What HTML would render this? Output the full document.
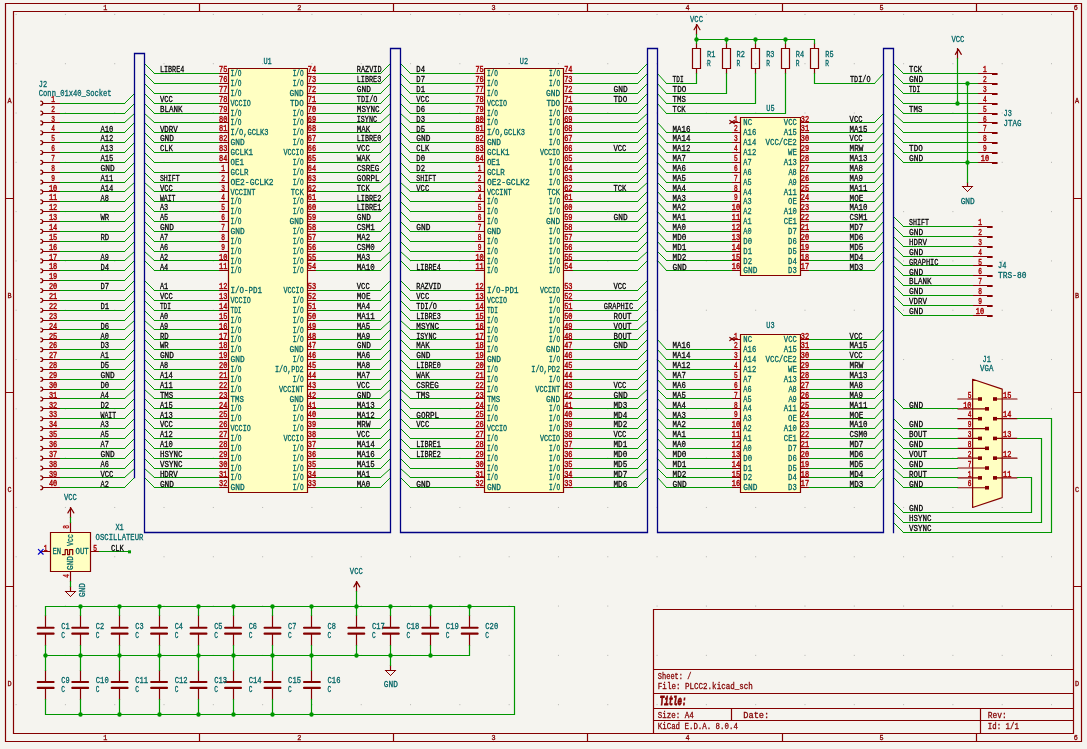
<!DOCTYPE html>
<html><head><meta charset="utf-8"><style>html,body{margin:0;padding:0;background:#F5F4EF;overflow:hidden}svg{display:block;will-change:transform}</style></head><body>
<svg width="1087" height="749" viewBox="0 0 1087 749" font-family='"Liberation Mono", monospace' font-size="7.6">
<rect width="1087" height="749" fill="#F5F4EF"/>
<path d="M15.61 14.41h1M15.61 63.71h1M15.61 113.02h1M15.61 162.32h1M15.61 211.63h1M15.61 260.93h1M15.61 310.24h1M15.61 359.54h1M15.61 408.85h1M15.61 458.15h1M15.61 507.46h1M15.61 556.76h1M15.61 606.07h1M15.61 655.37h1M15.61 704.68h1M64.91 14.41h1M64.91 63.71h1M64.91 113.02h1M64.91 162.32h1M64.91 211.63h1M64.91 260.93h1M64.91 310.24h1M64.91 359.54h1M64.91 408.85h1M64.91 458.15h1M64.91 507.46h1M64.91 556.76h1M64.91 606.07h1M64.91 655.37h1M64.91 704.68h1M114.22 14.41h1M114.22 63.71h1M114.22 113.02h1M114.22 162.32h1M114.22 211.63h1M114.22 260.93h1M114.22 310.24h1M114.22 359.54h1M114.22 408.85h1M114.22 458.15h1M114.22 507.46h1M114.22 556.76h1M114.22 606.07h1M114.22 655.37h1M114.22 704.68h1M163.52 14.41h1M163.52 63.71h1M163.52 113.02h1M163.52 162.32h1M163.52 211.63h1M163.52 260.93h1M163.52 310.24h1M163.52 359.54h1M163.52 408.85h1M163.52 458.15h1M163.52 507.46h1M163.52 556.76h1M163.52 606.07h1M163.52 655.37h1M163.52 704.68h1M212.83 14.41h1M212.83 63.71h1M212.83 113.02h1M212.83 162.32h1M212.83 211.63h1M212.83 260.93h1M212.83 310.24h1M212.83 359.54h1M212.83 408.85h1M212.83 458.15h1M212.83 507.46h1M212.83 556.76h1M212.83 606.07h1M212.83 655.37h1M212.83 704.68h1M262.13 14.41h1M262.13 63.71h1M262.13 113.02h1M262.13 162.32h1M262.13 211.63h1M262.13 260.93h1M262.13 310.24h1M262.13 359.54h1M262.13 408.85h1M262.13 458.15h1M262.13 507.46h1M262.13 556.76h1M262.13 606.07h1M262.13 655.37h1M262.13 704.68h1M311.44 14.41h1M311.44 63.71h1M311.44 113.02h1M311.44 162.32h1M311.44 211.63h1M311.44 260.93h1M311.44 310.24h1M311.44 359.54h1M311.44 408.85h1M311.44 458.15h1M311.44 507.46h1M311.44 556.76h1M311.44 606.07h1M311.44 655.37h1M311.44 704.68h1M360.74 14.41h1M360.74 63.71h1M360.74 113.02h1M360.74 162.32h1M360.74 211.63h1M360.74 260.93h1M360.74 310.24h1M360.74 359.54h1M360.74 408.85h1M360.74 458.15h1M360.74 507.46h1M360.74 556.76h1M360.74 606.07h1M360.74 655.37h1M360.74 704.68h1M410.05 14.41h1M410.05 63.71h1M410.05 113.02h1M410.05 162.32h1M410.05 211.63h1M410.05 260.93h1M410.05 310.24h1M410.05 359.54h1M410.05 408.85h1M410.05 458.15h1M410.05 507.46h1M410.05 556.76h1M410.05 606.07h1M410.05 655.37h1M410.05 704.68h1M459.35 14.41h1M459.35 63.71h1M459.35 113.02h1M459.35 162.32h1M459.35 211.63h1M459.35 260.93h1M459.35 310.24h1M459.35 359.54h1M459.35 408.85h1M459.35 458.15h1M459.35 507.46h1M459.35 556.76h1M459.35 606.07h1M459.35 655.37h1M459.35 704.68h1M508.66 14.41h1M508.66 63.71h1M508.66 113.02h1M508.66 162.32h1M508.66 211.63h1M508.66 260.93h1M508.66 310.24h1M508.66 359.54h1M508.66 408.85h1M508.66 458.15h1M508.66 507.46h1M508.66 556.76h1M508.66 606.07h1M508.66 655.37h1M508.66 704.68h1M557.96 14.41h1M557.96 63.71h1M557.96 113.02h1M557.96 162.32h1M557.96 211.63h1M557.96 260.93h1M557.96 310.24h1M557.96 359.54h1M557.96 408.85h1M557.96 458.15h1M557.96 507.46h1M557.96 556.76h1M557.96 606.07h1M557.96 655.37h1M557.96 704.68h1M607.27 14.41h1M607.27 63.71h1M607.27 113.02h1M607.27 162.32h1M607.27 211.63h1M607.27 260.93h1M607.27 310.24h1M607.27 359.54h1M607.27 408.85h1M607.27 458.15h1M607.27 507.46h1M607.27 556.76h1M607.27 606.07h1M607.27 655.37h1M607.27 704.68h1M656.57 14.41h1M656.57 63.71h1M656.57 113.02h1M656.57 162.32h1M656.57 211.63h1M656.57 260.93h1M656.57 310.24h1M656.57 359.54h1M656.57 408.85h1M656.57 458.15h1M656.57 507.46h1M656.57 556.76h1M656.57 606.07h1M656.57 655.37h1M656.57 704.68h1M705.88 14.41h1M705.88 63.71h1M705.88 113.02h1M705.88 162.32h1M705.88 211.63h1M705.88 260.93h1M705.88 310.24h1M705.88 359.54h1M705.88 408.85h1M705.88 458.15h1M705.88 507.46h1M705.88 556.76h1M705.88 606.07h1M705.88 655.37h1M705.88 704.68h1M755.18 14.41h1M755.18 63.71h1M755.18 113.02h1M755.18 162.32h1M755.18 211.63h1M755.18 260.93h1M755.18 310.24h1M755.18 359.54h1M755.18 408.85h1M755.18 458.15h1M755.18 507.46h1M755.18 556.76h1M755.18 606.07h1M755.18 655.37h1M755.18 704.68h1M804.49 14.41h1M804.49 63.71h1M804.49 113.02h1M804.49 162.32h1M804.49 211.63h1M804.49 260.93h1M804.49 310.24h1M804.49 359.54h1M804.49 408.85h1M804.49 458.15h1M804.49 507.46h1M804.49 556.76h1M804.49 606.07h1M804.49 655.37h1M804.49 704.68h1M853.79 14.41h1M853.79 63.71h1M853.79 113.02h1M853.79 162.32h1M853.79 211.63h1M853.79 260.93h1M853.79 310.24h1M853.79 359.54h1M853.79 408.85h1M853.79 458.15h1M853.79 507.46h1M853.79 556.76h1M853.79 606.07h1M853.79 655.37h1M853.79 704.68h1M903.1 14.41h1M903.1 63.71h1M903.1 113.02h1M903.1 162.32h1M903.1 211.63h1M903.1 260.93h1M903.1 310.24h1M903.1 359.54h1M903.1 408.85h1M903.1 458.15h1M903.1 507.46h1M903.1 556.76h1M903.1 606.07h1M903.1 655.37h1M903.1 704.68h1M952.4 14.41h1M952.4 63.71h1M952.4 113.02h1M952.4 162.32h1M952.4 211.63h1M952.4 260.93h1M952.4 310.24h1M952.4 359.54h1M952.4 408.85h1M952.4 458.15h1M952.4 507.46h1M952.4 556.76h1M952.4 606.07h1M952.4 655.37h1M952.4 704.68h1M1001.71 14.41h1M1001.71 63.71h1M1001.71 113.02h1M1001.71 162.32h1M1001.71 211.63h1M1001.71 260.93h1M1001.71 310.24h1M1001.71 359.54h1M1001.71 408.85h1M1001.71 458.15h1M1001.71 507.46h1M1001.71 556.76h1M1001.71 606.07h1M1001.71 655.37h1M1001.71 704.68h1M1051.01 14.41h1M1051.01 63.71h1M1051.01 113.02h1M1051.01 162.32h1M1051.01 211.63h1M1051.01 260.93h1M1051.01 310.24h1M1051.01 359.54h1M1051.01 408.85h1M1051.01 458.15h1M1051.01 507.46h1M1051.01 556.76h1M1051.01 606.07h1M1051.01 655.37h1M1051.01 704.68h1" stroke="#B4B4B0" stroke-width="1" fill="none"/>
<rect x="228.12" y="68.64" width="78.89" height="424.02" fill="#FFFFC2"/>
<rect x="484.5" y="68.64" width="78.89" height="424.02" fill="#FFFFC2"/>
<rect x="740.89" y="117.95" width="59.17" height="157.78" fill="#FFFFC2"/>
<rect x="740.89" y="334.89" width="59.17" height="157.78" fill="#FFFFC2"/>
<rect x="991.98" y="73" width="5.6" height="2" fill="#840000"/>
<rect x="991.98" y="83" width="5.6" height="2" fill="#840000"/>
<rect x="991.98" y="93" width="5.6" height="2" fill="#840000"/>
<rect x="991.98" y="103" width="5.6" height="2" fill="#840000"/>
<rect x="991.98" y="113" width="5.6" height="2" fill="#840000"/>
<rect x="991.98" y="122" width="5.6" height="2" fill="#840000"/>
<rect x="991.98" y="132" width="5.6" height="2" fill="#840000"/>
<rect x="991.98" y="142" width="5.6" height="2" fill="#840000"/>
<rect x="991.98" y="152" width="5.6" height="2" fill="#840000"/>
<rect x="991.98" y="162" width="5.6" height="2" fill="#840000"/>
<rect x="987.05" y="226" width="5.6" height="2" fill="#840000"/>
<rect x="987.05" y="236" width="5.6" height="2" fill="#840000"/>
<rect x="987.05" y="246" width="5.6" height="2" fill="#840000"/>
<rect x="987.05" y="256" width="5.6" height="2" fill="#840000"/>
<rect x="987.05" y="265" width="5.6" height="2" fill="#840000"/>
<rect x="987.05" y="275" width="5.6" height="2" fill="#840000"/>
<rect x="987.05" y="285" width="5.6" height="2" fill="#840000"/>
<rect x="987.05" y="295" width="5.6" height="2" fill="#840000"/>
<rect x="987.05" y="305" width="5.6" height="2" fill="#840000"/>
<rect x="987.05" y="315" width="5.6" height="2" fill="#840000"/>
<path d="M972.63 379.26L1002.21 389.12L1002.21 497.6L972.63 507.46Z" fill="#FFFFC2"/>
<rect x="978" y="397.19" width="4" height="3.6" fill="#840000"/>
<rect x="985" y="407.05" width="4" height="3.6" fill="#840000"/>
<rect x="978" y="416.91" width="4" height="3.6" fill="#840000"/>
<rect x="985" y="426.77" width="4" height="3.6" fill="#840000"/>
<rect x="978" y="436.63" width="4" height="3.6" fill="#840000"/>
<rect x="985" y="446.49" width="4" height="3.6" fill="#840000"/>
<rect x="978" y="456.35" width="4" height="3.6" fill="#840000"/>
<rect x="985" y="466.21" width="4" height="3.6" fill="#840000"/>
<rect x="978" y="476.07" width="4" height="3.6" fill="#840000"/>
<rect x="985" y="485.94" width="4" height="3.6" fill="#840000"/>
<rect x="993" y="397.19" width="4" height="3.6" fill="#840000"/>
<rect x="993" y="416.91" width="4" height="3.6" fill="#840000"/>
<rect x="993" y="436.63" width="4" height="3.6" fill="#840000"/>
<rect x="993" y="456.35" width="4" height="3.6" fill="#840000"/>
<rect x="993" y="476.07" width="4" height="3.6" fill="#840000"/>
<rect x="50.62" y="532.11" width="39.44" height="39.44" fill="#FFFFC2"/>
<rect x="128.01" y="550.33" width="3" height="3" fill="#009600"/>
<path d="M5.5 3.5H1081.5M1081.5 3.5V741.5M5.5 741.5H1081.5M5.5 3.5V741.5M13.5 11.5H1073.5M1073.5 11.5V733.5M13.5 733.5H1073.5M13.5 11.5V733.5M199.5 3.5V11.5M199.5 733.5V741.5M393.5 3.5V11.5M393.5 733.5V741.5M587.5 3.5V11.5M587.5 733.5V741.5M782.5 3.5V11.5M782.5 733.5V741.5M976.5 3.5V11.5M976.5 733.5V741.5M5.5 198.5H13.5M1073.5 198.5H1081.5M5.5 392.5H13.5M1073.5 392.5H1081.5M5.5 586.5H13.5M1073.5 586.5H1081.5M653.5 609.5H1073.5M1073.5 609.5V733.5M653.5 733.5H1073.5M653.5 609.5V733.5M653.5 669.5H1073.5M653.5 693.5H1073.5M653.5 708.5H1073.5M653.5 720.5H1073.5M731.5 708.5V720.5M980.5 708.5V733.5M45.5 103.5H60.5M42.5 103.5H45.5M45.5 113.5H60.5M42.5 113.5H45.5M45.5 122.5H60.5M42.5 122.5H45.5M45.5 132.5H60.5M42.5 132.5H45.5M45.5 142.5H60.5M42.5 142.5H45.5M45.5 152.5H60.5M42.5 152.5H45.5M45.5 162.5H60.5M42.5 162.5H45.5M45.5 172.5H60.5M42.5 172.5H45.5M45.5 182.5H60.5M42.5 182.5H45.5M45.5 191.5H60.5M42.5 191.5H45.5M45.5 201.5H60.5M42.5 201.5H45.5M45.5 211.5H60.5M42.5 211.5H45.5M45.5 221.5H60.5M42.5 221.5H45.5M45.5 231.5H60.5M42.5 231.5H45.5M45.5 241.5H60.5M42.5 241.5H45.5M45.5 251.5H60.5M42.5 251.5H45.5M45.5 260.5H60.5M42.5 260.5H45.5M45.5 270.5H60.5M42.5 270.5H45.5M45.5 280.5H60.5M42.5 280.5H45.5M45.5 290.5H60.5M42.5 290.5H45.5M45.5 300.5H60.5M42.5 300.5H45.5M45.5 310.5H60.5M42.5 310.5H45.5M45.5 320.5H60.5M42.5 320.5H45.5M45.5 329.5H60.5M42.5 329.5H45.5M45.5 339.5H60.5M42.5 339.5H45.5M45.5 349.5H60.5M42.5 349.5H45.5M45.5 359.5H60.5M42.5 359.5H45.5M45.5 369.5H60.5M42.5 369.5H45.5M45.5 379.5H60.5M42.5 379.5H45.5M45.5 389.5H60.5M42.5 389.5H45.5M45.5 398.5H60.5M42.5 398.5H45.5M45.5 408.5H60.5M42.5 408.5H45.5M45.5 418.5H60.5M42.5 418.5H45.5M45.5 428.5H60.5M42.5 428.5H45.5M45.5 438.5H60.5M42.5 438.5H45.5M45.5 448.5H60.5M42.5 448.5H45.5M45.5 458.5H60.5M42.5 458.5H45.5M45.5 468.5H60.5M42.5 468.5H45.5M45.5 477.5H60.5M42.5 477.5H45.5M45.5 487.5H60.5M42.5 487.5H45.5M228.5 68.5H307.5M307.5 68.5V492.5M228.5 492.5H307.5M228.5 68.5V492.5M218.5 73.5H228.5M307.5 73.5H316.5M218.5 83.5H228.5M307.5 83.5H316.5M218.5 93.5H228.5M307.5 93.5H316.5M218.5 103.5H228.5M307.5 103.5H316.5M218.5 113.5H228.5M307.5 113.5H316.5M218.5 122.5H228.5M307.5 122.5H316.5M218.5 132.5H228.5M307.5 132.5H316.5M218.5 142.5H228.5M307.5 142.5H316.5M218.5 152.5H228.5M307.5 152.5H316.5M218.5 162.5H228.5M307.5 162.5H316.5M218.5 172.5H228.5M307.5 172.5H316.5M218.5 182.5H228.5M307.5 182.5H316.5M218.5 191.5H228.5M307.5 191.5H316.5M218.5 201.5H228.5M307.5 201.5H316.5M218.5 211.5H228.5M307.5 211.5H316.5M218.5 221.5H228.5M307.5 221.5H316.5M218.5 231.5H228.5M307.5 231.5H316.5M218.5 241.5H228.5M307.5 241.5H316.5M218.5 251.5H228.5M307.5 251.5H316.5M218.5 260.5H228.5M307.5 260.5H316.5M218.5 270.5H228.5M307.5 270.5H316.5M218.5 290.5H228.5M307.5 290.5H316.5M218.5 300.5H228.5M307.5 300.5H316.5M218.5 310.5H228.5M307.5 310.5H316.5M218.5 320.5H228.5M307.5 320.5H316.5M218.5 329.5H228.5M307.5 329.5H316.5M218.5 339.5H228.5M307.5 339.5H316.5M218.5 349.5H228.5M307.5 349.5H316.5M218.5 359.5H228.5M307.5 359.5H316.5M218.5 369.5H228.5M307.5 369.5H316.5M218.5 379.5H228.5M307.5 379.5H316.5M218.5 389.5H228.5M307.5 389.5H316.5M218.5 398.5H228.5M307.5 398.5H316.5M218.5 408.5H228.5M307.5 408.5H316.5M218.5 418.5H228.5M307.5 418.5H316.5M218.5 428.5H228.5M307.5 428.5H316.5M218.5 438.5H228.5M307.5 438.5H316.5M218.5 448.5H228.5M307.5 448.5H316.5M218.5 458.5H228.5M307.5 458.5H316.5M218.5 468.5H228.5M307.5 468.5H316.5M218.5 477.5H228.5M307.5 477.5H316.5M218.5 487.5H228.5M307.5 487.5H316.5M484.5 68.5H563.5M563.5 68.5V492.5M484.5 492.5H563.5M484.5 68.5V492.5M474.5 73.5H484.5M563.5 73.5H573.5M474.5 83.5H484.5M563.5 83.5H573.5M474.5 93.5H484.5M563.5 93.5H573.5M474.5 103.5H484.5M563.5 103.5H573.5M474.5 113.5H484.5M563.5 113.5H573.5M474.5 122.5H484.5M563.5 122.5H573.5M474.5 132.5H484.5M563.5 132.5H573.5M474.5 142.5H484.5M563.5 142.5H573.5M474.5 152.5H484.5M563.5 152.5H573.5M474.5 162.5H484.5M563.5 162.5H573.5M474.5 172.5H484.5M563.5 172.5H573.5M474.5 182.5H484.5M563.5 182.5H573.5M474.5 191.5H484.5M563.5 191.5H573.5M474.5 201.5H484.5M563.5 201.5H573.5M474.5 211.5H484.5M563.5 211.5H573.5M474.5 221.5H484.5M563.5 221.5H573.5M474.5 231.5H484.5M563.5 231.5H573.5M474.5 241.5H484.5M563.5 241.5H573.5M474.5 251.5H484.5M563.5 251.5H573.5M474.5 260.5H484.5M563.5 260.5H573.5M474.5 270.5H484.5M563.5 270.5H573.5M474.5 290.5H484.5M563.5 290.5H573.5M474.5 300.5H484.5M563.5 300.5H573.5M474.5 310.5H484.5M563.5 310.5H573.5M474.5 320.5H484.5M563.5 320.5H573.5M474.5 329.5H484.5M563.5 329.5H573.5M474.5 339.5H484.5M563.5 339.5H573.5M474.5 349.5H484.5M563.5 349.5H573.5M474.5 359.5H484.5M563.5 359.5H573.5M474.5 369.5H484.5M563.5 369.5H573.5M474.5 379.5H484.5M563.5 379.5H573.5M474.5 389.5H484.5M563.5 389.5H573.5M474.5 398.5H484.5M563.5 398.5H573.5M474.5 408.5H484.5M563.5 408.5H573.5M474.5 418.5H484.5M563.5 418.5H573.5M474.5 428.5H484.5M563.5 428.5H573.5M474.5 438.5H484.5M563.5 438.5H573.5M474.5 448.5H484.5M563.5 448.5H573.5M474.5 458.5H484.5M563.5 458.5H573.5M474.5 468.5H484.5M563.5 468.5H573.5M474.5 477.5H484.5M563.5 477.5H573.5M474.5 487.5H484.5M563.5 487.5H573.5M692.5 48.5H700.5M700.5 48.5V68.5M692.5 68.5H700.5M692.5 48.5V68.5M696.5 43.5V48.5M696.5 68.5V73.5M722.5 48.5H730.5M730.5 48.5V68.5M722.5 68.5H730.5M722.5 48.5V68.5M726.5 43.5V48.5M726.5 68.5V73.5M751.5 48.5H759.5M759.5 48.5V68.5M751.5 68.5H759.5M751.5 48.5V68.5M755.5 43.5V48.5M755.5 68.5V73.5M781.5 48.5H789.5M789.5 48.5V68.5M781.5 68.5H789.5M781.5 48.5V68.5M785.5 43.5V48.5M785.5 68.5V73.5M810.5 48.5H818.5M818.5 48.5V68.5M810.5 68.5H818.5M810.5 48.5V68.5M814.5 43.5V48.5M814.5 68.5V73.5M696.5 24.5V34.5M740.5 117.5H800.5M800.5 117.5V275.5M740.5 275.5H800.5M740.5 117.5V275.5M731.5 122.5H740.5M800.5 122.5H809.5M731.5 132.5H740.5M800.5 132.5H809.5M731.5 142.5H740.5M800.5 142.5H809.5M731.5 152.5H740.5M800.5 152.5H809.5M731.5 162.5H740.5M800.5 162.5H809.5M731.5 172.5H740.5M800.5 172.5H809.5M731.5 182.5H740.5M800.5 182.5H809.5M731.5 191.5H740.5M800.5 191.5H809.5M731.5 201.5H740.5M800.5 201.5H809.5M731.5 211.5H740.5M800.5 211.5H809.5M731.5 221.5H740.5M800.5 221.5H809.5M731.5 231.5H740.5M800.5 231.5H809.5M731.5 241.5H740.5M800.5 241.5H809.5M731.5 251.5H740.5M800.5 251.5H809.5M731.5 260.5H740.5M800.5 260.5H809.5M731.5 270.5H740.5M800.5 270.5H809.5M740.5 334.5H800.5M800.5 334.5V492.5M740.5 492.5H800.5M740.5 334.5V492.5M731.5 339.5H740.5M800.5 339.5H809.5M731.5 349.5H740.5M800.5 349.5H809.5M731.5 359.5H740.5M800.5 359.5H809.5M731.5 369.5H740.5M800.5 369.5H809.5M731.5 379.5H740.5M800.5 379.5H809.5M731.5 389.5H740.5M800.5 389.5H809.5M731.5 398.5H740.5M800.5 398.5H809.5M731.5 408.5H740.5M800.5 408.5H809.5M731.5 418.5H740.5M800.5 418.5H809.5M731.5 428.5H740.5M800.5 428.5H809.5M731.5 438.5H740.5M800.5 438.5H809.5M731.5 448.5H740.5M800.5 448.5H809.5M731.5 458.5H740.5M800.5 458.5H809.5M731.5 468.5H740.5M800.5 468.5H809.5M731.5 477.5H740.5M800.5 477.5H809.5M731.5 487.5H740.5M800.5 487.5H809.5M977.5 73.5H993.5M977.5 83.5H993.5M977.5 93.5H993.5M977.5 103.5H993.5M977.5 113.5H993.5M977.5 122.5H993.5M977.5 132.5H993.5M977.5 142.5H993.5M977.5 152.5H993.5M977.5 162.5H993.5M957.5 48.5V58.5M967.5 182.5V186.5M962.5 186.5H972.5M972.5 226.5H988.5M972.5 236.5H988.5M972.5 246.5H988.5M972.5 256.5H988.5M972.5 265.5H988.5M972.5 275.5H988.5M972.5 285.5H988.5M972.5 295.5H988.5M972.5 305.5H988.5M972.5 315.5H988.5M50.5 532.5H90.5M90.5 532.5V571.5M50.5 571.5H90.5M50.5 532.5V571.5M70.5 522.5V532.5M70.5 571.5V581.5M40.5 551.5H50.5M90.5 551.5H99.5M70.5 507.5V517.5M70.5 586.5V591.5M65.5 591.5H75.5M45.5 615.5V627.5M45.5 633.5V645.5M80.5 615.5V627.5M80.5 633.5V645.5M119.5 615.5V627.5M119.5 633.5V645.5M159.5 615.5V627.5M159.5 633.5V645.5M198.5 615.5V627.5M198.5 633.5V645.5M233.5 615.5V627.5M233.5 633.5V645.5M272.5 615.5V627.5M272.5 633.5V645.5M311.5 615.5V627.5M311.5 633.5V645.5M356.5 615.5V627.5M356.5 633.5V645.5M390.5 615.5V627.5M390.5 633.5V645.5M430.5 615.5V627.5M430.5 633.5V645.5M469.5 615.5V627.5M469.5 633.5V645.5M45.5 670.5V681.5M45.5 687.5V699.5M80.5 670.5V681.5M80.5 687.5V699.5M119.5 670.5V681.5M119.5 687.5V699.5M159.5 670.5V681.5M159.5 687.5V699.5M198.5 670.5V681.5M198.5 687.5V699.5M233.5 670.5V681.5M233.5 687.5V699.5M272.5 670.5V681.5M272.5 687.5V699.5M311.5 670.5V681.5M311.5 687.5V699.5M356.5 581.5V591.5M390.5 665.5V670.5M385.5 670.5H395.5" stroke="#840000" stroke-width="1.2" fill="none" stroke-linecap="square" stroke-linejoin="round"/>
<path d="M40.76 101.18A1.97 1.97 0 0 1 40.76 105.13M40.76 111.04A1.97 1.97 0 0 1 40.76 114.99M40.76 120.9A1.97 1.97 0 0 1 40.76 124.85M40.76 130.77A1.97 1.97 0 0 1 40.76 134.71M40.76 140.63A1.97 1.97 0 0 1 40.76 144.57M40.76 150.49A1.97 1.97 0 0 1 40.76 154.43M40.76 160.35A1.97 1.97 0 0 1 40.76 164.29M40.76 170.21A1.97 1.97 0 0 1 40.76 174.15M40.76 180.07A1.97 1.97 0 0 1 40.76 184.02M40.76 189.93A1.97 1.97 0 0 1 40.76 193.88M40.76 199.79A1.97 1.97 0 0 1 40.76 203.74M40.76 209.65A1.97 1.97 0 0 1 40.76 213.6M40.76 219.51A1.97 1.97 0 0 1 40.76 223.46M40.76 229.38A1.97 1.97 0 0 1 40.76 233.32M40.76 239.24A1.97 1.97 0 0 1 40.76 243.18M40.76 249.1A1.97 1.97 0 0 1 40.76 253.04M40.76 258.96A1.97 1.97 0 0 1 40.76 262.9M40.76 268.82A1.97 1.97 0 0 1 40.76 272.76M40.76 278.68A1.97 1.97 0 0 1 40.76 282.63M40.76 288.54A1.97 1.97 0 0 1 40.76 292.49M40.76 298.4A1.97 1.97 0 0 1 40.76 302.35M40.76 308.26A1.97 1.97 0 0 1 40.76 312.21M40.76 318.13A1.97 1.97 0 0 1 40.76 322.07M40.76 327.99A1.97 1.97 0 0 1 40.76 331.93M40.76 337.85A1.97 1.97 0 0 1 40.76 341.79M40.76 347.71A1.97 1.97 0 0 1 40.76 351.65M40.76 357.57A1.97 1.97 0 0 1 40.76 361.51M40.76 367.43A1.97 1.97 0 0 1 40.76 371.37M40.76 377.29A1.97 1.97 0 0 1 40.76 381.24M40.76 387.15A1.97 1.97 0 0 1 40.76 391.1M40.76 397.01A1.97 1.97 0 0 1 40.76 400.96M40.76 406.87A1.97 1.97 0 0 1 40.76 410.82M40.76 416.74A1.97 1.97 0 0 1 40.76 420.68M40.76 426.6A1.97 1.97 0 0 1 40.76 430.54M40.76 436.46A1.97 1.97 0 0 1 40.76 440.4M40.76 446.32A1.97 1.97 0 0 1 40.76 450.26M40.76 456.18A1.97 1.97 0 0 1 40.76 460.12M40.76 466.04A1.97 1.97 0 0 1 40.76 469.99M40.76 475.9A1.97 1.97 0 0 1 40.76 479.85M40.76 485.76A1.97 1.97 0 0 1 40.76 489.71M694.06 29.7L697.02 24.77L699.98 29.7M729.83 120.4L734.23 123.6M729.83 123.6L734.23 120.4M729.83 337.4L734.23 340.6M729.83 340.6L734.23 337.4M955.38 54.35L958.33 49.42L961.29 54.35M972.63 379.26L1002.21 389.12L1002.21 497.6L972.63 507.46ZM957.83 398.99L980 398.99M957.83 408.85L987 408.85M957.83 418.71L980 418.71M957.83 428.57L987 428.57M957.83 438.43L980 438.43M957.83 448.29L987 448.29M957.83 458.15L980 458.15M957.83 468.01L987 468.01M957.83 477.87L980 477.87M957.83 487.74L987 487.74M995 398.99L1017 398.99M995 418.71L1017 418.71M995 438.43L1017 438.43M995 458.15L1017 458.15M995 477.87L1017 477.87M67.88 512.89L70.84 507.96L73.8 512.89M62.4 554.6L65.2 554.6L65.2 549.6L67.6 549.6L67.6 554.6L69.6 554.6L69.6 549.6L72.7 549.6L72.7 554.6M353.85 586.85L356.81 581.92L359.77 586.85" stroke="#840000" stroke-width="1.2" fill="none" stroke-linecap="round" stroke-linejoin="round"/>
<path d="M60.5 103.5H124.5M60.5 113.5H124.5M60.5 122.5H124.5M60.5 132.5H124.5M60.5 142.5H124.5M60.5 152.5H124.5M60.5 162.5H124.5M60.5 172.5H124.5M60.5 182.5H124.5M60.5 191.5H124.5M60.5 201.5H124.5M60.5 211.5H124.5M60.5 221.5H124.5M60.5 231.5H124.5M60.5 241.5H124.5M60.5 251.5H124.5M60.5 260.5H124.5M60.5 270.5H124.5M60.5 280.5H124.5M60.5 290.5H124.5M60.5 300.5H124.5M60.5 310.5H124.5M60.5 320.5H124.5M60.5 329.5H124.5M60.5 339.5H124.5M60.5 349.5H124.5M60.5 359.5H124.5M60.5 369.5H124.5M60.5 379.5H124.5M60.5 389.5H124.5M60.5 398.5H124.5M60.5 408.5H124.5M60.5 418.5H124.5M60.5 428.5H124.5M60.5 438.5H124.5M60.5 448.5H124.5M60.5 458.5H124.5M60.5 468.5H124.5M60.5 477.5H124.5M60.5 487.5H124.5M154.5 73.5H218.5M316.5 73.5H380.5M154.5 83.5H218.5M316.5 83.5H380.5M154.5 93.5H218.5M316.5 93.5H380.5M154.5 103.5H218.5M316.5 103.5H380.5M154.5 113.5H218.5M316.5 113.5H380.5M154.5 122.5H218.5M316.5 122.5H380.5M154.5 132.5H218.5M316.5 132.5H380.5M154.5 142.5H218.5M316.5 142.5H380.5M154.5 152.5H218.5M316.5 152.5H380.5M154.5 162.5H218.5M316.5 162.5H380.5M154.5 172.5H218.5M316.5 172.5H380.5M154.5 182.5H218.5M316.5 182.5H380.5M154.5 191.5H218.5M316.5 191.5H380.5M154.5 201.5H218.5M316.5 201.5H380.5M154.5 211.5H218.5M316.5 211.5H380.5M154.5 221.5H218.5M316.5 221.5H380.5M154.5 231.5H218.5M316.5 231.5H380.5M154.5 241.5H218.5M316.5 241.5H380.5M154.5 251.5H218.5M316.5 251.5H380.5M154.5 260.5H218.5M316.5 260.5H380.5M154.5 270.5H218.5M316.5 270.5H380.5M154.5 290.5H218.5M316.5 290.5H380.5M154.5 300.5H218.5M316.5 300.5H380.5M154.5 310.5H218.5M316.5 310.5H380.5M154.5 320.5H218.5M316.5 320.5H380.5M154.5 329.5H218.5M316.5 329.5H380.5M154.5 339.5H218.5M316.5 339.5H380.5M154.5 349.5H218.5M316.5 349.5H380.5M154.5 359.5H218.5M316.5 359.5H380.5M154.5 369.5H218.5M316.5 369.5H380.5M154.5 379.5H218.5M316.5 379.5H380.5M154.5 389.5H218.5M316.5 389.5H380.5M154.5 398.5H218.5M316.5 398.5H380.5M154.5 408.5H218.5M316.5 408.5H380.5M154.5 418.5H218.5M316.5 418.5H380.5M154.5 428.5H218.5M316.5 428.5H380.5M154.5 438.5H218.5M316.5 438.5H380.5M154.5 448.5H218.5M316.5 448.5H380.5M154.5 458.5H218.5M316.5 458.5H380.5M154.5 468.5H218.5M316.5 468.5H380.5M154.5 477.5H218.5M316.5 477.5H380.5M154.5 487.5H218.5M316.5 487.5H380.5M410.5 73.5H474.5M573.5 73.5H637.5M410.5 83.5H474.5M573.5 83.5H637.5M410.5 93.5H474.5M573.5 93.5H637.5M410.5 103.5H474.5M573.5 103.5H637.5M410.5 113.5H474.5M573.5 113.5H637.5M410.5 122.5H474.5M573.5 122.5H637.5M410.5 132.5H474.5M573.5 132.5H637.5M410.5 142.5H474.5M573.5 142.5H637.5M410.5 152.5H474.5M573.5 152.5H637.5M410.5 162.5H474.5M573.5 162.5H637.5M410.5 172.5H474.5M573.5 172.5H637.5M410.5 182.5H474.5M573.5 182.5H637.5M410.5 191.5H474.5M573.5 191.5H637.5M410.5 201.5H474.5M573.5 201.5H637.5M410.5 211.5H474.5M573.5 211.5H637.5M410.5 221.5H474.5M573.5 221.5H637.5M410.5 231.5H474.5M573.5 231.5H637.5M410.5 241.5H474.5M573.5 241.5H637.5M410.5 251.5H474.5M573.5 251.5H637.5M410.5 260.5H474.5M573.5 260.5H637.5M410.5 270.5H474.5M573.5 270.5H637.5M410.5 290.5H474.5M573.5 290.5H637.5M410.5 300.5H474.5M573.5 300.5H637.5M410.5 310.5H474.5M573.5 310.5H637.5M410.5 320.5H474.5M573.5 320.5H637.5M410.5 329.5H474.5M573.5 329.5H637.5M410.5 339.5H474.5M573.5 339.5H637.5M410.5 349.5H474.5M573.5 349.5H637.5M410.5 359.5H474.5M573.5 359.5H637.5M410.5 369.5H474.5M573.5 369.5H637.5M410.5 379.5H474.5M573.5 379.5H637.5M410.5 389.5H474.5M573.5 389.5H637.5M410.5 398.5H474.5M573.5 398.5H637.5M410.5 408.5H474.5M573.5 408.5H637.5M410.5 418.5H474.5M573.5 418.5H637.5M410.5 428.5H474.5M573.5 428.5H637.5M410.5 438.5H474.5M573.5 438.5H637.5M410.5 448.5H474.5M573.5 448.5H637.5M410.5 458.5H474.5M573.5 458.5H637.5M410.5 468.5H474.5M573.5 468.5H637.5M410.5 477.5H474.5M573.5 477.5H637.5M410.5 487.5H474.5M573.5 487.5H637.5M696.5 39.5V43.5M726.5 39.5V43.5M755.5 39.5V43.5M785.5 39.5V43.5M814.5 39.5V43.5M696.5 39.5H814.5M696.5 34.5V39.5M696.5 73.5V83.5M666.5 83.5H696.5M726.5 73.5V93.5M666.5 93.5H726.5M755.5 73.5V103.5M666.5 103.5H755.5M785.5 73.5V113.5M666.5 113.5H785.5M814.5 73.5V83.5M814.5 83.5H874.5M809.5 122.5H874.5M666.5 132.5H731.5M809.5 132.5H874.5M666.5 142.5H731.5M809.5 142.5H874.5M666.5 152.5H731.5M809.5 152.5H874.5M666.5 162.5H731.5M809.5 162.5H874.5M666.5 172.5H731.5M809.5 172.5H874.5M666.5 182.5H731.5M809.5 182.5H874.5M666.5 191.5H731.5M809.5 191.5H874.5M666.5 201.5H731.5M809.5 201.5H874.5M666.5 211.5H731.5M809.5 211.5H874.5M666.5 221.5H731.5M809.5 221.5H874.5M666.5 231.5H731.5M809.5 231.5H874.5M666.5 241.5H731.5M809.5 241.5H874.5M666.5 251.5H731.5M809.5 251.5H874.5M666.5 260.5H731.5M809.5 260.5H874.5M666.5 270.5H731.5M809.5 270.5H874.5M809.5 339.5H874.5M666.5 349.5H731.5M809.5 349.5H874.5M666.5 359.5H731.5M809.5 359.5H874.5M666.5 369.5H731.5M809.5 369.5H874.5M666.5 379.5H731.5M809.5 379.5H874.5M666.5 389.5H731.5M809.5 389.5H874.5M666.5 398.5H731.5M809.5 398.5H874.5M666.5 408.5H731.5M809.5 408.5H874.5M666.5 418.5H731.5M809.5 418.5H874.5M666.5 428.5H731.5M809.5 428.5H874.5M666.5 438.5H731.5M809.5 438.5H874.5M666.5 448.5H731.5M809.5 448.5H874.5M666.5 458.5H731.5M809.5 458.5H874.5M666.5 468.5H731.5M809.5 468.5H874.5M666.5 477.5H731.5M809.5 477.5H874.5M666.5 487.5H731.5M809.5 487.5H874.5M903.5 73.5H977.5M903.5 83.5H977.5M903.5 93.5H977.5M903.5 103.5H977.5M903.5 113.5H977.5M903.5 122.5H977.5M903.5 132.5H977.5M903.5 142.5H977.5M903.5 152.5H977.5M903.5 162.5H977.5M957.5 58.5V103.5M967.5 83.5V182.5M903.5 226.5H972.5M903.5 236.5H972.5M903.5 246.5H972.5M903.5 256.5H972.5M903.5 265.5H972.5M903.5 275.5H972.5M903.5 285.5H972.5M903.5 295.5H972.5M903.5 305.5H972.5M903.5 315.5H972.5M903.5 408.5H957.5M903.5 428.5H957.5M903.5 438.5H957.5M903.5 448.5H957.5M903.5 458.5H957.5M903.5 468.5H957.5M903.5 477.5H957.5M903.5 487.5H957.5M903.5 512.5H1031.5M1031.5 477.5V512.5M1017.5 477.5H1031.5M903.5 522.5H1041.5M1041.5 438.5V522.5M1017.5 438.5H1041.5M903.5 532.5H1051.5M1051.5 418.5V532.5M1017.5 418.5H1051.5M70.5 517.5V522.5M70.5 581.5V586.5M99.5 551.5H129.5M45.5 606.5V615.5M45.5 645.5V655.5M80.5 606.5V615.5M80.5 645.5V655.5M119.5 606.5V615.5M119.5 645.5V655.5M159.5 606.5V615.5M159.5 645.5V655.5M198.5 606.5V615.5M198.5 645.5V655.5M233.5 606.5V615.5M233.5 645.5V655.5M272.5 606.5V615.5M272.5 645.5V655.5M311.5 606.5V615.5M311.5 645.5V655.5M356.5 606.5V615.5M356.5 645.5V655.5M390.5 606.5V615.5M390.5 645.5V655.5M430.5 606.5V615.5M430.5 645.5V655.5M469.5 606.5V615.5M469.5 645.5V655.5M45.5 655.5V670.5M45.5 699.5V714.5M80.5 655.5V670.5M80.5 699.5V714.5M119.5 655.5V670.5M119.5 699.5V714.5M159.5 655.5V670.5M159.5 699.5V714.5M198.5 655.5V670.5M198.5 699.5V714.5M233.5 655.5V670.5M233.5 699.5V714.5M272.5 655.5V670.5M272.5 699.5V714.5M311.5 655.5V670.5M311.5 699.5V714.5M45.5 606.5H514.5M514.5 606.5V714.5M45.5 714.5H514.5M45.5 655.5H469.5M356.5 591.5V606.5M390.5 655.5V665.5" stroke="#009600" stroke-width="1.2" fill="none" stroke-linecap="square" stroke-linejoin="round"/>
<path d="M124.5 103.5L134.5 93.5M124.5 113.5L134.5 103.5M124.5 122.5L134.5 113.5M124.5 132.5L134.5 122.5M124.5 142.5L134.5 132.5M124.5 152.5L134.5 142.5M124.5 162.5L134.5 152.5M124.5 172.5L134.5 162.5M124.5 182.5L134.5 172.5M124.5 191.5L134.5 182.5M124.5 201.5L134.5 191.5M124.5 211.5L134.5 201.5M124.5 221.5L134.5 211.5M124.5 231.5L134.5 221.5M124.5 241.5L134.5 231.5M124.5 251.5L134.5 241.5M124.5 260.5L134.5 251.5M124.5 270.5L134.5 260.5M124.5 280.5L134.5 270.5M124.5 290.5L134.5 280.5M124.5 300.5L134.5 290.5M124.5 310.5L134.5 300.5M124.5 320.5L134.5 310.5M124.5 329.5L134.5 320.5M124.5 339.5L134.5 329.5M124.5 349.5L134.5 339.5M124.5 359.5L134.5 349.5M124.5 369.5L134.5 359.5M124.5 379.5L134.5 369.5M124.5 389.5L134.5 379.5M124.5 398.5L134.5 389.5M124.5 408.5L134.5 398.5M124.5 418.5L134.5 408.5M124.5 428.5L134.5 418.5M124.5 438.5L134.5 428.5M124.5 448.5L134.5 438.5M124.5 458.5L134.5 448.5M124.5 468.5L134.5 458.5M124.5 477.5L134.5 468.5M124.5 487.5L134.5 477.5M144.5 63.5L154.5 73.5M380.5 73.5L390.5 63.5M144.5 73.5L154.5 83.5M380.5 83.5L390.5 73.5M144.5 83.5L154.5 93.5M380.5 93.5L390.5 83.5M144.5 93.5L154.5 103.5M380.5 103.5L390.5 93.5M144.5 103.5L154.5 113.5M380.5 113.5L390.5 103.5M144.5 113.5L154.5 122.5M380.5 122.5L390.5 113.5M144.5 122.5L154.5 132.5M380.5 132.5L390.5 122.5M144.5 132.5L154.5 142.5M380.5 142.5L390.5 132.5M144.5 142.5L154.5 152.5M380.5 152.5L390.5 142.5M144.5 152.5L154.5 162.5M380.5 162.5L390.5 152.5M144.5 162.5L154.5 172.5M380.5 172.5L390.5 162.5M144.5 172.5L154.5 182.5M380.5 182.5L390.5 172.5M144.5 182.5L154.5 191.5M380.5 191.5L390.5 182.5M144.5 191.5L154.5 201.5M380.5 201.5L390.5 191.5M144.5 201.5L154.5 211.5M380.5 211.5L390.5 201.5M144.5 211.5L154.5 221.5M380.5 221.5L390.5 211.5M144.5 221.5L154.5 231.5M380.5 231.5L390.5 221.5M144.5 231.5L154.5 241.5M380.5 241.5L390.5 231.5M144.5 241.5L154.5 251.5M380.5 251.5L390.5 241.5M144.5 251.5L154.5 260.5M380.5 260.5L390.5 251.5M144.5 260.5L154.5 270.5M380.5 270.5L390.5 260.5M144.5 280.5L154.5 290.5M380.5 290.5L390.5 280.5M144.5 290.5L154.5 300.5M380.5 300.5L390.5 290.5M144.5 300.5L154.5 310.5M380.5 310.5L390.5 300.5M144.5 310.5L154.5 320.5M380.5 320.5L390.5 310.5M144.5 320.5L154.5 329.5M380.5 329.5L390.5 320.5M144.5 329.5L154.5 339.5M380.5 339.5L390.5 329.5M144.5 339.5L154.5 349.5M380.5 349.5L390.5 339.5M144.5 349.5L154.5 359.5M380.5 359.5L390.5 349.5M144.5 359.5L154.5 369.5M380.5 369.5L390.5 359.5M144.5 369.5L154.5 379.5M380.5 379.5L390.5 369.5M144.5 379.5L154.5 389.5M380.5 389.5L390.5 379.5M144.5 389.5L154.5 398.5M380.5 398.5L390.5 389.5M144.5 398.5L154.5 408.5M380.5 408.5L390.5 398.5M144.5 408.5L154.5 418.5M380.5 418.5L390.5 408.5M144.5 418.5L154.5 428.5M380.5 428.5L390.5 418.5M144.5 428.5L154.5 438.5M380.5 438.5L390.5 428.5M144.5 438.5L154.5 448.5M380.5 448.5L390.5 438.5M144.5 448.5L154.5 458.5M380.5 458.5L390.5 448.5M144.5 458.5L154.5 468.5M380.5 468.5L390.5 458.5M144.5 468.5L154.5 477.5M380.5 477.5L390.5 468.5M144.5 477.5L154.5 487.5M380.5 487.5L390.5 477.5M400.5 63.5L410.5 73.5M637.5 73.5L647.5 63.5M400.5 73.5L410.5 83.5M637.5 83.5L647.5 73.5M400.5 83.5L410.5 93.5M637.5 93.5L647.5 83.5M400.5 93.5L410.5 103.5M637.5 103.5L647.5 93.5M400.5 103.5L410.5 113.5M637.5 113.5L647.5 103.5M400.5 113.5L410.5 122.5M637.5 122.5L647.5 113.5M400.5 122.5L410.5 132.5M637.5 132.5L647.5 122.5M400.5 132.5L410.5 142.5M637.5 142.5L647.5 132.5M400.5 142.5L410.5 152.5M637.5 152.5L647.5 142.5M400.5 152.5L410.5 162.5M637.5 162.5L647.5 152.5M400.5 162.5L410.5 172.5M637.5 172.5L647.5 162.5M400.5 172.5L410.5 182.5M637.5 182.5L647.5 172.5M400.5 182.5L410.5 191.5M637.5 191.5L647.5 182.5M400.5 191.5L410.5 201.5M637.5 201.5L647.5 191.5M400.5 201.5L410.5 211.5M637.5 211.5L647.5 201.5M400.5 211.5L410.5 221.5M637.5 221.5L647.5 211.5M400.5 221.5L410.5 231.5M637.5 231.5L647.5 221.5M400.5 231.5L410.5 241.5M637.5 241.5L647.5 231.5M400.5 241.5L410.5 251.5M637.5 251.5L647.5 241.5M400.5 251.5L410.5 260.5M637.5 260.5L647.5 251.5M400.5 260.5L410.5 270.5M637.5 270.5L647.5 260.5M400.5 280.5L410.5 290.5M637.5 290.5L647.5 280.5M400.5 290.5L410.5 300.5M637.5 300.5L647.5 290.5M400.5 300.5L410.5 310.5M637.5 310.5L647.5 300.5M400.5 310.5L410.5 320.5M637.5 320.5L647.5 310.5M400.5 320.5L410.5 329.5M637.5 329.5L647.5 320.5M400.5 329.5L410.5 339.5M637.5 339.5L647.5 329.5M400.5 339.5L410.5 349.5M637.5 349.5L647.5 339.5M400.5 349.5L410.5 359.5M637.5 359.5L647.5 349.5M400.5 359.5L410.5 369.5M637.5 369.5L647.5 359.5M400.5 369.5L410.5 379.5M637.5 379.5L647.5 369.5M400.5 379.5L410.5 389.5M637.5 389.5L647.5 379.5M400.5 389.5L410.5 398.5M637.5 398.5L647.5 389.5M400.5 398.5L410.5 408.5M637.5 408.5L647.5 398.5M400.5 408.5L410.5 418.5M637.5 418.5L647.5 408.5M400.5 418.5L410.5 428.5M637.5 428.5L647.5 418.5M400.5 428.5L410.5 438.5M637.5 438.5L647.5 428.5M400.5 438.5L410.5 448.5M637.5 448.5L647.5 438.5M400.5 448.5L410.5 458.5M637.5 458.5L647.5 448.5M400.5 458.5L410.5 468.5M637.5 468.5L647.5 458.5M400.5 468.5L410.5 477.5M637.5 477.5L647.5 468.5M400.5 477.5L410.5 487.5M637.5 487.5L647.5 477.5M657.5 73.5L666.5 83.5M657.5 83.5L666.5 93.5M657.5 93.5L666.5 103.5M657.5 103.5L666.5 113.5M874.5 83.5L883.5 73.5M874.5 122.5L883.5 113.5M657.5 122.5L666.5 132.5M874.5 132.5L883.5 122.5M657.5 132.5L666.5 142.5M874.5 142.5L883.5 132.5M657.5 142.5L666.5 152.5M874.5 152.5L883.5 142.5M657.5 152.5L666.5 162.5M874.5 162.5L883.5 152.5M657.5 162.5L666.5 172.5M874.5 172.5L883.5 162.5M657.5 172.5L666.5 182.5M874.5 182.5L883.5 172.5M657.5 182.5L666.5 191.5M874.5 191.5L883.5 182.5M657.5 191.5L666.5 201.5M874.5 201.5L883.5 191.5M657.5 201.5L666.5 211.5M874.5 211.5L883.5 201.5M657.5 211.5L666.5 221.5M874.5 221.5L883.5 211.5M657.5 221.5L666.5 231.5M874.5 231.5L883.5 221.5M657.5 231.5L666.5 241.5M874.5 241.5L883.5 231.5M657.5 241.5L666.5 251.5M874.5 251.5L883.5 241.5M657.5 251.5L666.5 260.5M874.5 260.5L883.5 251.5M657.5 260.5L666.5 270.5M874.5 270.5L883.5 260.5M874.5 339.5L883.5 329.5M657.5 339.5L666.5 349.5M874.5 349.5L883.5 339.5M657.5 349.5L666.5 359.5M874.5 359.5L883.5 349.5M657.5 359.5L666.5 369.5M874.5 369.5L883.5 359.5M657.5 369.5L666.5 379.5M874.5 379.5L883.5 369.5M657.5 379.5L666.5 389.5M874.5 389.5L883.5 379.5M657.5 389.5L666.5 398.5M874.5 398.5L883.5 389.5M657.5 398.5L666.5 408.5M874.5 408.5L883.5 398.5M657.5 408.5L666.5 418.5M874.5 418.5L883.5 408.5M657.5 418.5L666.5 428.5M874.5 428.5L883.5 418.5M657.5 428.5L666.5 438.5M874.5 438.5L883.5 428.5M657.5 438.5L666.5 448.5M874.5 448.5L883.5 438.5M657.5 448.5L666.5 458.5M874.5 458.5L883.5 448.5M657.5 458.5L666.5 468.5M874.5 468.5L883.5 458.5M657.5 468.5L666.5 477.5M874.5 477.5L883.5 468.5M657.5 477.5L666.5 487.5M874.5 487.5L883.5 477.5M893.5 63.5L903.5 73.5M893.5 73.5L903.5 83.5M893.5 83.5L903.5 93.5M893.5 93.5L903.5 103.5M893.5 103.5L903.5 113.5M893.5 113.5L903.5 122.5M893.5 122.5L903.5 132.5M893.5 132.5L903.5 142.5M893.5 142.5L903.5 152.5M893.5 152.5L903.5 162.5M893.5 216.5L903.5 226.5M893.5 226.5L903.5 236.5M893.5 236.5L903.5 246.5M893.5 246.5L903.5 256.5M893.5 256.5L903.5 265.5M893.5 265.5L903.5 275.5M893.5 275.5L903.5 285.5M893.5 285.5L903.5 295.5M893.5 295.5L903.5 305.5M893.5 305.5L903.5 315.5M893.5 398.5L903.5 408.5M893.5 418.5L903.5 428.5M893.5 428.5L903.5 438.5M893.5 438.5L903.5 448.5M893.5 448.5L903.5 458.5M893.5 458.5L903.5 468.5M893.5 468.5L903.5 477.5M893.5 477.5L903.5 487.5M893.5 502.5L903.5 512.5M893.5 512.5L903.5 522.5M893.5 522.5L903.5 532.5" stroke="#009600" stroke-width="1" fill="none" stroke-linecap="round" stroke-linejoin="round"/>
<path d="M134.5 53.5V477.5M134.5 53.5H144.5M144.5 53.5V532.5M144.5 532.5H390.5M390.5 48.5V532.5M390.5 48.5H400.5M400.5 48.5V532.5M400.5 532.5H647.5M647.5 48.5V532.5M647.5 48.5H657.5M657.5 48.5V532.5M657.5 532.5H883.5M883.5 48.5V532.5M883.5 48.5H893.5M893.5 48.5V532.5" stroke="#000084" stroke-width="1.3" fill="none" stroke-linecap="square" stroke-linejoin="round"/>
<path d="M972.5 186.5L967.5 191.5M967.5 191.5L962.5 186.5M75.5 591.5L70.5 596.5M70.5 596.5L65.5 591.5M395.5 670.5L390.5 675.5M390.5 675.5L385.5 670.5" stroke="#840000" stroke-width="1" fill="none" stroke-linecap="round" stroke-linejoin="round"/>
<path d="M38.36 549.43L43.16 554.23M38.36 554.23L43.16 549.43" stroke="#0000C8" stroke-width="1.2" fill="none" stroke-linecap="round" stroke-linejoin="round"/>
<path d="M37.8 627.76L53.58 627.76M37.8 633.68L53.58 633.68M72.31 627.76L88.09 627.76M72.31 633.68L88.09 633.68M111.76 627.76L127.53 627.76M111.76 633.68L127.53 633.68M151.2 627.76L166.98 627.76M151.2 633.68L166.98 633.68M190.65 627.76L206.42 627.76M190.65 633.68L206.42 633.68M225.16 627.76L240.94 627.76M225.16 633.68L240.94 633.68M264.6 627.76L280.38 627.76M264.6 633.68L280.38 633.68M304.05 627.76L319.83 627.76M304.05 633.68L319.83 633.68M348.42 627.76L364.2 627.76M348.42 633.68L364.2 633.68M382.94 627.76L398.71 627.76M382.94 633.68L398.71 633.68M422.38 627.76L438.16 627.76M422.38 633.68L438.16 633.68M461.82 627.76L477.6 627.76M461.82 633.68L477.6 633.68M37.8 682L53.58 682M37.8 687.91L53.58 687.91M72.31 682L88.09 682M72.31 687.91L88.09 687.91M111.76 682L127.53 682M111.76 687.91L127.53 687.91M151.2 682L166.98 682M151.2 687.91L166.98 687.91M190.65 682L206.42 682M190.65 687.91L206.42 687.91M225.16 682L240.94 682M225.16 687.91L240.94 687.91M264.6 682L280.38 682M264.6 687.91L280.38 687.91M304.05 682L319.83 682M304.05 687.91L319.83 687.91" stroke="#840000" stroke-width="2.2" fill="none" stroke-linecap="round" stroke-linejoin="round"/>
<circle cx="696.5" cy="39.5" r="2.2" fill="#009600"/>
<circle cx="726.5" cy="39.5" r="2.2" fill="#009600"/>
<circle cx="755.5" cy="39.5" r="2.2" fill="#009600"/>
<circle cx="785.5" cy="39.5" r="2.2" fill="#009600"/>
<circle cx="957.5" cy="103.5" r="2.2" fill="#009600"/>
<circle cx="967.5" cy="83.5" r="2.2" fill="#009600"/>
<circle cx="967.5" cy="162.5" r="2.2" fill="#009600"/>
<circle cx="80.5" cy="606.5" r="2.2" fill="#009600"/>
<circle cx="119.5" cy="606.5" r="2.2" fill="#009600"/>
<circle cx="159.5" cy="606.5" r="2.2" fill="#009600"/>
<circle cx="198.5" cy="606.5" r="2.2" fill="#009600"/>
<circle cx="233.5" cy="606.5" r="2.2" fill="#009600"/>
<circle cx="272.5" cy="606.5" r="2.2" fill="#009600"/>
<circle cx="311.5" cy="606.5" r="2.2" fill="#009600"/>
<circle cx="356.5" cy="606.5" r="2.2" fill="#009600"/>
<circle cx="390.5" cy="606.5" r="2.2" fill="#009600"/>
<circle cx="430.5" cy="606.5" r="2.2" fill="#009600"/>
<circle cx="469.5" cy="606.5" r="2.2" fill="#009600"/>
<circle cx="45.5" cy="655.5" r="2.2" fill="#009600"/>
<circle cx="80.5" cy="655.5" r="2.2" fill="#009600"/>
<circle cx="119.5" cy="655.5" r="2.2" fill="#009600"/>
<circle cx="159.5" cy="655.5" r="2.2" fill="#009600"/>
<circle cx="198.5" cy="655.5" r="2.2" fill="#009600"/>
<circle cx="233.5" cy="655.5" r="2.2" fill="#009600"/>
<circle cx="272.5" cy="655.5" r="2.2" fill="#009600"/>
<circle cx="311.5" cy="655.5" r="2.2" fill="#009600"/>
<circle cx="356.5" cy="655.5" r="2.2" fill="#009600"/>
<circle cx="390.5" cy="655.5" r="2.2" fill="#009600"/>
<circle cx="430.5" cy="655.5" r="2.2" fill="#009600"/>
<circle cx="80.5" cy="714.5" r="2.2" fill="#009600"/>
<circle cx="119.5" cy="714.5" r="2.2" fill="#009600"/>
<circle cx="159.5" cy="714.5" r="2.2" fill="#009600"/>
<circle cx="198.5" cy="714.5" r="2.2" fill="#009600"/>
<circle cx="233.5" cy="714.5" r="2.2" fill="#009600"/>
<circle cx="272.5" cy="714.5" r="2.2" fill="#009600"/>
<circle cx="311.5" cy="714.5" r="2.2" fill="#009600"/>
<g stroke-width="0.3" paint-order="stroke">
<text x="105.2" y="10.31" fill="#840000" stroke="#840000" font-size="6.8" text-anchor="middle">1</text>
<text x="105.2" y="740.18" fill="#840000" stroke="#840000" font-size="6.8" text-anchor="middle">1</text>
<text x="299.32" y="10.31" fill="#840000" stroke="#840000" font-size="6.8" text-anchor="middle">2</text>
<text x="299.32" y="740.18" fill="#840000" stroke="#840000" font-size="6.8" text-anchor="middle">2</text>
<text x="493.43" y="10.31" fill="#840000" stroke="#840000" font-size="6.8" text-anchor="middle">3</text>
<text x="493.43" y="740.18" fill="#840000" stroke="#840000" font-size="6.8" text-anchor="middle">3</text>
<text x="687.55" y="10.31" fill="#840000" stroke="#840000" font-size="6.8" text-anchor="middle">4</text>
<text x="687.55" y="740.18" fill="#840000" stroke="#840000" font-size="6.8" text-anchor="middle">4</text>
<text x="881.66" y="10.31" fill="#840000" stroke="#840000" font-size="6.8" text-anchor="middle">5</text>
<text x="881.66" y="740.18" fill="#840000" stroke="#840000" font-size="6.8" text-anchor="middle">5</text>
<text x="1075.78" y="10.31" fill="#840000" stroke="#840000" font-size="6.8" text-anchor="middle">6</text>
<text x="1075.78" y="740.18" fill="#840000" stroke="#840000" font-size="6.8" text-anchor="middle">6</text>
<text x="9.51" y="103.48" fill="#840000" stroke="#840000" font-size="6.8" text-anchor="middle">A</text>
<text x="1077.14" y="103.48" fill="#840000" stroke="#840000" font-size="6.8" text-anchor="middle">A</text>
<text x="9.51" y="297.6" fill="#840000" stroke="#840000" font-size="6.8" text-anchor="middle">B</text>
<text x="1077.14" y="297.6" fill="#840000" stroke="#840000" font-size="6.8" text-anchor="middle">B</text>
<text x="9.51" y="491.71" fill="#840000" stroke="#840000" font-size="6.8" text-anchor="middle">C</text>
<text x="1077.14" y="491.71" fill="#840000" stroke="#840000" font-size="6.8" text-anchor="middle">C</text>
<text x="9.51" y="685.83" fill="#840000" stroke="#840000" font-size="6.8" text-anchor="middle">D</text>
<text x="1077.14" y="685.83" fill="#840000" stroke="#840000" font-size="6.8" text-anchor="middle">D</text>
<text x="657.85" y="678.56" fill="#840000" stroke="#840000" font-size="8.6" textLength="33.5" lengthAdjust="spacingAndGlyphs">Sheet: /</text>
<text x="657.85" y="689.04" fill="#840000" stroke="#840000" font-size="8.6" textLength="95" lengthAdjust="spacingAndGlyphs">File: PLCC2.kicad_sch</text>
<text x="659.85" y="704.62" fill="#840000" stroke="#840000" font-size="12" textLength="26.5" lengthAdjust="spacingAndGlyphs" font-weight="bold" font-style="italic" stroke-width="0.9">Title:</text>
<text x="657.85" y="717.77" fill="#840000" stroke="#840000" font-size="8.6" textLength="36" lengthAdjust="spacingAndGlyphs">Size: A4</text>
<text x="743.26" y="717.77" fill="#840000" stroke="#840000" font-size="8.6" textLength="26" lengthAdjust="spacingAndGlyphs">Date:</text>
<text x="987.84" y="717.77" fill="#840000" stroke="#840000" font-size="8.6" textLength="19" lengthAdjust="spacingAndGlyphs">Rev:</text>
<text x="657.85" y="728.64" fill="#840000" stroke="#840000" font-size="8.6" textLength="80" lengthAdjust="spacingAndGlyphs">KiCad E.D.A. 8.0.4</text>
<text x="987.84" y="728.64" fill="#840000" stroke="#840000" font-size="8.6" textLength="31" lengthAdjust="spacingAndGlyphs">Id: 1/1</text>
<text x="53.08" y="101.85" fill="#A90000" stroke="#A90000" font-size="8.4" text-anchor="middle" textLength="3.7" lengthAdjust="spacingAndGlyphs" stroke-width="0.45">1</text>
<text x="53.08" y="111.72" fill="#A90000" stroke="#A90000" font-size="8.4" text-anchor="middle" textLength="3.7" lengthAdjust="spacingAndGlyphs" stroke-width="0.45">2</text>
<text x="53.08" y="121.58" fill="#A90000" stroke="#A90000" font-size="8.4" text-anchor="middle" textLength="3.7" lengthAdjust="spacingAndGlyphs" stroke-width="0.45">3</text>
<text x="53.08" y="131.44" fill="#A90000" stroke="#A90000" font-size="8.4" text-anchor="middle" textLength="3.7" lengthAdjust="spacingAndGlyphs" stroke-width="0.45">4</text>
<text x="100.5" y="131.54" fill="#000000" stroke="#000000" font-size="9" textLength="12.9" lengthAdjust="spacingAndGlyphs">A10</text>
<text x="53.08" y="141.3" fill="#A90000" stroke="#A90000" font-size="8.4" text-anchor="middle" textLength="3.7" lengthAdjust="spacingAndGlyphs" stroke-width="0.45">5</text>
<text x="100.5" y="141.4" fill="#000000" stroke="#000000" font-size="9" textLength="12.9" lengthAdjust="spacingAndGlyphs">A12</text>
<text x="53.08" y="151.16" fill="#A90000" stroke="#A90000" font-size="8.4" text-anchor="middle" textLength="3.7" lengthAdjust="spacingAndGlyphs" stroke-width="0.45">6</text>
<text x="100.5" y="151.26" fill="#000000" stroke="#000000" font-size="9" textLength="12.9" lengthAdjust="spacingAndGlyphs">A13</text>
<text x="53.08" y="161.02" fill="#A90000" stroke="#A90000" font-size="8.4" text-anchor="middle" textLength="3.7" lengthAdjust="spacingAndGlyphs" stroke-width="0.45">7</text>
<text x="100.5" y="161.12" fill="#000000" stroke="#000000" font-size="9" textLength="12.9" lengthAdjust="spacingAndGlyphs">A15</text>
<text x="53.08" y="170.88" fill="#A90000" stroke="#A90000" font-size="8.4" text-anchor="middle" textLength="3.7" lengthAdjust="spacingAndGlyphs" stroke-width="0.45">8</text>
<text x="100.5" y="170.98" fill="#000000" stroke="#000000" font-size="9" textLength="14.1" lengthAdjust="spacingAndGlyphs">GND</text>
<text x="53.08" y="180.74" fill="#A90000" stroke="#A90000" font-size="8.4" text-anchor="middle" textLength="3.7" lengthAdjust="spacingAndGlyphs" stroke-width="0.45">9</text>
<text x="100.5" y="180.84" fill="#000000" stroke="#000000" font-size="9" textLength="12.9" lengthAdjust="spacingAndGlyphs">A11</text>
<text x="53.08" y="190.6" fill="#A90000" stroke="#A90000" font-size="8.4" text-anchor="middle" textLength="8.3" lengthAdjust="spacingAndGlyphs" stroke-width="0.45">10</text>
<text x="100.5" y="190.7" fill="#000000" stroke="#000000" font-size="9" textLength="12.9" lengthAdjust="spacingAndGlyphs">A14</text>
<text x="53.08" y="200.47" fill="#A90000" stroke="#A90000" font-size="8.4" text-anchor="middle" textLength="8.3" lengthAdjust="spacingAndGlyphs" stroke-width="0.45">11</text>
<text x="100.5" y="200.57" fill="#000000" stroke="#000000" font-size="9" textLength="8.3" lengthAdjust="spacingAndGlyphs">A8</text>
<text x="53.08" y="210.33" fill="#A90000" stroke="#A90000" font-size="8.4" text-anchor="middle" textLength="8.3" lengthAdjust="spacingAndGlyphs" stroke-width="0.45">12</text>
<text x="53.08" y="220.19" fill="#A90000" stroke="#A90000" font-size="8.4" text-anchor="middle" textLength="8.3" lengthAdjust="spacingAndGlyphs" stroke-width="0.45">13</text>
<text x="100.5" y="220.29" fill="#000000" stroke="#000000" font-size="9" textLength="8.7" lengthAdjust="spacingAndGlyphs">WR</text>
<text x="53.08" y="230.05" fill="#A90000" stroke="#A90000" font-size="8.4" text-anchor="middle" textLength="8.3" lengthAdjust="spacingAndGlyphs" stroke-width="0.45">14</text>
<text x="53.08" y="239.91" fill="#A90000" stroke="#A90000" font-size="8.4" text-anchor="middle" textLength="8.3" lengthAdjust="spacingAndGlyphs" stroke-width="0.45">15</text>
<text x="100.5" y="240.01" fill="#000000" stroke="#000000" font-size="9" textLength="8.7" lengthAdjust="spacingAndGlyphs">RD</text>
<text x="53.08" y="249.77" fill="#A90000" stroke="#A90000" font-size="8.4" text-anchor="middle" textLength="8.3" lengthAdjust="spacingAndGlyphs" stroke-width="0.45">16</text>
<text x="53.08" y="259.63" fill="#A90000" stroke="#A90000" font-size="8.4" text-anchor="middle" textLength="8.3" lengthAdjust="spacingAndGlyphs" stroke-width="0.45">17</text>
<text x="100.5" y="259.73" fill="#000000" stroke="#000000" font-size="9" textLength="8.3" lengthAdjust="spacingAndGlyphs">A9</text>
<text x="53.08" y="269.49" fill="#A90000" stroke="#A90000" font-size="8.4" text-anchor="middle" textLength="8.3" lengthAdjust="spacingAndGlyphs" stroke-width="0.45">18</text>
<text x="100.5" y="269.59" fill="#000000" stroke="#000000" font-size="9" textLength="8.7" lengthAdjust="spacingAndGlyphs">D4</text>
<text x="53.08" y="279.35" fill="#A90000" stroke="#A90000" font-size="8.4" text-anchor="middle" textLength="8.3" lengthAdjust="spacingAndGlyphs" stroke-width="0.45">19</text>
<text x="53.08" y="289.21" fill="#A90000" stroke="#A90000" font-size="8.4" text-anchor="middle" textLength="8.3" lengthAdjust="spacingAndGlyphs" stroke-width="0.45">20</text>
<text x="100.5" y="289.31" fill="#000000" stroke="#000000" font-size="9" textLength="8.7" lengthAdjust="spacingAndGlyphs">D7</text>
<text x="53.08" y="299.08" fill="#A90000" stroke="#A90000" font-size="8.4" text-anchor="middle" textLength="8.3" lengthAdjust="spacingAndGlyphs" stroke-width="0.45">21</text>
<text x="53.08" y="308.94" fill="#A90000" stroke="#A90000" font-size="8.4" text-anchor="middle" textLength="8.3" lengthAdjust="spacingAndGlyphs" stroke-width="0.45">22</text>
<text x="100.5" y="309.04" fill="#000000" stroke="#000000" font-size="9" textLength="8.7" lengthAdjust="spacingAndGlyphs">D1</text>
<text x="53.08" y="318.8" fill="#A90000" stroke="#A90000" font-size="8.4" text-anchor="middle" textLength="8.3" lengthAdjust="spacingAndGlyphs" stroke-width="0.45">23</text>
<text x="53.08" y="328.66" fill="#A90000" stroke="#A90000" font-size="8.4" text-anchor="middle" textLength="8.3" lengthAdjust="spacingAndGlyphs" stroke-width="0.45">24</text>
<text x="100.5" y="328.76" fill="#000000" stroke="#000000" font-size="9" textLength="8.7" lengthAdjust="spacingAndGlyphs">D6</text>
<text x="53.08" y="338.52" fill="#A90000" stroke="#A90000" font-size="8.4" text-anchor="middle" textLength="8.3" lengthAdjust="spacingAndGlyphs" stroke-width="0.45">25</text>
<text x="100.5" y="338.62" fill="#000000" stroke="#000000" font-size="9" textLength="8.3" lengthAdjust="spacingAndGlyphs">A0</text>
<text x="53.08" y="348.38" fill="#A90000" stroke="#A90000" font-size="8.4" text-anchor="middle" textLength="8.3" lengthAdjust="spacingAndGlyphs" stroke-width="0.45">26</text>
<text x="100.5" y="348.48" fill="#000000" stroke="#000000" font-size="9" textLength="8.7" lengthAdjust="spacingAndGlyphs">D3</text>
<text x="53.08" y="358.24" fill="#A90000" stroke="#A90000" font-size="8.4" text-anchor="middle" textLength="8.3" lengthAdjust="spacingAndGlyphs" stroke-width="0.45">27</text>
<text x="100.5" y="358.34" fill="#000000" stroke="#000000" font-size="9" textLength="8.3" lengthAdjust="spacingAndGlyphs">A1</text>
<text x="53.08" y="368.1" fill="#A90000" stroke="#A90000" font-size="8.4" text-anchor="middle" textLength="8.3" lengthAdjust="spacingAndGlyphs" stroke-width="0.45">28</text>
<text x="100.5" y="368.2" fill="#000000" stroke="#000000" font-size="9" textLength="8.7" lengthAdjust="spacingAndGlyphs">D5</text>
<text x="53.08" y="377.96" fill="#A90000" stroke="#A90000" font-size="8.4" text-anchor="middle" textLength="8.3" lengthAdjust="spacingAndGlyphs" stroke-width="0.45">29</text>
<text x="100.5" y="378.06" fill="#000000" stroke="#000000" font-size="9" textLength="14.1" lengthAdjust="spacingAndGlyphs">GND</text>
<text x="53.08" y="387.82" fill="#A90000" stroke="#A90000" font-size="8.4" text-anchor="middle" textLength="8.3" lengthAdjust="spacingAndGlyphs" stroke-width="0.45">30</text>
<text x="100.5" y="387.92" fill="#000000" stroke="#000000" font-size="9" textLength="8.7" lengthAdjust="spacingAndGlyphs">D0</text>
<text x="53.08" y="397.69" fill="#A90000" stroke="#A90000" font-size="8.4" text-anchor="middle" textLength="8.3" lengthAdjust="spacingAndGlyphs" stroke-width="0.45">31</text>
<text x="100.5" y="397.79" fill="#000000" stroke="#000000" font-size="9" textLength="8.3" lengthAdjust="spacingAndGlyphs">A4</text>
<text x="53.08" y="407.55" fill="#A90000" stroke="#A90000" font-size="8.4" text-anchor="middle" textLength="8.3" lengthAdjust="spacingAndGlyphs" stroke-width="0.45">32</text>
<text x="100.5" y="407.65" fill="#000000" stroke="#000000" font-size="9" textLength="8.7" lengthAdjust="spacingAndGlyphs">D2</text>
<text x="53.08" y="417.41" fill="#A90000" stroke="#A90000" font-size="8.4" text-anchor="middle" textLength="8.3" lengthAdjust="spacingAndGlyphs" stroke-width="0.45">33</text>
<text x="100.5" y="417.51" fill="#000000" stroke="#000000" font-size="9" textLength="15.6" lengthAdjust="spacingAndGlyphs">WAIT</text>
<text x="53.08" y="427.27" fill="#A90000" stroke="#A90000" font-size="8.4" text-anchor="middle" textLength="8.3" lengthAdjust="spacingAndGlyphs" stroke-width="0.45">34</text>
<text x="100.5" y="427.37" fill="#000000" stroke="#000000" font-size="9" textLength="8.3" lengthAdjust="spacingAndGlyphs">A3</text>
<text x="53.08" y="437.13" fill="#A90000" stroke="#A90000" font-size="8.4" text-anchor="middle" textLength="8.3" lengthAdjust="spacingAndGlyphs" stroke-width="0.45">35</text>
<text x="100.5" y="437.23" fill="#000000" stroke="#000000" font-size="9" textLength="8.3" lengthAdjust="spacingAndGlyphs">A5</text>
<text x="53.08" y="446.99" fill="#A90000" stroke="#A90000" font-size="8.4" text-anchor="middle" textLength="8.3" lengthAdjust="spacingAndGlyphs" stroke-width="0.45">36</text>
<text x="100.5" y="447.09" fill="#000000" stroke="#000000" font-size="9" textLength="8.3" lengthAdjust="spacingAndGlyphs">A7</text>
<text x="53.08" y="456.85" fill="#A90000" stroke="#A90000" font-size="8.4" text-anchor="middle" textLength="8.3" lengthAdjust="spacingAndGlyphs" stroke-width="0.45">37</text>
<text x="100.5" y="456.95" fill="#000000" stroke="#000000" font-size="9" textLength="14.1" lengthAdjust="spacingAndGlyphs">GND</text>
<text x="53.08" y="466.71" fill="#A90000" stroke="#A90000" font-size="8.4" text-anchor="middle" textLength="8.3" lengthAdjust="spacingAndGlyphs" stroke-width="0.45">38</text>
<text x="100.5" y="466.81" fill="#000000" stroke="#000000" font-size="9" textLength="8.3" lengthAdjust="spacingAndGlyphs">A6</text>
<text x="53.08" y="476.57" fill="#A90000" stroke="#A90000" font-size="8.4" text-anchor="middle" textLength="8.3" lengthAdjust="spacingAndGlyphs" stroke-width="0.45">39</text>
<text x="100.5" y="476.67" fill="#000000" stroke="#000000" font-size="9" textLength="12.9" lengthAdjust="spacingAndGlyphs">VCC</text>
<text x="53.08" y="486.44" fill="#A90000" stroke="#A90000" font-size="8.4" text-anchor="middle" textLength="8.3" lengthAdjust="spacingAndGlyphs" stroke-width="0.45">40</text>
<text x="100.5" y="486.54" fill="#000000" stroke="#000000" font-size="9" textLength="8.3" lengthAdjust="spacingAndGlyphs">A2</text>
<text x="38.8" y="86.5" fill="#006464" stroke="#006464" font-size="9" textLength="8.3" lengthAdjust="spacingAndGlyphs">J2</text>
<text x="38.8" y="96.3" fill="#006464" stroke="#006464" font-size="9" textLength="72.8" lengthAdjust="spacingAndGlyphs">Conn_01x40_Socket</text>
<text x="267.56" y="64.08" fill="#006464" stroke="#006464" font-size="9" text-anchor="middle" textLength="8.3" lengthAdjust="spacingAndGlyphs">U1</text>
<text x="223.19" y="72.27" fill="#A90000" stroke="#A90000" font-size="8.4" text-anchor="middle" textLength="8.3" lengthAdjust="spacingAndGlyphs" stroke-width="0.45">75</text>
<text x="230.52" y="76.17" fill="#006464" stroke="#006464" font-size="9" textLength="11" lengthAdjust="spacingAndGlyphs">I/O</text>
<text x="311.94" y="72.27" fill="#A90000" stroke="#A90000" font-size="8.4" text-anchor="middle" textLength="8.3" lengthAdjust="spacingAndGlyphs" stroke-width="0.45">74</text>
<text x="303.71" y="76.17" fill="#006464" stroke="#006464" font-size="9" text-anchor="end" textLength="11" lengthAdjust="spacingAndGlyphs">I/O</text>
<text x="159.9" y="72.37" fill="#000000" stroke="#000000" font-size="9" textLength="24.4" lengthAdjust="spacingAndGlyphs">LIBRE4</text>
<text x="356.8" y="72.37" fill="#000000" stroke="#000000" font-size="9" textLength="24.8" lengthAdjust="spacingAndGlyphs">RAZVID</text>
<text x="223.19" y="82.13" fill="#A90000" stroke="#A90000" font-size="8.4" text-anchor="middle" textLength="8.3" lengthAdjust="spacingAndGlyphs" stroke-width="0.45">76</text>
<text x="230.52" y="86.03" fill="#006464" stroke="#006464" font-size="9" textLength="11" lengthAdjust="spacingAndGlyphs">I/O</text>
<text x="311.94" y="82.13" fill="#A90000" stroke="#A90000" font-size="8.4" text-anchor="middle" textLength="8.3" lengthAdjust="spacingAndGlyphs" stroke-width="0.45">73</text>
<text x="303.71" y="86.03" fill="#006464" stroke="#006464" font-size="9" text-anchor="end" textLength="11" lengthAdjust="spacingAndGlyphs">I/O</text>
<text x="356.8" y="82.23" fill="#000000" stroke="#000000" font-size="9" textLength="24.4" lengthAdjust="spacingAndGlyphs">LIBRE3</text>
<text x="223.19" y="91.99" fill="#A90000" stroke="#A90000" font-size="8.4" text-anchor="middle" textLength="8.3" lengthAdjust="spacingAndGlyphs" stroke-width="0.45">77</text>
<text x="230.52" y="95.89" fill="#006464" stroke="#006464" font-size="9" textLength="11" lengthAdjust="spacingAndGlyphs">I/O</text>
<text x="311.94" y="91.99" fill="#A90000" stroke="#A90000" font-size="8.4" text-anchor="middle" textLength="8.3" lengthAdjust="spacingAndGlyphs" stroke-width="0.45">72</text>
<text x="303.71" y="95.89" fill="#006464" stroke="#006464" font-size="9" text-anchor="end" textLength="14.1" lengthAdjust="spacingAndGlyphs">GND</text>
<text x="356.8" y="92.09" fill="#000000" stroke="#000000" font-size="9" textLength="14.1" lengthAdjust="spacingAndGlyphs">GND</text>
<text x="223.19" y="101.85" fill="#A90000" stroke="#A90000" font-size="8.4" text-anchor="middle" textLength="8.3" lengthAdjust="spacingAndGlyphs" stroke-width="0.45">78</text>
<text x="230.52" y="105.75" fill="#006464" stroke="#006464" font-size="9" textLength="20.2" lengthAdjust="spacingAndGlyphs">VCCIO</text>
<text x="311.94" y="101.85" fill="#A90000" stroke="#A90000" font-size="8.4" text-anchor="middle" textLength="8.3" lengthAdjust="spacingAndGlyphs" stroke-width="0.45">71</text>
<text x="303.71" y="105.75" fill="#006464" stroke="#006464" font-size="9" text-anchor="end" textLength="13.7" lengthAdjust="spacingAndGlyphs">TDO</text>
<text x="159.9" y="101.95" fill="#000000" stroke="#000000" font-size="9" textLength="12.9" lengthAdjust="spacingAndGlyphs">VCC</text>
<text x="356.8" y="101.95" fill="#000000" stroke="#000000" font-size="9" textLength="20.6" lengthAdjust="spacingAndGlyphs">TDI/O</text>
<text x="223.19" y="111.72" fill="#A90000" stroke="#A90000" font-size="8.4" text-anchor="middle" textLength="8.3" lengthAdjust="spacingAndGlyphs" stroke-width="0.45">79</text>
<text x="230.52" y="115.62" fill="#006464" stroke="#006464" font-size="9" textLength="11" lengthAdjust="spacingAndGlyphs">I/O</text>
<text x="311.94" y="111.72" fill="#A90000" stroke="#A90000" font-size="8.4" text-anchor="middle" textLength="8.3" lengthAdjust="spacingAndGlyphs" stroke-width="0.45">70</text>
<text x="303.71" y="115.62" fill="#006464" stroke="#006464" font-size="9" text-anchor="end" textLength="11" lengthAdjust="spacingAndGlyphs">I/O</text>
<text x="159.9" y="111.82" fill="#000000" stroke="#000000" font-size="9" textLength="22.5" lengthAdjust="spacingAndGlyphs">BLANK</text>
<text x="356.8" y="111.82" fill="#000000" stroke="#000000" font-size="9" textLength="22.9" lengthAdjust="spacingAndGlyphs">MSYNC</text>
<text x="223.19" y="121.58" fill="#A90000" stroke="#A90000" font-size="8.4" text-anchor="middle" textLength="8.3" lengthAdjust="spacingAndGlyphs" stroke-width="0.45">80</text>
<text x="230.52" y="125.48" fill="#006464" stroke="#006464" font-size="9" textLength="11" lengthAdjust="spacingAndGlyphs">I/O</text>
<text x="311.94" y="121.58" fill="#A90000" stroke="#A90000" font-size="8.4" text-anchor="middle" textLength="8.3" lengthAdjust="spacingAndGlyphs" stroke-width="0.45">69</text>
<text x="303.71" y="125.48" fill="#006464" stroke="#006464" font-size="9" text-anchor="end" textLength="11" lengthAdjust="spacingAndGlyphs">I/O</text>
<text x="356.8" y="121.68" fill="#000000" stroke="#000000" font-size="9" textLength="20.2" lengthAdjust="spacingAndGlyphs">ISYNC</text>
<text x="223.19" y="131.44" fill="#A90000" stroke="#A90000" font-size="8.4" text-anchor="middle" textLength="8.3" lengthAdjust="spacingAndGlyphs" stroke-width="0.45">81</text>
<text x="230.52" y="135.34" fill="#006464" stroke="#006464" font-size="9" textLength="38" lengthAdjust="spacingAndGlyphs">I/O,GCLK3</text>
<text x="311.94" y="131.44" fill="#A90000" stroke="#A90000" font-size="8.4" text-anchor="middle" textLength="8.3" lengthAdjust="spacingAndGlyphs" stroke-width="0.45">68</text>
<text x="303.71" y="135.34" fill="#006464" stroke="#006464" font-size="9" text-anchor="end" textLength="11" lengthAdjust="spacingAndGlyphs">I/O</text>
<text x="159.9" y="131.54" fill="#000000" stroke="#000000" font-size="9" textLength="17.9" lengthAdjust="spacingAndGlyphs">VDRV</text>
<text x="356.8" y="131.54" fill="#000000" stroke="#000000" font-size="9" textLength="13.3" lengthAdjust="spacingAndGlyphs">MAK</text>
<text x="223.19" y="141.3" fill="#A90000" stroke="#A90000" font-size="8.4" text-anchor="middle" textLength="8.3" lengthAdjust="spacingAndGlyphs" stroke-width="0.45">82</text>
<text x="230.52" y="145.2" fill="#006464" stroke="#006464" font-size="9" textLength="14.1" lengthAdjust="spacingAndGlyphs">GND</text>
<text x="311.94" y="141.3" fill="#A90000" stroke="#A90000" font-size="8.4" text-anchor="middle" textLength="8.3" lengthAdjust="spacingAndGlyphs" stroke-width="0.45">67</text>
<text x="303.71" y="145.2" fill="#006464" stroke="#006464" font-size="9" text-anchor="end" textLength="11" lengthAdjust="spacingAndGlyphs">I/O</text>
<text x="159.9" y="141.4" fill="#000000" stroke="#000000" font-size="9" textLength="14.1" lengthAdjust="spacingAndGlyphs">GND</text>
<text x="356.8" y="141.4" fill="#000000" stroke="#000000" font-size="9" textLength="24.4" lengthAdjust="spacingAndGlyphs">LIBRE0</text>
<text x="223.19" y="151.16" fill="#A90000" stroke="#A90000" font-size="8.4" text-anchor="middle" textLength="8.3" lengthAdjust="spacingAndGlyphs" stroke-width="0.45">83</text>
<text x="230.52" y="155.06" fill="#006464" stroke="#006464" font-size="9" textLength="22.5" lengthAdjust="spacingAndGlyphs">GCLK1</text>
<text x="311.94" y="151.16" fill="#A90000" stroke="#A90000" font-size="8.4" text-anchor="middle" textLength="8.3" lengthAdjust="spacingAndGlyphs" stroke-width="0.45">66</text>
<text x="303.71" y="155.06" fill="#006464" stroke="#006464" font-size="9" text-anchor="end" textLength="20.2" lengthAdjust="spacingAndGlyphs">VCCIO</text>
<text x="159.9" y="151.26" fill="#000000" stroke="#000000" font-size="9" textLength="12.9" lengthAdjust="spacingAndGlyphs">CLK</text>
<text x="356.8" y="151.26" fill="#000000" stroke="#000000" font-size="9" textLength="12.9" lengthAdjust="spacingAndGlyphs">VCC</text>
<text x="223.19" y="161.02" fill="#A90000" stroke="#A90000" font-size="8.4" text-anchor="middle" textLength="8.3" lengthAdjust="spacingAndGlyphs" stroke-width="0.45">84</text>
<text x="230.52" y="164.92" fill="#006464" stroke="#006464" font-size="9" textLength="13.3" lengthAdjust="spacingAndGlyphs">OE1</text>
<text x="311.94" y="161.02" fill="#A90000" stroke="#A90000" font-size="8.4" text-anchor="middle" textLength="8.3" lengthAdjust="spacingAndGlyphs" stroke-width="0.45">65</text>
<text x="303.71" y="164.92" fill="#006464" stroke="#006464" font-size="9" text-anchor="end" textLength="11" lengthAdjust="spacingAndGlyphs">I/O</text>
<text x="356.8" y="161.12" fill="#000000" stroke="#000000" font-size="9" textLength="13.3" lengthAdjust="spacingAndGlyphs">WAK</text>
<text x="223.19" y="170.88" fill="#A90000" stroke="#A90000" font-size="8.4" text-anchor="middle" textLength="3.7" lengthAdjust="spacingAndGlyphs" stroke-width="0.45">1</text>
<text x="230.52" y="174.78" fill="#006464" stroke="#006464" font-size="9" textLength="17.9" lengthAdjust="spacingAndGlyphs">GCLR</text>
<text x="311.94" y="170.88" fill="#A90000" stroke="#A90000" font-size="8.4" text-anchor="middle" textLength="8.3" lengthAdjust="spacingAndGlyphs" stroke-width="0.45">64</text>
<text x="303.71" y="174.78" fill="#006464" stroke="#006464" font-size="9" text-anchor="end" textLength="11" lengthAdjust="spacingAndGlyphs">I/O</text>
<text x="356.8" y="170.98" fill="#000000" stroke="#000000" font-size="9" textLength="22.5" lengthAdjust="spacingAndGlyphs">CSREG</text>
<text x="223.19" y="180.74" fill="#A90000" stroke="#A90000" font-size="8.4" text-anchor="middle" textLength="3.7" lengthAdjust="spacingAndGlyphs" stroke-width="0.45">2</text>
<text x="230.52" y="184.64" fill="#006464" stroke="#006464" font-size="9" textLength="43" lengthAdjust="spacingAndGlyphs">OE2-GCLK2</text>
<text x="311.94" y="180.74" fill="#A90000" stroke="#A90000" font-size="8.4" text-anchor="middle" textLength="8.3" lengthAdjust="spacingAndGlyphs" stroke-width="0.45">63</text>
<text x="303.71" y="184.64" fill="#006464" stroke="#006464" font-size="9" text-anchor="end" textLength="11" lengthAdjust="spacingAndGlyphs">I/O</text>
<text x="159.9" y="180.84" fill="#000000" stroke="#000000" font-size="9" textLength="19.8" lengthAdjust="spacingAndGlyphs">SHIFT</text>
<text x="356.8" y="180.84" fill="#000000" stroke="#000000" font-size="9" textLength="22.9" lengthAdjust="spacingAndGlyphs">GORPL</text>
<text x="223.19" y="190.6" fill="#A90000" stroke="#A90000" font-size="8.4" text-anchor="middle" textLength="3.7" lengthAdjust="spacingAndGlyphs" stroke-width="0.45">3</text>
<text x="230.52" y="194.5" fill="#006464" stroke="#006464" font-size="9" textLength="24.8" lengthAdjust="spacingAndGlyphs">VCCINT</text>
<text x="311.94" y="190.6" fill="#A90000" stroke="#A90000" font-size="8.4" text-anchor="middle" textLength="8.3" lengthAdjust="spacingAndGlyphs" stroke-width="0.45">62</text>
<text x="303.71" y="194.5" fill="#006464" stroke="#006464" font-size="9" text-anchor="end" textLength="12.9" lengthAdjust="spacingAndGlyphs">TCK</text>
<text x="159.9" y="190.7" fill="#000000" stroke="#000000" font-size="9" textLength="12.9" lengthAdjust="spacingAndGlyphs">VCC</text>
<text x="356.8" y="190.7" fill="#000000" stroke="#000000" font-size="9" textLength="12.9" lengthAdjust="spacingAndGlyphs">TCK</text>
<text x="223.19" y="200.47" fill="#A90000" stroke="#A90000" font-size="8.4" text-anchor="middle" textLength="3.7" lengthAdjust="spacingAndGlyphs" stroke-width="0.45">4</text>
<text x="230.52" y="204.37" fill="#006464" stroke="#006464" font-size="9" textLength="11" lengthAdjust="spacingAndGlyphs">I/O</text>
<text x="311.94" y="200.47" fill="#A90000" stroke="#A90000" font-size="8.4" text-anchor="middle" textLength="8.3" lengthAdjust="spacingAndGlyphs" stroke-width="0.45">61</text>
<text x="303.71" y="204.37" fill="#006464" stroke="#006464" font-size="9" text-anchor="end" textLength="11" lengthAdjust="spacingAndGlyphs">I/O</text>
<text x="159.9" y="200.57" fill="#000000" stroke="#000000" font-size="9" textLength="15.6" lengthAdjust="spacingAndGlyphs">WAIT</text>
<text x="356.8" y="200.57" fill="#000000" stroke="#000000" font-size="9" textLength="24.4" lengthAdjust="spacingAndGlyphs">LIBRE2</text>
<text x="223.19" y="210.33" fill="#A90000" stroke="#A90000" font-size="8.4" text-anchor="middle" textLength="3.7" lengthAdjust="spacingAndGlyphs" stroke-width="0.45">5</text>
<text x="230.52" y="214.23" fill="#006464" stroke="#006464" font-size="9" textLength="11" lengthAdjust="spacingAndGlyphs">I/O</text>
<text x="311.94" y="210.33" fill="#A90000" stroke="#A90000" font-size="8.4" text-anchor="middle" textLength="8.3" lengthAdjust="spacingAndGlyphs" stroke-width="0.45">60</text>
<text x="303.71" y="214.23" fill="#006464" stroke="#006464" font-size="9" text-anchor="end" textLength="11" lengthAdjust="spacingAndGlyphs">I/O</text>
<text x="159.9" y="210.43" fill="#000000" stroke="#000000" font-size="9" textLength="8.3" lengthAdjust="spacingAndGlyphs">A3</text>
<text x="356.8" y="210.43" fill="#000000" stroke="#000000" font-size="9" textLength="24.4" lengthAdjust="spacingAndGlyphs">LIBRE1</text>
<text x="223.19" y="220.19" fill="#A90000" stroke="#A90000" font-size="8.4" text-anchor="middle" textLength="3.7" lengthAdjust="spacingAndGlyphs" stroke-width="0.45">6</text>
<text x="230.52" y="224.09" fill="#006464" stroke="#006464" font-size="9" textLength="11" lengthAdjust="spacingAndGlyphs">I/O</text>
<text x="311.94" y="220.19" fill="#A90000" stroke="#A90000" font-size="8.4" text-anchor="middle" textLength="8.3" lengthAdjust="spacingAndGlyphs" stroke-width="0.45">59</text>
<text x="303.71" y="224.09" fill="#006464" stroke="#006464" font-size="9" text-anchor="end" textLength="14.1" lengthAdjust="spacingAndGlyphs">GND</text>
<text x="159.9" y="220.29" fill="#000000" stroke="#000000" font-size="9" textLength="8.3" lengthAdjust="spacingAndGlyphs">A5</text>
<text x="356.8" y="220.29" fill="#000000" stroke="#000000" font-size="9" textLength="14.1" lengthAdjust="spacingAndGlyphs">GND</text>
<text x="223.19" y="230.05" fill="#A90000" stroke="#A90000" font-size="8.4" text-anchor="middle" textLength="3.7" lengthAdjust="spacingAndGlyphs" stroke-width="0.45">7</text>
<text x="230.52" y="233.95" fill="#006464" stroke="#006464" font-size="9" textLength="14.1" lengthAdjust="spacingAndGlyphs">GND</text>
<text x="311.94" y="230.05" fill="#A90000" stroke="#A90000" font-size="8.4" text-anchor="middle" textLength="8.3" lengthAdjust="spacingAndGlyphs" stroke-width="0.45">58</text>
<text x="303.71" y="233.95" fill="#006464" stroke="#006464" font-size="9" text-anchor="end" textLength="11" lengthAdjust="spacingAndGlyphs">I/O</text>
<text x="159.9" y="230.15" fill="#000000" stroke="#000000" font-size="9" textLength="14.1" lengthAdjust="spacingAndGlyphs">GND</text>
<text x="356.8" y="230.15" fill="#000000" stroke="#000000" font-size="9" textLength="17.9" lengthAdjust="spacingAndGlyphs">CSM1</text>
<text x="223.19" y="239.91" fill="#A90000" stroke="#A90000" font-size="8.4" text-anchor="middle" textLength="3.7" lengthAdjust="spacingAndGlyphs" stroke-width="0.45">8</text>
<text x="230.52" y="243.81" fill="#006464" stroke="#006464" font-size="9" textLength="11" lengthAdjust="spacingAndGlyphs">I/O</text>
<text x="311.94" y="239.91" fill="#A90000" stroke="#A90000" font-size="8.4" text-anchor="middle" textLength="8.3" lengthAdjust="spacingAndGlyphs" stroke-width="0.45">57</text>
<text x="303.71" y="243.81" fill="#006464" stroke="#006464" font-size="9" text-anchor="end" textLength="11" lengthAdjust="spacingAndGlyphs">I/O</text>
<text x="159.9" y="240.01" fill="#000000" stroke="#000000" font-size="9" textLength="8.3" lengthAdjust="spacingAndGlyphs">A7</text>
<text x="356.8" y="240.01" fill="#000000" stroke="#000000" font-size="9" textLength="13.3" lengthAdjust="spacingAndGlyphs">MA2</text>
<text x="223.19" y="249.77" fill="#A90000" stroke="#A90000" font-size="8.4" text-anchor="middle" textLength="3.7" lengthAdjust="spacingAndGlyphs" stroke-width="0.45">9</text>
<text x="230.52" y="253.67" fill="#006464" stroke="#006464" font-size="9" textLength="11" lengthAdjust="spacingAndGlyphs">I/O</text>
<text x="311.94" y="249.77" fill="#A90000" stroke="#A90000" font-size="8.4" text-anchor="middle" textLength="8.3" lengthAdjust="spacingAndGlyphs" stroke-width="0.45">56</text>
<text x="303.71" y="253.67" fill="#006464" stroke="#006464" font-size="9" text-anchor="end" textLength="11" lengthAdjust="spacingAndGlyphs">I/O</text>
<text x="159.9" y="249.87" fill="#000000" stroke="#000000" font-size="9" textLength="8.3" lengthAdjust="spacingAndGlyphs">A6</text>
<text x="356.8" y="249.87" fill="#000000" stroke="#000000" font-size="9" textLength="17.9" lengthAdjust="spacingAndGlyphs">CSM0</text>
<text x="223.19" y="259.63" fill="#A90000" stroke="#A90000" font-size="8.4" text-anchor="middle" textLength="8.3" lengthAdjust="spacingAndGlyphs" stroke-width="0.45">10</text>
<text x="230.52" y="263.53" fill="#006464" stroke="#006464" font-size="9" textLength="11" lengthAdjust="spacingAndGlyphs">I/O</text>
<text x="311.94" y="259.63" fill="#A90000" stroke="#A90000" font-size="8.4" text-anchor="middle" textLength="8.3" lengthAdjust="spacingAndGlyphs" stroke-width="0.45">55</text>
<text x="303.71" y="263.53" fill="#006464" stroke="#006464" font-size="9" text-anchor="end" textLength="11" lengthAdjust="spacingAndGlyphs">I/O</text>
<text x="159.9" y="259.73" fill="#000000" stroke="#000000" font-size="9" textLength="8.3" lengthAdjust="spacingAndGlyphs">A2</text>
<text x="356.8" y="259.73" fill="#000000" stroke="#000000" font-size="9" textLength="13.3" lengthAdjust="spacingAndGlyphs">MA3</text>
<text x="223.19" y="269.49" fill="#A90000" stroke="#A90000" font-size="8.4" text-anchor="middle" textLength="8.3" lengthAdjust="spacingAndGlyphs" stroke-width="0.45">11</text>
<text x="230.52" y="273.39" fill="#006464" stroke="#006464" font-size="9" textLength="11" lengthAdjust="spacingAndGlyphs">I/O</text>
<text x="311.94" y="269.49" fill="#A90000" stroke="#A90000" font-size="8.4" text-anchor="middle" textLength="8.3" lengthAdjust="spacingAndGlyphs" stroke-width="0.45">54</text>
<text x="303.71" y="273.39" fill="#006464" stroke="#006464" font-size="9" text-anchor="end" textLength="11" lengthAdjust="spacingAndGlyphs">I/O</text>
<text x="159.9" y="269.59" fill="#000000" stroke="#000000" font-size="9" textLength="8.3" lengthAdjust="spacingAndGlyphs">A4</text>
<text x="356.8" y="269.59" fill="#000000" stroke="#000000" font-size="9" textLength="17.9" lengthAdjust="spacingAndGlyphs">MA10</text>
<text x="223.19" y="289.21" fill="#A90000" stroke="#A90000" font-size="8.4" text-anchor="middle" textLength="8.3" lengthAdjust="spacingAndGlyphs" stroke-width="0.45">12</text>
<text x="230.52" y="293.11" fill="#006464" stroke="#006464" font-size="9" textLength="31.5" lengthAdjust="spacingAndGlyphs">I/O-PD1</text>
<text x="311.94" y="289.21" fill="#A90000" stroke="#A90000" font-size="8.4" text-anchor="middle" textLength="8.3" lengthAdjust="spacingAndGlyphs" stroke-width="0.45">53</text>
<text x="303.71" y="293.11" fill="#006464" stroke="#006464" font-size="9" text-anchor="end" textLength="20.2" lengthAdjust="spacingAndGlyphs">VCCIO</text>
<text x="159.9" y="289.31" fill="#000000" stroke="#000000" font-size="9" textLength="8.3" lengthAdjust="spacingAndGlyphs">A1</text>
<text x="356.8" y="289.31" fill="#000000" stroke="#000000" font-size="9" textLength="12.9" lengthAdjust="spacingAndGlyphs">VCC</text>
<text x="223.19" y="299.08" fill="#A90000" stroke="#A90000" font-size="8.4" text-anchor="middle" textLength="8.3" lengthAdjust="spacingAndGlyphs" stroke-width="0.45">13</text>
<text x="230.52" y="302.98" fill="#006464" stroke="#006464" font-size="9" textLength="20.2" lengthAdjust="spacingAndGlyphs">VCCIO</text>
<text x="311.94" y="299.08" fill="#A90000" stroke="#A90000" font-size="8.4" text-anchor="middle" textLength="8.3" lengthAdjust="spacingAndGlyphs" stroke-width="0.45">52</text>
<text x="303.71" y="302.98" fill="#006464" stroke="#006464" font-size="9" text-anchor="end" textLength="11" lengthAdjust="spacingAndGlyphs">I/O</text>
<text x="159.9" y="299.18" fill="#000000" stroke="#000000" font-size="9" textLength="12.9" lengthAdjust="spacingAndGlyphs">VCC</text>
<text x="356.8" y="299.18" fill="#000000" stroke="#000000" font-size="9" textLength="13.7" lengthAdjust="spacingAndGlyphs">MOE</text>
<text x="223.19" y="308.94" fill="#A90000" stroke="#A90000" font-size="8.4" text-anchor="middle" textLength="8.3" lengthAdjust="spacingAndGlyphs" stroke-width="0.45">14</text>
<text x="230.52" y="312.84" fill="#006464" stroke="#006464" font-size="9" textLength="11" lengthAdjust="spacingAndGlyphs">TDI</text>
<text x="311.94" y="308.94" fill="#A90000" stroke="#A90000" font-size="8.4" text-anchor="middle" textLength="8.3" lengthAdjust="spacingAndGlyphs" stroke-width="0.45">51</text>
<text x="303.71" y="312.84" fill="#006464" stroke="#006464" font-size="9" text-anchor="end" textLength="11" lengthAdjust="spacingAndGlyphs">I/O</text>
<text x="159.9" y="309.04" fill="#000000" stroke="#000000" font-size="9" textLength="11" lengthAdjust="spacingAndGlyphs">TDI</text>
<text x="356.8" y="309.04" fill="#000000" stroke="#000000" font-size="9" textLength="13.3" lengthAdjust="spacingAndGlyphs">MA4</text>
<text x="223.19" y="318.8" fill="#A90000" stroke="#A90000" font-size="8.4" text-anchor="middle" textLength="8.3" lengthAdjust="spacingAndGlyphs" stroke-width="0.45">15</text>
<text x="230.52" y="322.7" fill="#006464" stroke="#006464" font-size="9" textLength="11" lengthAdjust="spacingAndGlyphs">I/O</text>
<text x="311.94" y="318.8" fill="#A90000" stroke="#A90000" font-size="8.4" text-anchor="middle" textLength="8.3" lengthAdjust="spacingAndGlyphs" stroke-width="0.45">50</text>
<text x="303.71" y="322.7" fill="#006464" stroke="#006464" font-size="9" text-anchor="end" textLength="11" lengthAdjust="spacingAndGlyphs">I/O</text>
<text x="159.9" y="318.9" fill="#000000" stroke="#000000" font-size="9" textLength="8.3" lengthAdjust="spacingAndGlyphs">A0</text>
<text x="356.8" y="318.9" fill="#000000" stroke="#000000" font-size="9" textLength="17.9" lengthAdjust="spacingAndGlyphs">MA11</text>
<text x="223.19" y="328.66" fill="#A90000" stroke="#A90000" font-size="8.4" text-anchor="middle" textLength="8.3" lengthAdjust="spacingAndGlyphs" stroke-width="0.45">16</text>
<text x="230.52" y="332.56" fill="#006464" stroke="#006464" font-size="9" textLength="11" lengthAdjust="spacingAndGlyphs">I/O</text>
<text x="311.94" y="328.66" fill="#A90000" stroke="#A90000" font-size="8.4" text-anchor="middle" textLength="8.3" lengthAdjust="spacingAndGlyphs" stroke-width="0.45">49</text>
<text x="303.71" y="332.56" fill="#006464" stroke="#006464" font-size="9" text-anchor="end" textLength="11" lengthAdjust="spacingAndGlyphs">I/O</text>
<text x="159.9" y="328.76" fill="#000000" stroke="#000000" font-size="9" textLength="8.3" lengthAdjust="spacingAndGlyphs">A9</text>
<text x="356.8" y="328.76" fill="#000000" stroke="#000000" font-size="9" textLength="13.3" lengthAdjust="spacingAndGlyphs">MA5</text>
<text x="223.19" y="338.52" fill="#A90000" stroke="#A90000" font-size="8.4" text-anchor="middle" textLength="8.3" lengthAdjust="spacingAndGlyphs" stroke-width="0.45">17</text>
<text x="230.52" y="342.42" fill="#006464" stroke="#006464" font-size="9" textLength="11" lengthAdjust="spacingAndGlyphs">I/O</text>
<text x="311.94" y="338.52" fill="#A90000" stroke="#A90000" font-size="8.4" text-anchor="middle" textLength="8.3" lengthAdjust="spacingAndGlyphs" stroke-width="0.45">48</text>
<text x="303.71" y="342.42" fill="#006464" stroke="#006464" font-size="9" text-anchor="end" textLength="11" lengthAdjust="spacingAndGlyphs">I/O</text>
<text x="159.9" y="338.62" fill="#000000" stroke="#000000" font-size="9" textLength="8.7" lengthAdjust="spacingAndGlyphs">RD</text>
<text x="356.8" y="338.62" fill="#000000" stroke="#000000" font-size="9" textLength="13.3" lengthAdjust="spacingAndGlyphs">MA9</text>
<text x="223.19" y="348.38" fill="#A90000" stroke="#A90000" font-size="8.4" text-anchor="middle" textLength="8.3" lengthAdjust="spacingAndGlyphs" stroke-width="0.45">18</text>
<text x="230.52" y="352.28" fill="#006464" stroke="#006464" font-size="9" textLength="11" lengthAdjust="spacingAndGlyphs">I/O</text>
<text x="311.94" y="348.38" fill="#A90000" stroke="#A90000" font-size="8.4" text-anchor="middle" textLength="8.3" lengthAdjust="spacingAndGlyphs" stroke-width="0.45">47</text>
<text x="303.71" y="352.28" fill="#006464" stroke="#006464" font-size="9" text-anchor="end" textLength="14.1" lengthAdjust="spacingAndGlyphs">GND</text>
<text x="159.9" y="348.48" fill="#000000" stroke="#000000" font-size="9" textLength="8.7" lengthAdjust="spacingAndGlyphs">WR</text>
<text x="356.8" y="348.48" fill="#000000" stroke="#000000" font-size="9" textLength="14.1" lengthAdjust="spacingAndGlyphs">GND</text>
<text x="223.19" y="358.24" fill="#A90000" stroke="#A90000" font-size="8.4" text-anchor="middle" textLength="8.3" lengthAdjust="spacingAndGlyphs" stroke-width="0.45">19</text>
<text x="230.52" y="362.14" fill="#006464" stroke="#006464" font-size="9" textLength="14.1" lengthAdjust="spacingAndGlyphs">GND</text>
<text x="311.94" y="358.24" fill="#A90000" stroke="#A90000" font-size="8.4" text-anchor="middle" textLength="8.3" lengthAdjust="spacingAndGlyphs" stroke-width="0.45">46</text>
<text x="303.71" y="362.14" fill="#006464" stroke="#006464" font-size="9" text-anchor="end" textLength="11" lengthAdjust="spacingAndGlyphs">I/O</text>
<text x="159.9" y="358.34" fill="#000000" stroke="#000000" font-size="9" textLength="14.1" lengthAdjust="spacingAndGlyphs">GND</text>
<text x="356.8" y="358.34" fill="#000000" stroke="#000000" font-size="9" textLength="13.3" lengthAdjust="spacingAndGlyphs">MA6</text>
<text x="223.19" y="368.1" fill="#A90000" stroke="#A90000" font-size="8.4" text-anchor="middle" textLength="8.3" lengthAdjust="spacingAndGlyphs" stroke-width="0.45">20</text>
<text x="230.52" y="372" fill="#006464" stroke="#006464" font-size="9" textLength="11" lengthAdjust="spacingAndGlyphs">I/O</text>
<text x="311.94" y="368.1" fill="#A90000" stroke="#A90000" font-size="8.4" text-anchor="middle" textLength="8.3" lengthAdjust="spacingAndGlyphs" stroke-width="0.45">45</text>
<text x="303.71" y="372" fill="#006464" stroke="#006464" font-size="9" text-anchor="end" textLength="28.8" lengthAdjust="spacingAndGlyphs">I/O,PD2</text>
<text x="159.9" y="368.2" fill="#000000" stroke="#000000" font-size="9" textLength="8.3" lengthAdjust="spacingAndGlyphs">A8</text>
<text x="356.8" y="368.2" fill="#000000" stroke="#000000" font-size="9" textLength="13.3" lengthAdjust="spacingAndGlyphs">MA8</text>
<text x="223.19" y="377.96" fill="#A90000" stroke="#A90000" font-size="8.4" text-anchor="middle" textLength="8.3" lengthAdjust="spacingAndGlyphs" stroke-width="0.45">21</text>
<text x="230.52" y="381.86" fill="#006464" stroke="#006464" font-size="9" textLength="11" lengthAdjust="spacingAndGlyphs">I/O</text>
<text x="311.94" y="377.96" fill="#A90000" stroke="#A90000" font-size="8.4" text-anchor="middle" textLength="8.3" lengthAdjust="spacingAndGlyphs" stroke-width="0.45">44</text>
<text x="303.71" y="381.86" fill="#006464" stroke="#006464" font-size="9" text-anchor="end" textLength="11" lengthAdjust="spacingAndGlyphs">I/O</text>
<text x="159.9" y="378.06" fill="#000000" stroke="#000000" font-size="9" textLength="12.9" lengthAdjust="spacingAndGlyphs">A14</text>
<text x="356.8" y="378.06" fill="#000000" stroke="#000000" font-size="9" textLength="13.3" lengthAdjust="spacingAndGlyphs">MA7</text>
<text x="223.19" y="387.82" fill="#A90000" stroke="#A90000" font-size="8.4" text-anchor="middle" textLength="8.3" lengthAdjust="spacingAndGlyphs" stroke-width="0.45">22</text>
<text x="230.52" y="391.72" fill="#006464" stroke="#006464" font-size="9" textLength="11" lengthAdjust="spacingAndGlyphs">I/O</text>
<text x="311.94" y="387.82" fill="#A90000" stroke="#A90000" font-size="8.4" text-anchor="middle" textLength="8.3" lengthAdjust="spacingAndGlyphs" stroke-width="0.45">43</text>
<text x="303.71" y="391.72" fill="#006464" stroke="#006464" font-size="9" text-anchor="end" textLength="24.8" lengthAdjust="spacingAndGlyphs">VCCINT</text>
<text x="159.9" y="387.92" fill="#000000" stroke="#000000" font-size="9" textLength="12.9" lengthAdjust="spacingAndGlyphs">A11</text>
<text x="356.8" y="387.92" fill="#000000" stroke="#000000" font-size="9" textLength="12.9" lengthAdjust="spacingAndGlyphs">VCC</text>
<text x="223.19" y="397.69" fill="#A90000" stroke="#A90000" font-size="8.4" text-anchor="middle" textLength="8.3" lengthAdjust="spacingAndGlyphs" stroke-width="0.45">23</text>
<text x="230.52" y="401.59" fill="#006464" stroke="#006464" font-size="9" textLength="13.3" lengthAdjust="spacingAndGlyphs">TMS</text>
<text x="311.94" y="397.69" fill="#A90000" stroke="#A90000" font-size="8.4" text-anchor="middle" textLength="8.3" lengthAdjust="spacingAndGlyphs" stroke-width="0.45">42</text>
<text x="303.71" y="401.59" fill="#006464" stroke="#006464" font-size="9" text-anchor="end" textLength="14.1" lengthAdjust="spacingAndGlyphs">GND</text>
<text x="159.9" y="397.79" fill="#000000" stroke="#000000" font-size="9" textLength="13.3" lengthAdjust="spacingAndGlyphs">TMS</text>
<text x="356.8" y="397.79" fill="#000000" stroke="#000000" font-size="9" textLength="14.1" lengthAdjust="spacingAndGlyphs">GND</text>
<text x="223.19" y="407.55" fill="#A90000" stroke="#A90000" font-size="8.4" text-anchor="middle" textLength="8.3" lengthAdjust="spacingAndGlyphs" stroke-width="0.45">24</text>
<text x="230.52" y="411.45" fill="#006464" stroke="#006464" font-size="9" textLength="11" lengthAdjust="spacingAndGlyphs">I/O</text>
<text x="311.94" y="407.55" fill="#A90000" stroke="#A90000" font-size="8.4" text-anchor="middle" textLength="8.3" lengthAdjust="spacingAndGlyphs" stroke-width="0.45">41</text>
<text x="303.71" y="411.45" fill="#006464" stroke="#006464" font-size="9" text-anchor="end" textLength="11" lengthAdjust="spacingAndGlyphs">I/O</text>
<text x="159.9" y="407.65" fill="#000000" stroke="#000000" font-size="9" textLength="12.9" lengthAdjust="spacingAndGlyphs">A15</text>
<text x="356.8" y="407.65" fill="#000000" stroke="#000000" font-size="9" textLength="17.9" lengthAdjust="spacingAndGlyphs">MA13</text>
<text x="223.19" y="417.41" fill="#A90000" stroke="#A90000" font-size="8.4" text-anchor="middle" textLength="8.3" lengthAdjust="spacingAndGlyphs" stroke-width="0.45">25</text>
<text x="230.52" y="421.31" fill="#006464" stroke="#006464" font-size="9" textLength="11" lengthAdjust="spacingAndGlyphs">I/O</text>
<text x="311.94" y="417.41" fill="#A90000" stroke="#A90000" font-size="8.4" text-anchor="middle" textLength="8.3" lengthAdjust="spacingAndGlyphs" stroke-width="0.45">40</text>
<text x="303.71" y="421.31" fill="#006464" stroke="#006464" font-size="9" text-anchor="end" textLength="11" lengthAdjust="spacingAndGlyphs">I/O</text>
<text x="159.9" y="417.51" fill="#000000" stroke="#000000" font-size="9" textLength="12.9" lengthAdjust="spacingAndGlyphs">A13</text>
<text x="356.8" y="417.51" fill="#000000" stroke="#000000" font-size="9" textLength="17.9" lengthAdjust="spacingAndGlyphs">MA12</text>
<text x="223.19" y="427.27" fill="#A90000" stroke="#A90000" font-size="8.4" text-anchor="middle" textLength="8.3" lengthAdjust="spacingAndGlyphs" stroke-width="0.45">26</text>
<text x="230.52" y="431.17" fill="#006464" stroke="#006464" font-size="9" textLength="20.2" lengthAdjust="spacingAndGlyphs">VCCIO</text>
<text x="311.94" y="427.27" fill="#A90000" stroke="#A90000" font-size="8.4" text-anchor="middle" textLength="8.3" lengthAdjust="spacingAndGlyphs" stroke-width="0.45">39</text>
<text x="303.71" y="431.17" fill="#006464" stroke="#006464" font-size="9" text-anchor="end" textLength="11" lengthAdjust="spacingAndGlyphs">I/O</text>
<text x="159.9" y="427.37" fill="#000000" stroke="#000000" font-size="9" textLength="12.9" lengthAdjust="spacingAndGlyphs">VCC</text>
<text x="356.8" y="427.37" fill="#000000" stroke="#000000" font-size="9" textLength="13.7" lengthAdjust="spacingAndGlyphs">MRW</text>
<text x="223.19" y="437.13" fill="#A90000" stroke="#A90000" font-size="8.4" text-anchor="middle" textLength="8.3" lengthAdjust="spacingAndGlyphs" stroke-width="0.45">27</text>
<text x="230.52" y="441.03" fill="#006464" stroke="#006464" font-size="9" textLength="11" lengthAdjust="spacingAndGlyphs">I/O</text>
<text x="311.94" y="437.13" fill="#A90000" stroke="#A90000" font-size="8.4" text-anchor="middle" textLength="8.3" lengthAdjust="spacingAndGlyphs" stroke-width="0.45">38</text>
<text x="303.71" y="441.03" fill="#006464" stroke="#006464" font-size="9" text-anchor="end" textLength="20.2" lengthAdjust="spacingAndGlyphs">VCCIO</text>
<text x="159.9" y="437.23" fill="#000000" stroke="#000000" font-size="9" textLength="12.9" lengthAdjust="spacingAndGlyphs">A12</text>
<text x="356.8" y="437.23" fill="#000000" stroke="#000000" font-size="9" textLength="12.9" lengthAdjust="spacingAndGlyphs">VCC</text>
<text x="223.19" y="446.99" fill="#A90000" stroke="#A90000" font-size="8.4" text-anchor="middle" textLength="8.3" lengthAdjust="spacingAndGlyphs" stroke-width="0.45">28</text>
<text x="230.52" y="450.89" fill="#006464" stroke="#006464" font-size="9" textLength="11" lengthAdjust="spacingAndGlyphs">I/O</text>
<text x="311.94" y="446.99" fill="#A90000" stroke="#A90000" font-size="8.4" text-anchor="middle" textLength="8.3" lengthAdjust="spacingAndGlyphs" stroke-width="0.45">37</text>
<text x="303.71" y="450.89" fill="#006464" stroke="#006464" font-size="9" text-anchor="end" textLength="11" lengthAdjust="spacingAndGlyphs">I/O</text>
<text x="159.9" y="447.09" fill="#000000" stroke="#000000" font-size="9" textLength="12.9" lengthAdjust="spacingAndGlyphs">A10</text>
<text x="356.8" y="447.09" fill="#000000" stroke="#000000" font-size="9" textLength="17.9" lengthAdjust="spacingAndGlyphs">MA14</text>
<text x="223.19" y="456.85" fill="#A90000" stroke="#A90000" font-size="8.4" text-anchor="middle" textLength="8.3" lengthAdjust="spacingAndGlyphs" stroke-width="0.45">29</text>
<text x="230.52" y="460.75" fill="#006464" stroke="#006464" font-size="9" textLength="11" lengthAdjust="spacingAndGlyphs">I/O</text>
<text x="311.94" y="456.85" fill="#A90000" stroke="#A90000" font-size="8.4" text-anchor="middle" textLength="8.3" lengthAdjust="spacingAndGlyphs" stroke-width="0.45">36</text>
<text x="303.71" y="460.75" fill="#006464" stroke="#006464" font-size="9" text-anchor="end" textLength="11" lengthAdjust="spacingAndGlyphs">I/O</text>
<text x="159.9" y="456.95" fill="#000000" stroke="#000000" font-size="9" textLength="22.5" lengthAdjust="spacingAndGlyphs">HSYNC</text>
<text x="356.8" y="456.95" fill="#000000" stroke="#000000" font-size="9" textLength="17.9" lengthAdjust="spacingAndGlyphs">MA16</text>
<text x="223.19" y="466.71" fill="#A90000" stroke="#A90000" font-size="8.4" text-anchor="middle" textLength="8.3" lengthAdjust="spacingAndGlyphs" stroke-width="0.45">30</text>
<text x="230.52" y="470.61" fill="#006464" stroke="#006464" font-size="9" textLength="11" lengthAdjust="spacingAndGlyphs">I/O</text>
<text x="311.94" y="466.71" fill="#A90000" stroke="#A90000" font-size="8.4" text-anchor="middle" textLength="8.3" lengthAdjust="spacingAndGlyphs" stroke-width="0.45">35</text>
<text x="303.71" y="470.61" fill="#006464" stroke="#006464" font-size="9" text-anchor="end" textLength="11" lengthAdjust="spacingAndGlyphs">I/O</text>
<text x="159.9" y="466.81" fill="#000000" stroke="#000000" font-size="9" textLength="22.5" lengthAdjust="spacingAndGlyphs">VSYNC</text>
<text x="356.8" y="466.81" fill="#000000" stroke="#000000" font-size="9" textLength="17.9" lengthAdjust="spacingAndGlyphs">MA15</text>
<text x="223.19" y="476.57" fill="#A90000" stroke="#A90000" font-size="8.4" text-anchor="middle" textLength="8.3" lengthAdjust="spacingAndGlyphs" stroke-width="0.45">31</text>
<text x="230.52" y="480.47" fill="#006464" stroke="#006464" font-size="9" textLength="11" lengthAdjust="spacingAndGlyphs">I/O</text>
<text x="311.94" y="476.57" fill="#A90000" stroke="#A90000" font-size="8.4" text-anchor="middle" textLength="8.3" lengthAdjust="spacingAndGlyphs" stroke-width="0.45">34</text>
<text x="303.71" y="480.47" fill="#006464" stroke="#006464" font-size="9" text-anchor="end" textLength="11" lengthAdjust="spacingAndGlyphs">I/O</text>
<text x="159.9" y="476.67" fill="#000000" stroke="#000000" font-size="9" textLength="17.9" lengthAdjust="spacingAndGlyphs">HDRV</text>
<text x="356.8" y="476.67" fill="#000000" stroke="#000000" font-size="9" textLength="13.3" lengthAdjust="spacingAndGlyphs">MA1</text>
<text x="223.19" y="486.44" fill="#A90000" stroke="#A90000" font-size="8.4" text-anchor="middle" textLength="8.3" lengthAdjust="spacingAndGlyphs" stroke-width="0.45">32</text>
<text x="230.52" y="490.34" fill="#006464" stroke="#006464" font-size="9" textLength="14.1" lengthAdjust="spacingAndGlyphs">GND</text>
<text x="311.94" y="486.44" fill="#A90000" stroke="#A90000" font-size="8.4" text-anchor="middle" textLength="8.3" lengthAdjust="spacingAndGlyphs" stroke-width="0.45">33</text>
<text x="303.71" y="490.34" fill="#006464" stroke="#006464" font-size="9" text-anchor="end" textLength="11" lengthAdjust="spacingAndGlyphs">I/O</text>
<text x="159.9" y="486.54" fill="#000000" stroke="#000000" font-size="9" textLength="14.1" lengthAdjust="spacingAndGlyphs">GND</text>
<text x="356.8" y="486.54" fill="#000000" stroke="#000000" font-size="9" textLength="13.3" lengthAdjust="spacingAndGlyphs">MA0</text>
<text x="523.95" y="64.08" fill="#006464" stroke="#006464" font-size="9" text-anchor="middle" textLength="8.3" lengthAdjust="spacingAndGlyphs">U2</text>
<text x="479.57" y="72.27" fill="#A90000" stroke="#A90000" font-size="8.4" text-anchor="middle" textLength="8.3" lengthAdjust="spacingAndGlyphs" stroke-width="0.45">75</text>
<text x="486.9" y="76.17" fill="#006464" stroke="#006464" font-size="9" textLength="11" lengthAdjust="spacingAndGlyphs">I/O</text>
<text x="568.32" y="72.27" fill="#A90000" stroke="#A90000" font-size="8.4" text-anchor="middle" textLength="8.3" lengthAdjust="spacingAndGlyphs" stroke-width="0.45">74</text>
<text x="560.09" y="76.17" fill="#006464" stroke="#006464" font-size="9" text-anchor="end" textLength="11" lengthAdjust="spacingAndGlyphs">I/O</text>
<text x="416.3" y="72.37" fill="#000000" stroke="#000000" font-size="9" textLength="8.7" lengthAdjust="spacingAndGlyphs">D4</text>
<text x="479.57" y="82.13" fill="#A90000" stroke="#A90000" font-size="8.4" text-anchor="middle" textLength="8.3" lengthAdjust="spacingAndGlyphs" stroke-width="0.45">76</text>
<text x="486.9" y="86.03" fill="#006464" stroke="#006464" font-size="9" textLength="11" lengthAdjust="spacingAndGlyphs">I/O</text>
<text x="568.32" y="82.13" fill="#A90000" stroke="#A90000" font-size="8.4" text-anchor="middle" textLength="8.3" lengthAdjust="spacingAndGlyphs" stroke-width="0.45">73</text>
<text x="560.09" y="86.03" fill="#006464" stroke="#006464" font-size="9" text-anchor="end" textLength="11" lengthAdjust="spacingAndGlyphs">I/O</text>
<text x="416.3" y="82.23" fill="#000000" stroke="#000000" font-size="9" textLength="8.7" lengthAdjust="spacingAndGlyphs">D7</text>
<text x="479.57" y="91.99" fill="#A90000" stroke="#A90000" font-size="8.4" text-anchor="middle" textLength="8.3" lengthAdjust="spacingAndGlyphs" stroke-width="0.45">77</text>
<text x="486.9" y="95.89" fill="#006464" stroke="#006464" font-size="9" textLength="11" lengthAdjust="spacingAndGlyphs">I/O</text>
<text x="568.32" y="91.99" fill="#A90000" stroke="#A90000" font-size="8.4" text-anchor="middle" textLength="8.3" lengthAdjust="spacingAndGlyphs" stroke-width="0.45">72</text>
<text x="560.09" y="95.89" fill="#006464" stroke="#006464" font-size="9" text-anchor="end" textLength="14.1" lengthAdjust="spacingAndGlyphs">GND</text>
<text x="416.3" y="92.09" fill="#000000" stroke="#000000" font-size="9" textLength="8.7" lengthAdjust="spacingAndGlyphs">D1</text>
<text x="613.5" y="92.09" fill="#000000" stroke="#000000" font-size="9" textLength="14.1" lengthAdjust="spacingAndGlyphs">GND</text>
<text x="479.57" y="101.85" fill="#A90000" stroke="#A90000" font-size="8.4" text-anchor="middle" textLength="8.3" lengthAdjust="spacingAndGlyphs" stroke-width="0.45">78</text>
<text x="486.9" y="105.75" fill="#006464" stroke="#006464" font-size="9" textLength="20.2" lengthAdjust="spacingAndGlyphs">VCCIO</text>
<text x="568.32" y="101.85" fill="#A90000" stroke="#A90000" font-size="8.4" text-anchor="middle" textLength="8.3" lengthAdjust="spacingAndGlyphs" stroke-width="0.45">71</text>
<text x="560.09" y="105.75" fill="#006464" stroke="#006464" font-size="9" text-anchor="end" textLength="13.7" lengthAdjust="spacingAndGlyphs">TDO</text>
<text x="416.3" y="101.95" fill="#000000" stroke="#000000" font-size="9" textLength="12.9" lengthAdjust="spacingAndGlyphs">VCC</text>
<text x="613.5" y="101.95" fill="#000000" stroke="#000000" font-size="9" textLength="13.7" lengthAdjust="spacingAndGlyphs">TDO</text>
<text x="479.57" y="111.72" fill="#A90000" stroke="#A90000" font-size="8.4" text-anchor="middle" textLength="8.3" lengthAdjust="spacingAndGlyphs" stroke-width="0.45">79</text>
<text x="486.9" y="115.62" fill="#006464" stroke="#006464" font-size="9" textLength="11" lengthAdjust="spacingAndGlyphs">I/O</text>
<text x="568.32" y="111.72" fill="#A90000" stroke="#A90000" font-size="8.4" text-anchor="middle" textLength="8.3" lengthAdjust="spacingAndGlyphs" stroke-width="0.45">70</text>
<text x="560.09" y="115.62" fill="#006464" stroke="#006464" font-size="9" text-anchor="end" textLength="11" lengthAdjust="spacingAndGlyphs">I/O</text>
<text x="416.3" y="111.82" fill="#000000" stroke="#000000" font-size="9" textLength="8.7" lengthAdjust="spacingAndGlyphs">D6</text>
<text x="479.57" y="121.58" fill="#A90000" stroke="#A90000" font-size="8.4" text-anchor="middle" textLength="8.3" lengthAdjust="spacingAndGlyphs" stroke-width="0.45">80</text>
<text x="486.9" y="125.48" fill="#006464" stroke="#006464" font-size="9" textLength="11" lengthAdjust="spacingAndGlyphs">I/O</text>
<text x="568.32" y="121.58" fill="#A90000" stroke="#A90000" font-size="8.4" text-anchor="middle" textLength="8.3" lengthAdjust="spacingAndGlyphs" stroke-width="0.45">69</text>
<text x="560.09" y="125.48" fill="#006464" stroke="#006464" font-size="9" text-anchor="end" textLength="11" lengthAdjust="spacingAndGlyphs">I/O</text>
<text x="416.3" y="121.68" fill="#000000" stroke="#000000" font-size="9" textLength="8.7" lengthAdjust="spacingAndGlyphs">D3</text>
<text x="479.57" y="131.44" fill="#A90000" stroke="#A90000" font-size="8.4" text-anchor="middle" textLength="8.3" lengthAdjust="spacingAndGlyphs" stroke-width="0.45">81</text>
<text x="486.9" y="135.34" fill="#006464" stroke="#006464" font-size="9" textLength="38" lengthAdjust="spacingAndGlyphs">I/O,GCLK3</text>
<text x="568.32" y="131.44" fill="#A90000" stroke="#A90000" font-size="8.4" text-anchor="middle" textLength="8.3" lengthAdjust="spacingAndGlyphs" stroke-width="0.45">68</text>
<text x="560.09" y="135.34" fill="#006464" stroke="#006464" font-size="9" text-anchor="end" textLength="11" lengthAdjust="spacingAndGlyphs">I/O</text>
<text x="416.3" y="131.54" fill="#000000" stroke="#000000" font-size="9" textLength="8.7" lengthAdjust="spacingAndGlyphs">D5</text>
<text x="479.57" y="141.3" fill="#A90000" stroke="#A90000" font-size="8.4" text-anchor="middle" textLength="8.3" lengthAdjust="spacingAndGlyphs" stroke-width="0.45">82</text>
<text x="486.9" y="145.2" fill="#006464" stroke="#006464" font-size="9" textLength="14.1" lengthAdjust="spacingAndGlyphs">GND</text>
<text x="568.32" y="141.3" fill="#A90000" stroke="#A90000" font-size="8.4" text-anchor="middle" textLength="8.3" lengthAdjust="spacingAndGlyphs" stroke-width="0.45">67</text>
<text x="560.09" y="145.2" fill="#006464" stroke="#006464" font-size="9" text-anchor="end" textLength="11" lengthAdjust="spacingAndGlyphs">I/O</text>
<text x="416.3" y="141.4" fill="#000000" stroke="#000000" font-size="9" textLength="14.1" lengthAdjust="spacingAndGlyphs">GND</text>
<text x="479.57" y="151.16" fill="#A90000" stroke="#A90000" font-size="8.4" text-anchor="middle" textLength="8.3" lengthAdjust="spacingAndGlyphs" stroke-width="0.45">83</text>
<text x="486.9" y="155.06" fill="#006464" stroke="#006464" font-size="9" textLength="22.5" lengthAdjust="spacingAndGlyphs">GCLK1</text>
<text x="568.32" y="151.16" fill="#A90000" stroke="#A90000" font-size="8.4" text-anchor="middle" textLength="8.3" lengthAdjust="spacingAndGlyphs" stroke-width="0.45">66</text>
<text x="560.09" y="155.06" fill="#006464" stroke="#006464" font-size="9" text-anchor="end" textLength="20.2" lengthAdjust="spacingAndGlyphs">VCCIO</text>
<text x="416.3" y="151.26" fill="#000000" stroke="#000000" font-size="9" textLength="12.9" lengthAdjust="spacingAndGlyphs">CLK</text>
<text x="613.5" y="151.26" fill="#000000" stroke="#000000" font-size="9" textLength="12.9" lengthAdjust="spacingAndGlyphs">VCC</text>
<text x="479.57" y="161.02" fill="#A90000" stroke="#A90000" font-size="8.4" text-anchor="middle" textLength="8.3" lengthAdjust="spacingAndGlyphs" stroke-width="0.45">84</text>
<text x="486.9" y="164.92" fill="#006464" stroke="#006464" font-size="9" textLength="13.3" lengthAdjust="spacingAndGlyphs">OE1</text>
<text x="568.32" y="161.02" fill="#A90000" stroke="#A90000" font-size="8.4" text-anchor="middle" textLength="8.3" lengthAdjust="spacingAndGlyphs" stroke-width="0.45">65</text>
<text x="560.09" y="164.92" fill="#006464" stroke="#006464" font-size="9" text-anchor="end" textLength="11" lengthAdjust="spacingAndGlyphs">I/O</text>
<text x="416.3" y="161.12" fill="#000000" stroke="#000000" font-size="9" textLength="8.7" lengthAdjust="spacingAndGlyphs">D0</text>
<text x="479.57" y="170.88" fill="#A90000" stroke="#A90000" font-size="8.4" text-anchor="middle" textLength="3.7" lengthAdjust="spacingAndGlyphs" stroke-width="0.45">1</text>
<text x="486.9" y="174.78" fill="#006464" stroke="#006464" font-size="9" textLength="17.9" lengthAdjust="spacingAndGlyphs">GCLR</text>
<text x="568.32" y="170.88" fill="#A90000" stroke="#A90000" font-size="8.4" text-anchor="middle" textLength="8.3" lengthAdjust="spacingAndGlyphs" stroke-width="0.45">64</text>
<text x="560.09" y="174.78" fill="#006464" stroke="#006464" font-size="9" text-anchor="end" textLength="11" lengthAdjust="spacingAndGlyphs">I/O</text>
<text x="416.3" y="170.98" fill="#000000" stroke="#000000" font-size="9" textLength="8.7" lengthAdjust="spacingAndGlyphs">D2</text>
<text x="479.57" y="180.74" fill="#A90000" stroke="#A90000" font-size="8.4" text-anchor="middle" textLength="3.7" lengthAdjust="spacingAndGlyphs" stroke-width="0.45">2</text>
<text x="486.9" y="184.64" fill="#006464" stroke="#006464" font-size="9" textLength="43" lengthAdjust="spacingAndGlyphs">OE2-GCLK2</text>
<text x="568.32" y="180.74" fill="#A90000" stroke="#A90000" font-size="8.4" text-anchor="middle" textLength="8.3" lengthAdjust="spacingAndGlyphs" stroke-width="0.45">63</text>
<text x="560.09" y="184.64" fill="#006464" stroke="#006464" font-size="9" text-anchor="end" textLength="11" lengthAdjust="spacingAndGlyphs">I/O</text>
<text x="416.3" y="180.84" fill="#000000" stroke="#000000" font-size="9" textLength="19.8" lengthAdjust="spacingAndGlyphs">SHIFT</text>
<text x="479.57" y="190.6" fill="#A90000" stroke="#A90000" font-size="8.4" text-anchor="middle" textLength="3.7" lengthAdjust="spacingAndGlyphs" stroke-width="0.45">3</text>
<text x="486.9" y="194.5" fill="#006464" stroke="#006464" font-size="9" textLength="24.8" lengthAdjust="spacingAndGlyphs">VCCINT</text>
<text x="568.32" y="190.6" fill="#A90000" stroke="#A90000" font-size="8.4" text-anchor="middle" textLength="8.3" lengthAdjust="spacingAndGlyphs" stroke-width="0.45">62</text>
<text x="560.09" y="194.5" fill="#006464" stroke="#006464" font-size="9" text-anchor="end" textLength="12.9" lengthAdjust="spacingAndGlyphs">TCK</text>
<text x="416.3" y="190.7" fill="#000000" stroke="#000000" font-size="9" textLength="12.9" lengthAdjust="spacingAndGlyphs">VCC</text>
<text x="613.5" y="190.7" fill="#000000" stroke="#000000" font-size="9" textLength="12.9" lengthAdjust="spacingAndGlyphs">TCK</text>
<text x="479.57" y="200.47" fill="#A90000" stroke="#A90000" font-size="8.4" text-anchor="middle" textLength="3.7" lengthAdjust="spacingAndGlyphs" stroke-width="0.45">4</text>
<text x="486.9" y="204.37" fill="#006464" stroke="#006464" font-size="9" textLength="11" lengthAdjust="spacingAndGlyphs">I/O</text>
<text x="568.32" y="200.47" fill="#A90000" stroke="#A90000" font-size="8.4" text-anchor="middle" textLength="8.3" lengthAdjust="spacingAndGlyphs" stroke-width="0.45">61</text>
<text x="560.09" y="204.37" fill="#006464" stroke="#006464" font-size="9" text-anchor="end" textLength="11" lengthAdjust="spacingAndGlyphs">I/O</text>
<text x="479.57" y="210.33" fill="#A90000" stroke="#A90000" font-size="8.4" text-anchor="middle" textLength="3.7" lengthAdjust="spacingAndGlyphs" stroke-width="0.45">5</text>
<text x="486.9" y="214.23" fill="#006464" stroke="#006464" font-size="9" textLength="11" lengthAdjust="spacingAndGlyphs">I/O</text>
<text x="568.32" y="210.33" fill="#A90000" stroke="#A90000" font-size="8.4" text-anchor="middle" textLength="8.3" lengthAdjust="spacingAndGlyphs" stroke-width="0.45">60</text>
<text x="560.09" y="214.23" fill="#006464" stroke="#006464" font-size="9" text-anchor="end" textLength="11" lengthAdjust="spacingAndGlyphs">I/O</text>
<text x="479.57" y="220.19" fill="#A90000" stroke="#A90000" font-size="8.4" text-anchor="middle" textLength="3.7" lengthAdjust="spacingAndGlyphs" stroke-width="0.45">6</text>
<text x="486.9" y="224.09" fill="#006464" stroke="#006464" font-size="9" textLength="11" lengthAdjust="spacingAndGlyphs">I/O</text>
<text x="568.32" y="220.19" fill="#A90000" stroke="#A90000" font-size="8.4" text-anchor="middle" textLength="8.3" lengthAdjust="spacingAndGlyphs" stroke-width="0.45">59</text>
<text x="560.09" y="224.09" fill="#006464" stroke="#006464" font-size="9" text-anchor="end" textLength="14.1" lengthAdjust="spacingAndGlyphs">GND</text>
<text x="613.5" y="220.29" fill="#000000" stroke="#000000" font-size="9" textLength="14.1" lengthAdjust="spacingAndGlyphs">GND</text>
<text x="479.57" y="230.05" fill="#A90000" stroke="#A90000" font-size="8.4" text-anchor="middle" textLength="3.7" lengthAdjust="spacingAndGlyphs" stroke-width="0.45">7</text>
<text x="486.9" y="233.95" fill="#006464" stroke="#006464" font-size="9" textLength="14.1" lengthAdjust="spacingAndGlyphs">GND</text>
<text x="568.32" y="230.05" fill="#A90000" stroke="#A90000" font-size="8.4" text-anchor="middle" textLength="8.3" lengthAdjust="spacingAndGlyphs" stroke-width="0.45">58</text>
<text x="560.09" y="233.95" fill="#006464" stroke="#006464" font-size="9" text-anchor="end" textLength="11" lengthAdjust="spacingAndGlyphs">I/O</text>
<text x="416.3" y="230.15" fill="#000000" stroke="#000000" font-size="9" textLength="14.1" lengthAdjust="spacingAndGlyphs">GND</text>
<text x="479.57" y="239.91" fill="#A90000" stroke="#A90000" font-size="8.4" text-anchor="middle" textLength="3.7" lengthAdjust="spacingAndGlyphs" stroke-width="0.45">8</text>
<text x="486.9" y="243.81" fill="#006464" stroke="#006464" font-size="9" textLength="11" lengthAdjust="spacingAndGlyphs">I/O</text>
<text x="568.32" y="239.91" fill="#A90000" stroke="#A90000" font-size="8.4" text-anchor="middle" textLength="8.3" lengthAdjust="spacingAndGlyphs" stroke-width="0.45">57</text>
<text x="560.09" y="243.81" fill="#006464" stroke="#006464" font-size="9" text-anchor="end" textLength="11" lengthAdjust="spacingAndGlyphs">I/O</text>
<text x="479.57" y="249.77" fill="#A90000" stroke="#A90000" font-size="8.4" text-anchor="middle" textLength="3.7" lengthAdjust="spacingAndGlyphs" stroke-width="0.45">9</text>
<text x="486.9" y="253.67" fill="#006464" stroke="#006464" font-size="9" textLength="11" lengthAdjust="spacingAndGlyphs">I/O</text>
<text x="568.32" y="249.77" fill="#A90000" stroke="#A90000" font-size="8.4" text-anchor="middle" textLength="8.3" lengthAdjust="spacingAndGlyphs" stroke-width="0.45">56</text>
<text x="560.09" y="253.67" fill="#006464" stroke="#006464" font-size="9" text-anchor="end" textLength="11" lengthAdjust="spacingAndGlyphs">I/O</text>
<text x="479.57" y="259.63" fill="#A90000" stroke="#A90000" font-size="8.4" text-anchor="middle" textLength="8.3" lengthAdjust="spacingAndGlyphs" stroke-width="0.45">10</text>
<text x="486.9" y="263.53" fill="#006464" stroke="#006464" font-size="9" textLength="11" lengthAdjust="spacingAndGlyphs">I/O</text>
<text x="568.32" y="259.63" fill="#A90000" stroke="#A90000" font-size="8.4" text-anchor="middle" textLength="8.3" lengthAdjust="spacingAndGlyphs" stroke-width="0.45">55</text>
<text x="560.09" y="263.53" fill="#006464" stroke="#006464" font-size="9" text-anchor="end" textLength="11" lengthAdjust="spacingAndGlyphs">I/O</text>
<text x="479.57" y="269.49" fill="#A90000" stroke="#A90000" font-size="8.4" text-anchor="middle" textLength="8.3" lengthAdjust="spacingAndGlyphs" stroke-width="0.45">11</text>
<text x="486.9" y="273.39" fill="#006464" stroke="#006464" font-size="9" textLength="11" lengthAdjust="spacingAndGlyphs">I/O</text>
<text x="568.32" y="269.49" fill="#A90000" stroke="#A90000" font-size="8.4" text-anchor="middle" textLength="8.3" lengthAdjust="spacingAndGlyphs" stroke-width="0.45">54</text>
<text x="560.09" y="273.39" fill="#006464" stroke="#006464" font-size="9" text-anchor="end" textLength="11" lengthAdjust="spacingAndGlyphs">I/O</text>
<text x="416.3" y="269.59" fill="#000000" stroke="#000000" font-size="9" textLength="24.4" lengthAdjust="spacingAndGlyphs">LIBRE4</text>
<text x="479.57" y="289.21" fill="#A90000" stroke="#A90000" font-size="8.4" text-anchor="middle" textLength="8.3" lengthAdjust="spacingAndGlyphs" stroke-width="0.45">12</text>
<text x="486.9" y="293.11" fill="#006464" stroke="#006464" font-size="9" textLength="31.5" lengthAdjust="spacingAndGlyphs">I/O-PD1</text>
<text x="568.32" y="289.21" fill="#A90000" stroke="#A90000" font-size="8.4" text-anchor="middle" textLength="8.3" lengthAdjust="spacingAndGlyphs" stroke-width="0.45">53</text>
<text x="560.09" y="293.11" fill="#006464" stroke="#006464" font-size="9" text-anchor="end" textLength="20.2" lengthAdjust="spacingAndGlyphs">VCCIO</text>
<text x="416.3" y="289.31" fill="#000000" stroke="#000000" font-size="9" textLength="24.8" lengthAdjust="spacingAndGlyphs">RAZVID</text>
<text x="613.5" y="289.31" fill="#000000" stroke="#000000" font-size="9" textLength="12.9" lengthAdjust="spacingAndGlyphs">VCC</text>
<text x="479.57" y="299.08" fill="#A90000" stroke="#A90000" font-size="8.4" text-anchor="middle" textLength="8.3" lengthAdjust="spacingAndGlyphs" stroke-width="0.45">13</text>
<text x="486.9" y="302.98" fill="#006464" stroke="#006464" font-size="9" textLength="20.2" lengthAdjust="spacingAndGlyphs">VCCIO</text>
<text x="568.32" y="299.08" fill="#A90000" stroke="#A90000" font-size="8.4" text-anchor="middle" textLength="8.3" lengthAdjust="spacingAndGlyphs" stroke-width="0.45">52</text>
<text x="560.09" y="302.98" fill="#006464" stroke="#006464" font-size="9" text-anchor="end" textLength="11" lengthAdjust="spacingAndGlyphs">I/O</text>
<text x="416.3" y="299.18" fill="#000000" stroke="#000000" font-size="9" textLength="12.9" lengthAdjust="spacingAndGlyphs">VCC</text>
<text x="479.57" y="308.94" fill="#A90000" stroke="#A90000" font-size="8.4" text-anchor="middle" textLength="8.3" lengthAdjust="spacingAndGlyphs" stroke-width="0.45">14</text>
<text x="486.9" y="312.84" fill="#006464" stroke="#006464" font-size="9" textLength="11" lengthAdjust="spacingAndGlyphs">TDI</text>
<text x="568.32" y="308.94" fill="#A90000" stroke="#A90000" font-size="8.4" text-anchor="middle" textLength="8.3" lengthAdjust="spacingAndGlyphs" stroke-width="0.45">51</text>
<text x="560.09" y="312.84" fill="#006464" stroke="#006464" font-size="9" text-anchor="end" textLength="11" lengthAdjust="spacingAndGlyphs">I/O</text>
<text x="416.3" y="309.04" fill="#000000" stroke="#000000" font-size="9" textLength="20.6" lengthAdjust="spacingAndGlyphs">TDI/O</text>
<text x="603.8" y="309.04" fill="#000000" stroke="#000000" font-size="9" textLength="29.4" lengthAdjust="spacingAndGlyphs">GRAPHIC</text>
<text x="479.57" y="318.8" fill="#A90000" stroke="#A90000" font-size="8.4" text-anchor="middle" textLength="8.3" lengthAdjust="spacingAndGlyphs" stroke-width="0.45">15</text>
<text x="486.9" y="322.7" fill="#006464" stroke="#006464" font-size="9" textLength="11" lengthAdjust="spacingAndGlyphs">I/O</text>
<text x="568.32" y="318.8" fill="#A90000" stroke="#A90000" font-size="8.4" text-anchor="middle" textLength="8.3" lengthAdjust="spacingAndGlyphs" stroke-width="0.45">50</text>
<text x="560.09" y="322.7" fill="#006464" stroke="#006464" font-size="9" text-anchor="end" textLength="11" lengthAdjust="spacingAndGlyphs">I/O</text>
<text x="416.3" y="318.9" fill="#000000" stroke="#000000" font-size="9" textLength="24.4" lengthAdjust="spacingAndGlyphs">LIBRE3</text>
<text x="613.5" y="318.9" fill="#000000" stroke="#000000" font-size="9" textLength="17.9" lengthAdjust="spacingAndGlyphs">ROUT</text>
<text x="479.57" y="328.66" fill="#A90000" stroke="#A90000" font-size="8.4" text-anchor="middle" textLength="8.3" lengthAdjust="spacingAndGlyphs" stroke-width="0.45">16</text>
<text x="486.9" y="332.56" fill="#006464" stroke="#006464" font-size="9" textLength="11" lengthAdjust="spacingAndGlyphs">I/O</text>
<text x="568.32" y="328.66" fill="#A90000" stroke="#A90000" font-size="8.4" text-anchor="middle" textLength="8.3" lengthAdjust="spacingAndGlyphs" stroke-width="0.45">49</text>
<text x="560.09" y="332.56" fill="#006464" stroke="#006464" font-size="9" text-anchor="end" textLength="11" lengthAdjust="spacingAndGlyphs">I/O</text>
<text x="416.3" y="328.76" fill="#000000" stroke="#000000" font-size="9" textLength="22.9" lengthAdjust="spacingAndGlyphs">MSYNC</text>
<text x="613.5" y="328.76" fill="#000000" stroke="#000000" font-size="9" textLength="17.9" lengthAdjust="spacingAndGlyphs">VOUT</text>
<text x="479.57" y="338.52" fill="#A90000" stroke="#A90000" font-size="8.4" text-anchor="middle" textLength="8.3" lengthAdjust="spacingAndGlyphs" stroke-width="0.45">17</text>
<text x="486.9" y="342.42" fill="#006464" stroke="#006464" font-size="9" textLength="11" lengthAdjust="spacingAndGlyphs">I/O</text>
<text x="568.32" y="338.52" fill="#A90000" stroke="#A90000" font-size="8.4" text-anchor="middle" textLength="8.3" lengthAdjust="spacingAndGlyphs" stroke-width="0.45">48</text>
<text x="560.09" y="342.42" fill="#006464" stroke="#006464" font-size="9" text-anchor="end" textLength="11" lengthAdjust="spacingAndGlyphs">I/O</text>
<text x="416.3" y="338.62" fill="#000000" stroke="#000000" font-size="9" textLength="20.2" lengthAdjust="spacingAndGlyphs">ISYNC</text>
<text x="613.5" y="338.62" fill="#000000" stroke="#000000" font-size="9" textLength="17.9" lengthAdjust="spacingAndGlyphs">BOUT</text>
<text x="479.57" y="348.38" fill="#A90000" stroke="#A90000" font-size="8.4" text-anchor="middle" textLength="8.3" lengthAdjust="spacingAndGlyphs" stroke-width="0.45">18</text>
<text x="486.9" y="352.28" fill="#006464" stroke="#006464" font-size="9" textLength="11" lengthAdjust="spacingAndGlyphs">I/O</text>
<text x="568.32" y="348.38" fill="#A90000" stroke="#A90000" font-size="8.4" text-anchor="middle" textLength="8.3" lengthAdjust="spacingAndGlyphs" stroke-width="0.45">47</text>
<text x="560.09" y="352.28" fill="#006464" stroke="#006464" font-size="9" text-anchor="end" textLength="14.1" lengthAdjust="spacingAndGlyphs">GND</text>
<text x="416.3" y="348.48" fill="#000000" stroke="#000000" font-size="9" textLength="13.3" lengthAdjust="spacingAndGlyphs">MAK</text>
<text x="613.5" y="348.48" fill="#000000" stroke="#000000" font-size="9" textLength="14.1" lengthAdjust="spacingAndGlyphs">GND</text>
<text x="479.57" y="358.24" fill="#A90000" stroke="#A90000" font-size="8.4" text-anchor="middle" textLength="8.3" lengthAdjust="spacingAndGlyphs" stroke-width="0.45">19</text>
<text x="486.9" y="362.14" fill="#006464" stroke="#006464" font-size="9" textLength="14.1" lengthAdjust="spacingAndGlyphs">GND</text>
<text x="568.32" y="358.24" fill="#A90000" stroke="#A90000" font-size="8.4" text-anchor="middle" textLength="8.3" lengthAdjust="spacingAndGlyphs" stroke-width="0.45">46</text>
<text x="560.09" y="362.14" fill="#006464" stroke="#006464" font-size="9" text-anchor="end" textLength="11" lengthAdjust="spacingAndGlyphs">I/O</text>
<text x="416.3" y="358.34" fill="#000000" stroke="#000000" font-size="9" textLength="14.1" lengthAdjust="spacingAndGlyphs">GND</text>
<text x="479.57" y="368.1" fill="#A90000" stroke="#A90000" font-size="8.4" text-anchor="middle" textLength="8.3" lengthAdjust="spacingAndGlyphs" stroke-width="0.45">20</text>
<text x="486.9" y="372" fill="#006464" stroke="#006464" font-size="9" textLength="11" lengthAdjust="spacingAndGlyphs">I/O</text>
<text x="568.32" y="368.1" fill="#A90000" stroke="#A90000" font-size="8.4" text-anchor="middle" textLength="8.3" lengthAdjust="spacingAndGlyphs" stroke-width="0.45">45</text>
<text x="560.09" y="372" fill="#006464" stroke="#006464" font-size="9" text-anchor="end" textLength="28.8" lengthAdjust="spacingAndGlyphs">I/O,PD2</text>
<text x="416.3" y="368.2" fill="#000000" stroke="#000000" font-size="9" textLength="24.4" lengthAdjust="spacingAndGlyphs">LIBRE0</text>
<text x="479.57" y="377.96" fill="#A90000" stroke="#A90000" font-size="8.4" text-anchor="middle" textLength="8.3" lengthAdjust="spacingAndGlyphs" stroke-width="0.45">21</text>
<text x="486.9" y="381.86" fill="#006464" stroke="#006464" font-size="9" textLength="11" lengthAdjust="spacingAndGlyphs">I/O</text>
<text x="568.32" y="377.96" fill="#A90000" stroke="#A90000" font-size="8.4" text-anchor="middle" textLength="8.3" lengthAdjust="spacingAndGlyphs" stroke-width="0.45">44</text>
<text x="560.09" y="381.86" fill="#006464" stroke="#006464" font-size="9" text-anchor="end" textLength="11" lengthAdjust="spacingAndGlyphs">I/O</text>
<text x="416.3" y="378.06" fill="#000000" stroke="#000000" font-size="9" textLength="13.3" lengthAdjust="spacingAndGlyphs">WAK</text>
<text x="479.57" y="387.82" fill="#A90000" stroke="#A90000" font-size="8.4" text-anchor="middle" textLength="8.3" lengthAdjust="spacingAndGlyphs" stroke-width="0.45">22</text>
<text x="486.9" y="391.72" fill="#006464" stroke="#006464" font-size="9" textLength="11" lengthAdjust="spacingAndGlyphs">I/O</text>
<text x="568.32" y="387.82" fill="#A90000" stroke="#A90000" font-size="8.4" text-anchor="middle" textLength="8.3" lengthAdjust="spacingAndGlyphs" stroke-width="0.45">43</text>
<text x="560.09" y="391.72" fill="#006464" stroke="#006464" font-size="9" text-anchor="end" textLength="24.8" lengthAdjust="spacingAndGlyphs">VCCINT</text>
<text x="416.3" y="387.92" fill="#000000" stroke="#000000" font-size="9" textLength="22.5" lengthAdjust="spacingAndGlyphs">CSREG</text>
<text x="613.5" y="387.92" fill="#000000" stroke="#000000" font-size="9" textLength="12.9" lengthAdjust="spacingAndGlyphs">VCC</text>
<text x="479.57" y="397.69" fill="#A90000" stroke="#A90000" font-size="8.4" text-anchor="middle" textLength="8.3" lengthAdjust="spacingAndGlyphs" stroke-width="0.45">23</text>
<text x="486.9" y="401.59" fill="#006464" stroke="#006464" font-size="9" textLength="13.3" lengthAdjust="spacingAndGlyphs">TMS</text>
<text x="568.32" y="397.69" fill="#A90000" stroke="#A90000" font-size="8.4" text-anchor="middle" textLength="8.3" lengthAdjust="spacingAndGlyphs" stroke-width="0.45">42</text>
<text x="560.09" y="401.59" fill="#006464" stroke="#006464" font-size="9" text-anchor="end" textLength="14.1" lengthAdjust="spacingAndGlyphs">GND</text>
<text x="416.3" y="397.79" fill="#000000" stroke="#000000" font-size="9" textLength="13.3" lengthAdjust="spacingAndGlyphs">TMS</text>
<text x="613.5" y="397.79" fill="#000000" stroke="#000000" font-size="9" textLength="14.1" lengthAdjust="spacingAndGlyphs">GND</text>
<text x="479.57" y="407.55" fill="#A90000" stroke="#A90000" font-size="8.4" text-anchor="middle" textLength="8.3" lengthAdjust="spacingAndGlyphs" stroke-width="0.45">24</text>
<text x="486.9" y="411.45" fill="#006464" stroke="#006464" font-size="9" textLength="11" lengthAdjust="spacingAndGlyphs">I/O</text>
<text x="568.32" y="407.55" fill="#A90000" stroke="#A90000" font-size="8.4" text-anchor="middle" textLength="8.3" lengthAdjust="spacingAndGlyphs" stroke-width="0.45">41</text>
<text x="560.09" y="411.45" fill="#006464" stroke="#006464" font-size="9" text-anchor="end" textLength="11" lengthAdjust="spacingAndGlyphs">I/O</text>
<text x="613.5" y="407.65" fill="#000000" stroke="#000000" font-size="9" textLength="13.7" lengthAdjust="spacingAndGlyphs">MD3</text>
<text x="479.57" y="417.41" fill="#A90000" stroke="#A90000" font-size="8.4" text-anchor="middle" textLength="8.3" lengthAdjust="spacingAndGlyphs" stroke-width="0.45">25</text>
<text x="486.9" y="421.31" fill="#006464" stroke="#006464" font-size="9" textLength="11" lengthAdjust="spacingAndGlyphs">I/O</text>
<text x="568.32" y="417.41" fill="#A90000" stroke="#A90000" font-size="8.4" text-anchor="middle" textLength="8.3" lengthAdjust="spacingAndGlyphs" stroke-width="0.45">40</text>
<text x="560.09" y="421.31" fill="#006464" stroke="#006464" font-size="9" text-anchor="end" textLength="11" lengthAdjust="spacingAndGlyphs">I/O</text>
<text x="416.3" y="417.51" fill="#000000" stroke="#000000" font-size="9" textLength="22.9" lengthAdjust="spacingAndGlyphs">GORPL</text>
<text x="613.5" y="417.51" fill="#000000" stroke="#000000" font-size="9" textLength="13.7" lengthAdjust="spacingAndGlyphs">MD4</text>
<text x="479.57" y="427.27" fill="#A90000" stroke="#A90000" font-size="8.4" text-anchor="middle" textLength="8.3" lengthAdjust="spacingAndGlyphs" stroke-width="0.45">26</text>
<text x="486.9" y="431.17" fill="#006464" stroke="#006464" font-size="9" textLength="20.2" lengthAdjust="spacingAndGlyphs">VCCIO</text>
<text x="568.32" y="427.27" fill="#A90000" stroke="#A90000" font-size="8.4" text-anchor="middle" textLength="8.3" lengthAdjust="spacingAndGlyphs" stroke-width="0.45">39</text>
<text x="560.09" y="431.17" fill="#006464" stroke="#006464" font-size="9" text-anchor="end" textLength="11" lengthAdjust="spacingAndGlyphs">I/O</text>
<text x="416.3" y="427.37" fill="#000000" stroke="#000000" font-size="9" textLength="12.9" lengthAdjust="spacingAndGlyphs">VCC</text>
<text x="613.5" y="427.37" fill="#000000" stroke="#000000" font-size="9" textLength="13.7" lengthAdjust="spacingAndGlyphs">MD2</text>
<text x="479.57" y="437.13" fill="#A90000" stroke="#A90000" font-size="8.4" text-anchor="middle" textLength="8.3" lengthAdjust="spacingAndGlyphs" stroke-width="0.45">27</text>
<text x="486.9" y="441.03" fill="#006464" stroke="#006464" font-size="9" textLength="11" lengthAdjust="spacingAndGlyphs">I/O</text>
<text x="568.32" y="437.13" fill="#A90000" stroke="#A90000" font-size="8.4" text-anchor="middle" textLength="8.3" lengthAdjust="spacingAndGlyphs" stroke-width="0.45">38</text>
<text x="560.09" y="441.03" fill="#006464" stroke="#006464" font-size="9" text-anchor="end" textLength="20.2" lengthAdjust="spacingAndGlyphs">VCCIO</text>
<text x="613.5" y="437.23" fill="#000000" stroke="#000000" font-size="9" textLength="12.9" lengthAdjust="spacingAndGlyphs">VCC</text>
<text x="479.57" y="446.99" fill="#A90000" stroke="#A90000" font-size="8.4" text-anchor="middle" textLength="8.3" lengthAdjust="spacingAndGlyphs" stroke-width="0.45">28</text>
<text x="486.9" y="450.89" fill="#006464" stroke="#006464" font-size="9" textLength="11" lengthAdjust="spacingAndGlyphs">I/O</text>
<text x="568.32" y="446.99" fill="#A90000" stroke="#A90000" font-size="8.4" text-anchor="middle" textLength="8.3" lengthAdjust="spacingAndGlyphs" stroke-width="0.45">37</text>
<text x="560.09" y="450.89" fill="#006464" stroke="#006464" font-size="9" text-anchor="end" textLength="11" lengthAdjust="spacingAndGlyphs">I/O</text>
<text x="416.3" y="447.09" fill="#000000" stroke="#000000" font-size="9" textLength="24.4" lengthAdjust="spacingAndGlyphs">LIBRE1</text>
<text x="613.5" y="447.09" fill="#000000" stroke="#000000" font-size="9" textLength="13.7" lengthAdjust="spacingAndGlyphs">MD1</text>
<text x="479.57" y="456.85" fill="#A90000" stroke="#A90000" font-size="8.4" text-anchor="middle" textLength="8.3" lengthAdjust="spacingAndGlyphs" stroke-width="0.45">29</text>
<text x="486.9" y="460.75" fill="#006464" stroke="#006464" font-size="9" textLength="11" lengthAdjust="spacingAndGlyphs">I/O</text>
<text x="568.32" y="456.85" fill="#A90000" stroke="#A90000" font-size="8.4" text-anchor="middle" textLength="8.3" lengthAdjust="spacingAndGlyphs" stroke-width="0.45">36</text>
<text x="560.09" y="460.75" fill="#006464" stroke="#006464" font-size="9" text-anchor="end" textLength="11" lengthAdjust="spacingAndGlyphs">I/O</text>
<text x="416.3" y="456.95" fill="#000000" stroke="#000000" font-size="9" textLength="24.4" lengthAdjust="spacingAndGlyphs">LIBRE2</text>
<text x="613.5" y="456.95" fill="#000000" stroke="#000000" font-size="9" textLength="13.7" lengthAdjust="spacingAndGlyphs">MD0</text>
<text x="479.57" y="466.71" fill="#A90000" stroke="#A90000" font-size="8.4" text-anchor="middle" textLength="8.3" lengthAdjust="spacingAndGlyphs" stroke-width="0.45">30</text>
<text x="486.9" y="470.61" fill="#006464" stroke="#006464" font-size="9" textLength="11" lengthAdjust="spacingAndGlyphs">I/O</text>
<text x="568.32" y="466.71" fill="#A90000" stroke="#A90000" font-size="8.4" text-anchor="middle" textLength="8.3" lengthAdjust="spacingAndGlyphs" stroke-width="0.45">35</text>
<text x="560.09" y="470.61" fill="#006464" stroke="#006464" font-size="9" text-anchor="end" textLength="11" lengthAdjust="spacingAndGlyphs">I/O</text>
<text x="613.5" y="466.81" fill="#000000" stroke="#000000" font-size="9" textLength="13.7" lengthAdjust="spacingAndGlyphs">MD5</text>
<text x="479.57" y="476.57" fill="#A90000" stroke="#A90000" font-size="8.4" text-anchor="middle" textLength="8.3" lengthAdjust="spacingAndGlyphs" stroke-width="0.45">31</text>
<text x="486.9" y="480.47" fill="#006464" stroke="#006464" font-size="9" textLength="11" lengthAdjust="spacingAndGlyphs">I/O</text>
<text x="568.32" y="476.57" fill="#A90000" stroke="#A90000" font-size="8.4" text-anchor="middle" textLength="8.3" lengthAdjust="spacingAndGlyphs" stroke-width="0.45">34</text>
<text x="560.09" y="480.47" fill="#006464" stroke="#006464" font-size="9" text-anchor="end" textLength="11" lengthAdjust="spacingAndGlyphs">I/O</text>
<text x="613.5" y="476.67" fill="#000000" stroke="#000000" font-size="9" textLength="13.7" lengthAdjust="spacingAndGlyphs">MD7</text>
<text x="479.57" y="486.44" fill="#A90000" stroke="#A90000" font-size="8.4" text-anchor="middle" textLength="8.3" lengthAdjust="spacingAndGlyphs" stroke-width="0.45">32</text>
<text x="486.9" y="490.34" fill="#006464" stroke="#006464" font-size="9" textLength="14.1" lengthAdjust="spacingAndGlyphs">GND</text>
<text x="568.32" y="486.44" fill="#A90000" stroke="#A90000" font-size="8.4" text-anchor="middle" textLength="8.3" lengthAdjust="spacingAndGlyphs" stroke-width="0.45">33</text>
<text x="560.09" y="490.34" fill="#006464" stroke="#006464" font-size="9" text-anchor="end" textLength="11" lengthAdjust="spacingAndGlyphs">I/O</text>
<text x="416.3" y="486.54" fill="#000000" stroke="#000000" font-size="9" textLength="14.1" lengthAdjust="spacingAndGlyphs">GND</text>
<text x="613.5" y="486.54" fill="#000000" stroke="#000000" font-size="9" textLength="13.7" lengthAdjust="spacingAndGlyphs">MD6</text>
<text x="707.02" y="56.98" fill="#006464" stroke="#006464" font-size="9" textLength="8.3" lengthAdjust="spacingAndGlyphs">R1</text>
<text x="707.02" y="66.02" fill="#006464" stroke="#006464" font-size="9" textLength="3.7" lengthAdjust="spacingAndGlyphs">R</text>
<text x="736.6" y="56.98" fill="#006464" stroke="#006464" font-size="9" textLength="8.3" lengthAdjust="spacingAndGlyphs">R2</text>
<text x="736.6" y="66.02" fill="#006464" stroke="#006464" font-size="9" textLength="3.7" lengthAdjust="spacingAndGlyphs">R</text>
<text x="766.18" y="56.98" fill="#006464" stroke="#006464" font-size="9" textLength="8.3" lengthAdjust="spacingAndGlyphs">R3</text>
<text x="766.18" y="66.02" fill="#006464" stroke="#006464" font-size="9" textLength="3.7" lengthAdjust="spacingAndGlyphs">R</text>
<text x="795.77" y="56.98" fill="#006464" stroke="#006464" font-size="9" textLength="8.3" lengthAdjust="spacingAndGlyphs">R4</text>
<text x="795.77" y="66.02" fill="#006464" stroke="#006464" font-size="9" textLength="3.7" lengthAdjust="spacingAndGlyphs">R</text>
<text x="825.35" y="56.98" fill="#006464" stroke="#006464" font-size="9" textLength="8.3" lengthAdjust="spacingAndGlyphs">R5</text>
<text x="825.35" y="66.02" fill="#006464" stroke="#006464" font-size="9" textLength="3.7" lengthAdjust="spacingAndGlyphs">R</text>
<text x="696.52" y="22.14" fill="#006464" stroke="#006464" font-size="9" text-anchor="middle" textLength="12.9" lengthAdjust="spacingAndGlyphs">VCC</text>
<text x="672.6" y="82.23" fill="#000000" stroke="#000000" font-size="9" textLength="11" lengthAdjust="spacingAndGlyphs">TDI</text>
<text x="672.6" y="92.09" fill="#000000" stroke="#000000" font-size="9" textLength="13.7" lengthAdjust="spacingAndGlyphs">TDO</text>
<text x="672.6" y="101.95" fill="#000000" stroke="#000000" font-size="9" textLength="13.3" lengthAdjust="spacingAndGlyphs">TMS</text>
<text x="672.6" y="111.82" fill="#000000" stroke="#000000" font-size="9" textLength="12.9" lengthAdjust="spacingAndGlyphs">TCK</text>
<text x="850" y="82.23" fill="#000000" stroke="#000000" font-size="9" textLength="20.6" lengthAdjust="spacingAndGlyphs">TDI/O</text>
<text x="770.47" y="111.06" fill="#006464" stroke="#006464" font-size="9" text-anchor="middle" textLength="8.3" lengthAdjust="spacingAndGlyphs">U5</text>
<text x="735.96" y="121.58" fill="#A90000" stroke="#A90000" font-size="8.4" text-anchor="middle" textLength="3.7" lengthAdjust="spacingAndGlyphs" stroke-width="0.45">1</text>
<text x="743.29" y="125.48" fill="#006464" stroke="#006464" font-size="9" textLength="8.7" lengthAdjust="spacingAndGlyphs">NC</text>
<text x="804.99" y="121.58" fill="#A90000" stroke="#A90000" font-size="8.4" text-anchor="middle" textLength="8.3" lengthAdjust="spacingAndGlyphs" stroke-width="0.45">32</text>
<text x="796.76" y="125.48" fill="#006464" stroke="#006464" font-size="9" text-anchor="end" textLength="12.9" lengthAdjust="spacingAndGlyphs">VCC</text>
<text x="849.6" y="121.68" fill="#000000" stroke="#000000" font-size="9" textLength="12.9" lengthAdjust="spacingAndGlyphs">VCC</text>
<text x="735.96" y="131.44" fill="#A90000" stroke="#A90000" font-size="8.4" text-anchor="middle" textLength="3.7" lengthAdjust="spacingAndGlyphs" stroke-width="0.45">2</text>
<text x="743.29" y="135.34" fill="#006464" stroke="#006464" font-size="9" textLength="12.9" lengthAdjust="spacingAndGlyphs">A16</text>
<text x="804.99" y="131.44" fill="#A90000" stroke="#A90000" font-size="8.4" text-anchor="middle" textLength="8.3" lengthAdjust="spacingAndGlyphs" stroke-width="0.45">31</text>
<text x="796.76" y="135.34" fill="#006464" stroke="#006464" font-size="9" text-anchor="end" textLength="12.9" lengthAdjust="spacingAndGlyphs">A15</text>
<text x="672.6" y="131.54" fill="#000000" stroke="#000000" font-size="9" textLength="17.9" lengthAdjust="spacingAndGlyphs">MA16</text>
<text x="849.6" y="131.54" fill="#000000" stroke="#000000" font-size="9" textLength="17.9" lengthAdjust="spacingAndGlyphs">MA15</text>
<text x="735.96" y="141.3" fill="#A90000" stroke="#A90000" font-size="8.4" text-anchor="middle" textLength="3.7" lengthAdjust="spacingAndGlyphs" stroke-width="0.45">3</text>
<text x="743.29" y="145.2" fill="#006464" stroke="#006464" font-size="9" textLength="12.9" lengthAdjust="spacingAndGlyphs">A14</text>
<text x="804.99" y="141.3" fill="#A90000" stroke="#A90000" font-size="8.4" text-anchor="middle" textLength="8.3" lengthAdjust="spacingAndGlyphs" stroke-width="0.45">30</text>
<text x="796.76" y="145.2" fill="#006464" stroke="#006464" font-size="9" text-anchor="end" textLength="31.3" lengthAdjust="spacingAndGlyphs">VCC/CE2</text>
<text x="672.6" y="141.4" fill="#000000" stroke="#000000" font-size="9" textLength="17.9" lengthAdjust="spacingAndGlyphs">MA14</text>
<text x="849.6" y="141.4" fill="#000000" stroke="#000000" font-size="9" textLength="12.9" lengthAdjust="spacingAndGlyphs">VCC</text>
<text x="735.96" y="151.16" fill="#A90000" stroke="#A90000" font-size="8.4" text-anchor="middle" textLength="3.7" lengthAdjust="spacingAndGlyphs" stroke-width="0.45">4</text>
<text x="743.29" y="155.06" fill="#006464" stroke="#006464" font-size="9" textLength="12.9" lengthAdjust="spacingAndGlyphs">A12</text>
<text x="804.99" y="151.16" fill="#A90000" stroke="#A90000" font-size="8.4" text-anchor="middle" textLength="8.3" lengthAdjust="spacingAndGlyphs" stroke-width="0.45">29</text>
<text x="796.76" y="155.06" fill="#006464" stroke="#006464" font-size="9" text-anchor="end" textLength="8.7" lengthAdjust="spacingAndGlyphs">WE</text>
<text x="672.6" y="151.26" fill="#000000" stroke="#000000" font-size="9" textLength="17.9" lengthAdjust="spacingAndGlyphs">MA12</text>
<text x="849.6" y="151.26" fill="#000000" stroke="#000000" font-size="9" textLength="13.7" lengthAdjust="spacingAndGlyphs">MRW</text>
<text x="735.96" y="161.02" fill="#A90000" stroke="#A90000" font-size="8.4" text-anchor="middle" textLength="3.7" lengthAdjust="spacingAndGlyphs" stroke-width="0.45">5</text>
<text x="743.29" y="164.92" fill="#006464" stroke="#006464" font-size="9" textLength="8.3" lengthAdjust="spacingAndGlyphs">A7</text>
<text x="804.99" y="161.02" fill="#A90000" stroke="#A90000" font-size="8.4" text-anchor="middle" textLength="8.3" lengthAdjust="spacingAndGlyphs" stroke-width="0.45">28</text>
<text x="796.76" y="164.92" fill="#006464" stroke="#006464" font-size="9" text-anchor="end" textLength="12.9" lengthAdjust="spacingAndGlyphs">A13</text>
<text x="672.6" y="161.12" fill="#000000" stroke="#000000" font-size="9" textLength="13.3" lengthAdjust="spacingAndGlyphs">MA7</text>
<text x="849.6" y="161.12" fill="#000000" stroke="#000000" font-size="9" textLength="17.9" lengthAdjust="spacingAndGlyphs">MA13</text>
<text x="735.96" y="170.88" fill="#A90000" stroke="#A90000" font-size="8.4" text-anchor="middle" textLength="3.7" lengthAdjust="spacingAndGlyphs" stroke-width="0.45">6</text>
<text x="743.29" y="174.78" fill="#006464" stroke="#006464" font-size="9" textLength="8.3" lengthAdjust="spacingAndGlyphs">A6</text>
<text x="804.99" y="170.88" fill="#A90000" stroke="#A90000" font-size="8.4" text-anchor="middle" textLength="8.3" lengthAdjust="spacingAndGlyphs" stroke-width="0.45">27</text>
<text x="796.76" y="174.78" fill="#006464" stroke="#006464" font-size="9" text-anchor="end" textLength="8.3" lengthAdjust="spacingAndGlyphs">A8</text>
<text x="672.6" y="170.98" fill="#000000" stroke="#000000" font-size="9" textLength="13.3" lengthAdjust="spacingAndGlyphs">MA6</text>
<text x="849.6" y="170.98" fill="#000000" stroke="#000000" font-size="9" textLength="13.3" lengthAdjust="spacingAndGlyphs">MA8</text>
<text x="735.96" y="180.74" fill="#A90000" stroke="#A90000" font-size="8.4" text-anchor="middle" textLength="3.7" lengthAdjust="spacingAndGlyphs" stroke-width="0.45">7</text>
<text x="743.29" y="184.64" fill="#006464" stroke="#006464" font-size="9" textLength="8.3" lengthAdjust="spacingAndGlyphs">A5</text>
<text x="804.99" y="180.74" fill="#A90000" stroke="#A90000" font-size="8.4" text-anchor="middle" textLength="8.3" lengthAdjust="spacingAndGlyphs" stroke-width="0.45">26</text>
<text x="796.76" y="184.64" fill="#006464" stroke="#006464" font-size="9" text-anchor="end" textLength="8.3" lengthAdjust="spacingAndGlyphs">A9</text>
<text x="672.6" y="180.84" fill="#000000" stroke="#000000" font-size="9" textLength="13.3" lengthAdjust="spacingAndGlyphs">MA5</text>
<text x="849.6" y="180.84" fill="#000000" stroke="#000000" font-size="9" textLength="13.3" lengthAdjust="spacingAndGlyphs">MA9</text>
<text x="735.96" y="190.6" fill="#A90000" stroke="#A90000" font-size="8.4" text-anchor="middle" textLength="3.7" lengthAdjust="spacingAndGlyphs" stroke-width="0.45">8</text>
<text x="743.29" y="194.5" fill="#006464" stroke="#006464" font-size="9" textLength="8.3" lengthAdjust="spacingAndGlyphs">A4</text>
<text x="804.99" y="190.6" fill="#A90000" stroke="#A90000" font-size="8.4" text-anchor="middle" textLength="8.3" lengthAdjust="spacingAndGlyphs" stroke-width="0.45">25</text>
<text x="796.76" y="194.5" fill="#006464" stroke="#006464" font-size="9" text-anchor="end" textLength="12.9" lengthAdjust="spacingAndGlyphs">A11</text>
<text x="672.6" y="190.7" fill="#000000" stroke="#000000" font-size="9" textLength="13.3" lengthAdjust="spacingAndGlyphs">MA4</text>
<text x="849.6" y="190.7" fill="#000000" stroke="#000000" font-size="9" textLength="17.9" lengthAdjust="spacingAndGlyphs">MA11</text>
<text x="735.96" y="200.47" fill="#A90000" stroke="#A90000" font-size="8.4" text-anchor="middle" textLength="3.7" lengthAdjust="spacingAndGlyphs" stroke-width="0.45">9</text>
<text x="743.29" y="204.37" fill="#006464" stroke="#006464" font-size="9" textLength="8.3" lengthAdjust="spacingAndGlyphs">A3</text>
<text x="804.99" y="200.47" fill="#A90000" stroke="#A90000" font-size="8.4" text-anchor="middle" textLength="8.3" lengthAdjust="spacingAndGlyphs" stroke-width="0.45">24</text>
<text x="796.76" y="204.37" fill="#006464" stroke="#006464" font-size="9" text-anchor="end" textLength="8.7" lengthAdjust="spacingAndGlyphs">OE</text>
<text x="672.6" y="200.57" fill="#000000" stroke="#000000" font-size="9" textLength="13.3" lengthAdjust="spacingAndGlyphs">MA3</text>
<text x="849.6" y="200.57" fill="#000000" stroke="#000000" font-size="9" textLength="13.7" lengthAdjust="spacingAndGlyphs">MOE</text>
<text x="735.96" y="210.33" fill="#A90000" stroke="#A90000" font-size="8.4" text-anchor="middle" textLength="8.3" lengthAdjust="spacingAndGlyphs" stroke-width="0.45">10</text>
<text x="743.29" y="214.23" fill="#006464" stroke="#006464" font-size="9" textLength="8.3" lengthAdjust="spacingAndGlyphs">A2</text>
<text x="804.99" y="210.33" fill="#A90000" stroke="#A90000" font-size="8.4" text-anchor="middle" textLength="8.3" lengthAdjust="spacingAndGlyphs" stroke-width="0.45">23</text>
<text x="796.76" y="214.23" fill="#006464" stroke="#006464" font-size="9" text-anchor="end" textLength="12.9" lengthAdjust="spacingAndGlyphs">A10</text>
<text x="672.6" y="210.43" fill="#000000" stroke="#000000" font-size="9" textLength="13.3" lengthAdjust="spacingAndGlyphs">MA2</text>
<text x="849.6" y="210.43" fill="#000000" stroke="#000000" font-size="9" textLength="17.9" lengthAdjust="spacingAndGlyphs">MA10</text>
<text x="735.96" y="220.19" fill="#A90000" stroke="#A90000" font-size="8.4" text-anchor="middle" textLength="8.3" lengthAdjust="spacingAndGlyphs" stroke-width="0.45">11</text>
<text x="743.29" y="224.09" fill="#006464" stroke="#006464" font-size="9" textLength="8.3" lengthAdjust="spacingAndGlyphs">A1</text>
<text x="804.99" y="220.19" fill="#A90000" stroke="#A90000" font-size="8.4" text-anchor="middle" textLength="8.3" lengthAdjust="spacingAndGlyphs" stroke-width="0.45">22</text>
<text x="796.76" y="224.09" fill="#006464" stroke="#006464" font-size="9" text-anchor="end" textLength="12.9" lengthAdjust="spacingAndGlyphs">CE1</text>
<text x="672.6" y="220.29" fill="#000000" stroke="#000000" font-size="9" textLength="13.3" lengthAdjust="spacingAndGlyphs">MA1</text>
<text x="849.6" y="220.29" fill="#000000" stroke="#000000" font-size="9" textLength="17.9" lengthAdjust="spacingAndGlyphs">CSM1</text>
<text x="735.96" y="230.05" fill="#A90000" stroke="#A90000" font-size="8.4" text-anchor="middle" textLength="8.3" lengthAdjust="spacingAndGlyphs" stroke-width="0.45">12</text>
<text x="743.29" y="233.95" fill="#006464" stroke="#006464" font-size="9" textLength="8.3" lengthAdjust="spacingAndGlyphs">A0</text>
<text x="804.99" y="230.05" fill="#A90000" stroke="#A90000" font-size="8.4" text-anchor="middle" textLength="8.3" lengthAdjust="spacingAndGlyphs" stroke-width="0.45">21</text>
<text x="796.76" y="233.95" fill="#006464" stroke="#006464" font-size="9" text-anchor="end" textLength="8.7" lengthAdjust="spacingAndGlyphs">D7</text>
<text x="672.6" y="230.15" fill="#000000" stroke="#000000" font-size="9" textLength="13.3" lengthAdjust="spacingAndGlyphs">MA0</text>
<text x="849.6" y="230.15" fill="#000000" stroke="#000000" font-size="9" textLength="13.7" lengthAdjust="spacingAndGlyphs">MD7</text>
<text x="735.96" y="239.91" fill="#A90000" stroke="#A90000" font-size="8.4" text-anchor="middle" textLength="8.3" lengthAdjust="spacingAndGlyphs" stroke-width="0.45">13</text>
<text x="743.29" y="243.81" fill="#006464" stroke="#006464" font-size="9" textLength="8.7" lengthAdjust="spacingAndGlyphs">D0</text>
<text x="804.99" y="239.91" fill="#A90000" stroke="#A90000" font-size="8.4" text-anchor="middle" textLength="8.3" lengthAdjust="spacingAndGlyphs" stroke-width="0.45">20</text>
<text x="796.76" y="243.81" fill="#006464" stroke="#006464" font-size="9" text-anchor="end" textLength="8.7" lengthAdjust="spacingAndGlyphs">D6</text>
<text x="672.6" y="240.01" fill="#000000" stroke="#000000" font-size="9" textLength="13.7" lengthAdjust="spacingAndGlyphs">MD0</text>
<text x="849.6" y="240.01" fill="#000000" stroke="#000000" font-size="9" textLength="13.7" lengthAdjust="spacingAndGlyphs">MD6</text>
<text x="735.96" y="249.77" fill="#A90000" stroke="#A90000" font-size="8.4" text-anchor="middle" textLength="8.3" lengthAdjust="spacingAndGlyphs" stroke-width="0.45">14</text>
<text x="743.29" y="253.67" fill="#006464" stroke="#006464" font-size="9" textLength="8.7" lengthAdjust="spacingAndGlyphs">D1</text>
<text x="804.99" y="249.77" fill="#A90000" stroke="#A90000" font-size="8.4" text-anchor="middle" textLength="8.3" lengthAdjust="spacingAndGlyphs" stroke-width="0.45">19</text>
<text x="796.76" y="253.67" fill="#006464" stroke="#006464" font-size="9" text-anchor="end" textLength="8.7" lengthAdjust="spacingAndGlyphs">D5</text>
<text x="672.6" y="249.87" fill="#000000" stroke="#000000" font-size="9" textLength="13.7" lengthAdjust="spacingAndGlyphs">MD1</text>
<text x="849.6" y="249.87" fill="#000000" stroke="#000000" font-size="9" textLength="13.7" lengthAdjust="spacingAndGlyphs">MD5</text>
<text x="735.96" y="259.63" fill="#A90000" stroke="#A90000" font-size="8.4" text-anchor="middle" textLength="8.3" lengthAdjust="spacingAndGlyphs" stroke-width="0.45">15</text>
<text x="743.29" y="263.53" fill="#006464" stroke="#006464" font-size="9" textLength="8.7" lengthAdjust="spacingAndGlyphs">D2</text>
<text x="804.99" y="259.63" fill="#A90000" stroke="#A90000" font-size="8.4" text-anchor="middle" textLength="8.3" lengthAdjust="spacingAndGlyphs" stroke-width="0.45">18</text>
<text x="796.76" y="263.53" fill="#006464" stroke="#006464" font-size="9" text-anchor="end" textLength="8.7" lengthAdjust="spacingAndGlyphs">D4</text>
<text x="672.6" y="259.73" fill="#000000" stroke="#000000" font-size="9" textLength="13.7" lengthAdjust="spacingAndGlyphs">MD2</text>
<text x="849.6" y="259.73" fill="#000000" stroke="#000000" font-size="9" textLength="13.7" lengthAdjust="spacingAndGlyphs">MD4</text>
<text x="735.96" y="269.49" fill="#A90000" stroke="#A90000" font-size="8.4" text-anchor="middle" textLength="8.3" lengthAdjust="spacingAndGlyphs" stroke-width="0.45">16</text>
<text x="743.29" y="273.39" fill="#006464" stroke="#006464" font-size="9" textLength="14.1" lengthAdjust="spacingAndGlyphs">GND</text>
<text x="804.99" y="269.49" fill="#A90000" stroke="#A90000" font-size="8.4" text-anchor="middle" textLength="8.3" lengthAdjust="spacingAndGlyphs" stroke-width="0.45">17</text>
<text x="796.76" y="273.39" fill="#006464" stroke="#006464" font-size="9" text-anchor="end" textLength="8.7" lengthAdjust="spacingAndGlyphs">D3</text>
<text x="672.6" y="269.59" fill="#000000" stroke="#000000" font-size="9" textLength="14.1" lengthAdjust="spacingAndGlyphs">GND</text>
<text x="849.6" y="269.59" fill="#000000" stroke="#000000" font-size="9" textLength="13.7" lengthAdjust="spacingAndGlyphs">MD3</text>
<text x="770.47" y="328" fill="#006464" stroke="#006464" font-size="9" text-anchor="middle" textLength="8.3" lengthAdjust="spacingAndGlyphs">U3</text>
<text x="735.96" y="338.52" fill="#A90000" stroke="#A90000" font-size="8.4" text-anchor="middle" textLength="3.7" lengthAdjust="spacingAndGlyphs" stroke-width="0.45">1</text>
<text x="743.29" y="342.42" fill="#006464" stroke="#006464" font-size="9" textLength="8.7" lengthAdjust="spacingAndGlyphs">NC</text>
<text x="804.99" y="338.52" fill="#A90000" stroke="#A90000" font-size="8.4" text-anchor="middle" textLength="8.3" lengthAdjust="spacingAndGlyphs" stroke-width="0.45">32</text>
<text x="796.76" y="342.42" fill="#006464" stroke="#006464" font-size="9" text-anchor="end" textLength="12.9" lengthAdjust="spacingAndGlyphs">VCC</text>
<text x="849.6" y="338.62" fill="#000000" stroke="#000000" font-size="9" textLength="12.9" lengthAdjust="spacingAndGlyphs">VCC</text>
<text x="735.96" y="348.38" fill="#A90000" stroke="#A90000" font-size="8.4" text-anchor="middle" textLength="3.7" lengthAdjust="spacingAndGlyphs" stroke-width="0.45">2</text>
<text x="743.29" y="352.28" fill="#006464" stroke="#006464" font-size="9" textLength="12.9" lengthAdjust="spacingAndGlyphs">A16</text>
<text x="804.99" y="348.38" fill="#A90000" stroke="#A90000" font-size="8.4" text-anchor="middle" textLength="8.3" lengthAdjust="spacingAndGlyphs" stroke-width="0.45">31</text>
<text x="796.76" y="352.28" fill="#006464" stroke="#006464" font-size="9" text-anchor="end" textLength="12.9" lengthAdjust="spacingAndGlyphs">A15</text>
<text x="672.6" y="348.48" fill="#000000" stroke="#000000" font-size="9" textLength="17.9" lengthAdjust="spacingAndGlyphs">MA16</text>
<text x="849.6" y="348.48" fill="#000000" stroke="#000000" font-size="9" textLength="17.9" lengthAdjust="spacingAndGlyphs">MA15</text>
<text x="735.96" y="358.24" fill="#A90000" stroke="#A90000" font-size="8.4" text-anchor="middle" textLength="3.7" lengthAdjust="spacingAndGlyphs" stroke-width="0.45">3</text>
<text x="743.29" y="362.14" fill="#006464" stroke="#006464" font-size="9" textLength="12.9" lengthAdjust="spacingAndGlyphs">A14</text>
<text x="804.99" y="358.24" fill="#A90000" stroke="#A90000" font-size="8.4" text-anchor="middle" textLength="8.3" lengthAdjust="spacingAndGlyphs" stroke-width="0.45">30</text>
<text x="796.76" y="362.14" fill="#006464" stroke="#006464" font-size="9" text-anchor="end" textLength="31.3" lengthAdjust="spacingAndGlyphs">VCC/CE2</text>
<text x="672.6" y="358.34" fill="#000000" stroke="#000000" font-size="9" textLength="17.9" lengthAdjust="spacingAndGlyphs">MA14</text>
<text x="849.6" y="358.34" fill="#000000" stroke="#000000" font-size="9" textLength="12.9" lengthAdjust="spacingAndGlyphs">VCC</text>
<text x="735.96" y="368.1" fill="#A90000" stroke="#A90000" font-size="8.4" text-anchor="middle" textLength="3.7" lengthAdjust="spacingAndGlyphs" stroke-width="0.45">4</text>
<text x="743.29" y="372" fill="#006464" stroke="#006464" font-size="9" textLength="12.9" lengthAdjust="spacingAndGlyphs">A12</text>
<text x="804.99" y="368.1" fill="#A90000" stroke="#A90000" font-size="8.4" text-anchor="middle" textLength="8.3" lengthAdjust="spacingAndGlyphs" stroke-width="0.45">29</text>
<text x="796.76" y="372" fill="#006464" stroke="#006464" font-size="9" text-anchor="end" textLength="8.7" lengthAdjust="spacingAndGlyphs">WE</text>
<text x="672.6" y="368.2" fill="#000000" stroke="#000000" font-size="9" textLength="17.9" lengthAdjust="spacingAndGlyphs">MA12</text>
<text x="849.6" y="368.2" fill="#000000" stroke="#000000" font-size="9" textLength="13.7" lengthAdjust="spacingAndGlyphs">MRW</text>
<text x="735.96" y="377.96" fill="#A90000" stroke="#A90000" font-size="8.4" text-anchor="middle" textLength="3.7" lengthAdjust="spacingAndGlyphs" stroke-width="0.45">5</text>
<text x="743.29" y="381.86" fill="#006464" stroke="#006464" font-size="9" textLength="8.3" lengthAdjust="spacingAndGlyphs">A7</text>
<text x="804.99" y="377.96" fill="#A90000" stroke="#A90000" font-size="8.4" text-anchor="middle" textLength="8.3" lengthAdjust="spacingAndGlyphs" stroke-width="0.45">28</text>
<text x="796.76" y="381.86" fill="#006464" stroke="#006464" font-size="9" text-anchor="end" textLength="12.9" lengthAdjust="spacingAndGlyphs">A13</text>
<text x="672.6" y="378.06" fill="#000000" stroke="#000000" font-size="9" textLength="13.3" lengthAdjust="spacingAndGlyphs">MA7</text>
<text x="849.6" y="378.06" fill="#000000" stroke="#000000" font-size="9" textLength="17.9" lengthAdjust="spacingAndGlyphs">MA13</text>
<text x="735.96" y="387.82" fill="#A90000" stroke="#A90000" font-size="8.4" text-anchor="middle" textLength="3.7" lengthAdjust="spacingAndGlyphs" stroke-width="0.45">6</text>
<text x="743.29" y="391.72" fill="#006464" stroke="#006464" font-size="9" textLength="8.3" lengthAdjust="spacingAndGlyphs">A6</text>
<text x="804.99" y="387.82" fill="#A90000" stroke="#A90000" font-size="8.4" text-anchor="middle" textLength="8.3" lengthAdjust="spacingAndGlyphs" stroke-width="0.45">27</text>
<text x="796.76" y="391.72" fill="#006464" stroke="#006464" font-size="9" text-anchor="end" textLength="8.3" lengthAdjust="spacingAndGlyphs">A8</text>
<text x="672.6" y="387.92" fill="#000000" stroke="#000000" font-size="9" textLength="13.3" lengthAdjust="spacingAndGlyphs">MA6</text>
<text x="849.6" y="387.92" fill="#000000" stroke="#000000" font-size="9" textLength="13.3" lengthAdjust="spacingAndGlyphs">MA8</text>
<text x="735.96" y="397.69" fill="#A90000" stroke="#A90000" font-size="8.4" text-anchor="middle" textLength="3.7" lengthAdjust="spacingAndGlyphs" stroke-width="0.45">7</text>
<text x="743.29" y="401.59" fill="#006464" stroke="#006464" font-size="9" textLength="8.3" lengthAdjust="spacingAndGlyphs">A5</text>
<text x="804.99" y="397.69" fill="#A90000" stroke="#A90000" font-size="8.4" text-anchor="middle" textLength="8.3" lengthAdjust="spacingAndGlyphs" stroke-width="0.45">26</text>
<text x="796.76" y="401.59" fill="#006464" stroke="#006464" font-size="9" text-anchor="end" textLength="8.3" lengthAdjust="spacingAndGlyphs">A9</text>
<text x="672.6" y="397.79" fill="#000000" stroke="#000000" font-size="9" textLength="13.3" lengthAdjust="spacingAndGlyphs">MA5</text>
<text x="849.6" y="397.79" fill="#000000" stroke="#000000" font-size="9" textLength="13.3" lengthAdjust="spacingAndGlyphs">MA9</text>
<text x="735.96" y="407.55" fill="#A90000" stroke="#A90000" font-size="8.4" text-anchor="middle" textLength="3.7" lengthAdjust="spacingAndGlyphs" stroke-width="0.45">8</text>
<text x="743.29" y="411.45" fill="#006464" stroke="#006464" font-size="9" textLength="8.3" lengthAdjust="spacingAndGlyphs">A4</text>
<text x="804.99" y="407.55" fill="#A90000" stroke="#A90000" font-size="8.4" text-anchor="middle" textLength="8.3" lengthAdjust="spacingAndGlyphs" stroke-width="0.45">25</text>
<text x="796.76" y="411.45" fill="#006464" stroke="#006464" font-size="9" text-anchor="end" textLength="12.9" lengthAdjust="spacingAndGlyphs">A11</text>
<text x="672.6" y="407.65" fill="#000000" stroke="#000000" font-size="9" textLength="13.3" lengthAdjust="spacingAndGlyphs">MA4</text>
<text x="849.6" y="407.65" fill="#000000" stroke="#000000" font-size="9" textLength="17.9" lengthAdjust="spacingAndGlyphs">MA11</text>
<text x="735.96" y="417.41" fill="#A90000" stroke="#A90000" font-size="8.4" text-anchor="middle" textLength="3.7" lengthAdjust="spacingAndGlyphs" stroke-width="0.45">9</text>
<text x="743.29" y="421.31" fill="#006464" stroke="#006464" font-size="9" textLength="8.3" lengthAdjust="spacingAndGlyphs">A3</text>
<text x="804.99" y="417.41" fill="#A90000" stroke="#A90000" font-size="8.4" text-anchor="middle" textLength="8.3" lengthAdjust="spacingAndGlyphs" stroke-width="0.45">24</text>
<text x="796.76" y="421.31" fill="#006464" stroke="#006464" font-size="9" text-anchor="end" textLength="8.7" lengthAdjust="spacingAndGlyphs">OE</text>
<text x="672.6" y="417.51" fill="#000000" stroke="#000000" font-size="9" textLength="13.3" lengthAdjust="spacingAndGlyphs">MA3</text>
<text x="849.6" y="417.51" fill="#000000" stroke="#000000" font-size="9" textLength="13.7" lengthAdjust="spacingAndGlyphs">MOE</text>
<text x="735.96" y="427.27" fill="#A90000" stroke="#A90000" font-size="8.4" text-anchor="middle" textLength="8.3" lengthAdjust="spacingAndGlyphs" stroke-width="0.45">10</text>
<text x="743.29" y="431.17" fill="#006464" stroke="#006464" font-size="9" textLength="8.3" lengthAdjust="spacingAndGlyphs">A2</text>
<text x="804.99" y="427.27" fill="#A90000" stroke="#A90000" font-size="8.4" text-anchor="middle" textLength="8.3" lengthAdjust="spacingAndGlyphs" stroke-width="0.45">23</text>
<text x="796.76" y="431.17" fill="#006464" stroke="#006464" font-size="9" text-anchor="end" textLength="12.9" lengthAdjust="spacingAndGlyphs">A10</text>
<text x="672.6" y="427.37" fill="#000000" stroke="#000000" font-size="9" textLength="13.3" lengthAdjust="spacingAndGlyphs">MA2</text>
<text x="849.6" y="427.37" fill="#000000" stroke="#000000" font-size="9" textLength="17.9" lengthAdjust="spacingAndGlyphs">MA10</text>
<text x="735.96" y="437.13" fill="#A90000" stroke="#A90000" font-size="8.4" text-anchor="middle" textLength="8.3" lengthAdjust="spacingAndGlyphs" stroke-width="0.45">11</text>
<text x="743.29" y="441.03" fill="#006464" stroke="#006464" font-size="9" textLength="8.3" lengthAdjust="spacingAndGlyphs">A1</text>
<text x="804.99" y="437.13" fill="#A90000" stroke="#A90000" font-size="8.4" text-anchor="middle" textLength="8.3" lengthAdjust="spacingAndGlyphs" stroke-width="0.45">22</text>
<text x="796.76" y="441.03" fill="#006464" stroke="#006464" font-size="9" text-anchor="end" textLength="12.9" lengthAdjust="spacingAndGlyphs">CE1</text>
<text x="672.6" y="437.23" fill="#000000" stroke="#000000" font-size="9" textLength="13.3" lengthAdjust="spacingAndGlyphs">MA1</text>
<text x="849.6" y="437.23" fill="#000000" stroke="#000000" font-size="9" textLength="17.9" lengthAdjust="spacingAndGlyphs">CSM0</text>
<text x="735.96" y="446.99" fill="#A90000" stroke="#A90000" font-size="8.4" text-anchor="middle" textLength="8.3" lengthAdjust="spacingAndGlyphs" stroke-width="0.45">12</text>
<text x="743.29" y="450.89" fill="#006464" stroke="#006464" font-size="9" textLength="8.3" lengthAdjust="spacingAndGlyphs">A0</text>
<text x="804.99" y="446.99" fill="#A90000" stroke="#A90000" font-size="8.4" text-anchor="middle" textLength="8.3" lengthAdjust="spacingAndGlyphs" stroke-width="0.45">21</text>
<text x="796.76" y="450.89" fill="#006464" stroke="#006464" font-size="9" text-anchor="end" textLength="8.7" lengthAdjust="spacingAndGlyphs">D7</text>
<text x="672.6" y="447.09" fill="#000000" stroke="#000000" font-size="9" textLength="13.3" lengthAdjust="spacingAndGlyphs">MA0</text>
<text x="849.6" y="447.09" fill="#000000" stroke="#000000" font-size="9" textLength="13.7" lengthAdjust="spacingAndGlyphs">MD7</text>
<text x="735.96" y="456.85" fill="#A90000" stroke="#A90000" font-size="8.4" text-anchor="middle" textLength="8.3" lengthAdjust="spacingAndGlyphs" stroke-width="0.45">13</text>
<text x="743.29" y="460.75" fill="#006464" stroke="#006464" font-size="9" textLength="8.7" lengthAdjust="spacingAndGlyphs">D0</text>
<text x="804.99" y="456.85" fill="#A90000" stroke="#A90000" font-size="8.4" text-anchor="middle" textLength="8.3" lengthAdjust="spacingAndGlyphs" stroke-width="0.45">20</text>
<text x="796.76" y="460.75" fill="#006464" stroke="#006464" font-size="9" text-anchor="end" textLength="8.7" lengthAdjust="spacingAndGlyphs">D6</text>
<text x="672.6" y="456.95" fill="#000000" stroke="#000000" font-size="9" textLength="13.7" lengthAdjust="spacingAndGlyphs">MD0</text>
<text x="849.6" y="456.95" fill="#000000" stroke="#000000" font-size="9" textLength="13.7" lengthAdjust="spacingAndGlyphs">MD6</text>
<text x="735.96" y="466.71" fill="#A90000" stroke="#A90000" font-size="8.4" text-anchor="middle" textLength="8.3" lengthAdjust="spacingAndGlyphs" stroke-width="0.45">14</text>
<text x="743.29" y="470.61" fill="#006464" stroke="#006464" font-size="9" textLength="8.7" lengthAdjust="spacingAndGlyphs">D1</text>
<text x="804.99" y="466.71" fill="#A90000" stroke="#A90000" font-size="8.4" text-anchor="middle" textLength="8.3" lengthAdjust="spacingAndGlyphs" stroke-width="0.45">19</text>
<text x="796.76" y="470.61" fill="#006464" stroke="#006464" font-size="9" text-anchor="end" textLength="8.7" lengthAdjust="spacingAndGlyphs">D5</text>
<text x="672.6" y="466.81" fill="#000000" stroke="#000000" font-size="9" textLength="13.7" lengthAdjust="spacingAndGlyphs">MD1</text>
<text x="849.6" y="466.81" fill="#000000" stroke="#000000" font-size="9" textLength="13.7" lengthAdjust="spacingAndGlyphs">MD5</text>
<text x="735.96" y="476.57" fill="#A90000" stroke="#A90000" font-size="8.4" text-anchor="middle" textLength="8.3" lengthAdjust="spacingAndGlyphs" stroke-width="0.45">15</text>
<text x="743.29" y="480.47" fill="#006464" stroke="#006464" font-size="9" textLength="8.7" lengthAdjust="spacingAndGlyphs">D2</text>
<text x="804.99" y="476.57" fill="#A90000" stroke="#A90000" font-size="8.4" text-anchor="middle" textLength="8.3" lengthAdjust="spacingAndGlyphs" stroke-width="0.45">18</text>
<text x="796.76" y="480.47" fill="#006464" stroke="#006464" font-size="9" text-anchor="end" textLength="8.7" lengthAdjust="spacingAndGlyphs">D4</text>
<text x="672.6" y="476.67" fill="#000000" stroke="#000000" font-size="9" textLength="13.7" lengthAdjust="spacingAndGlyphs">MD2</text>
<text x="849.6" y="476.67" fill="#000000" stroke="#000000" font-size="9" textLength="13.7" lengthAdjust="spacingAndGlyphs">MD4</text>
<text x="735.96" y="486.44" fill="#A90000" stroke="#A90000" font-size="8.4" text-anchor="middle" textLength="8.3" lengthAdjust="spacingAndGlyphs" stroke-width="0.45">16</text>
<text x="743.29" y="490.34" fill="#006464" stroke="#006464" font-size="9" textLength="14.1" lengthAdjust="spacingAndGlyphs">GND</text>
<text x="804.99" y="486.44" fill="#A90000" stroke="#A90000" font-size="8.4" text-anchor="middle" textLength="8.3" lengthAdjust="spacingAndGlyphs" stroke-width="0.45">17</text>
<text x="796.76" y="490.34" fill="#006464" stroke="#006464" font-size="9" text-anchor="end" textLength="8.7" lengthAdjust="spacingAndGlyphs">D3</text>
<text x="672.6" y="486.54" fill="#000000" stroke="#000000" font-size="9" textLength="14.1" lengthAdjust="spacingAndGlyphs">GND</text>
<text x="849.6" y="486.54" fill="#000000" stroke="#000000" font-size="9" textLength="13.7" lengthAdjust="spacingAndGlyphs">MD3</text>
<text x="984.95" y="72.27" fill="#A90000" stroke="#A90000" font-size="8.4" text-anchor="middle" textLength="3.7" lengthAdjust="spacingAndGlyphs" stroke-width="0.45">1</text>
<text x="909.1" y="72.37" fill="#000000" stroke="#000000" font-size="9" textLength="12.9" lengthAdjust="spacingAndGlyphs">TCK</text>
<text x="984.95" y="82.13" fill="#A90000" stroke="#A90000" font-size="8.4" text-anchor="middle" textLength="3.7" lengthAdjust="spacingAndGlyphs" stroke-width="0.45">2</text>
<text x="909.1" y="82.23" fill="#000000" stroke="#000000" font-size="9" textLength="14.1" lengthAdjust="spacingAndGlyphs">GND</text>
<text x="984.95" y="91.99" fill="#A90000" stroke="#A90000" font-size="8.4" text-anchor="middle" textLength="3.7" lengthAdjust="spacingAndGlyphs" stroke-width="0.45">3</text>
<text x="909.1" y="92.09" fill="#000000" stroke="#000000" font-size="9" textLength="11" lengthAdjust="spacingAndGlyphs">TDI</text>
<text x="984.95" y="101.85" fill="#A90000" stroke="#A90000" font-size="8.4" text-anchor="middle" textLength="3.7" lengthAdjust="spacingAndGlyphs" stroke-width="0.45">4</text>
<text x="984.95" y="111.72" fill="#A90000" stroke="#A90000" font-size="8.4" text-anchor="middle" textLength="3.7" lengthAdjust="spacingAndGlyphs" stroke-width="0.45">5</text>
<text x="909.1" y="111.82" fill="#000000" stroke="#000000" font-size="9" textLength="13.3" lengthAdjust="spacingAndGlyphs">TMS</text>
<text x="984.95" y="121.58" fill="#A90000" stroke="#A90000" font-size="8.4" text-anchor="middle" textLength="3.7" lengthAdjust="spacingAndGlyphs" stroke-width="0.45">6</text>
<text x="984.95" y="131.44" fill="#A90000" stroke="#A90000" font-size="8.4" text-anchor="middle" textLength="3.7" lengthAdjust="spacingAndGlyphs" stroke-width="0.45">7</text>
<text x="984.95" y="141.3" fill="#A90000" stroke="#A90000" font-size="8.4" text-anchor="middle" textLength="3.7" lengthAdjust="spacingAndGlyphs" stroke-width="0.45">8</text>
<text x="984.95" y="151.16" fill="#A90000" stroke="#A90000" font-size="8.4" text-anchor="middle" textLength="3.7" lengthAdjust="spacingAndGlyphs" stroke-width="0.45">9</text>
<text x="909.1" y="151.26" fill="#000000" stroke="#000000" font-size="9" textLength="13.7" lengthAdjust="spacingAndGlyphs">TDO</text>
<text x="984.95" y="161.02" fill="#A90000" stroke="#A90000" font-size="8.4" text-anchor="middle" textLength="8.3" lengthAdjust="spacingAndGlyphs" stroke-width="0.45">10</text>
<text x="909.1" y="161.12" fill="#000000" stroke="#000000" font-size="9" textLength="14.1" lengthAdjust="spacingAndGlyphs">GND</text>
<text x="1003.6" y="115.8" fill="#006464" stroke="#006464" font-size="9" textLength="8.3" lengthAdjust="spacingAndGlyphs">J3</text>
<text x="1003.6" y="125.8" fill="#006464" stroke="#006464" font-size="9" textLength="17.9" lengthAdjust="spacingAndGlyphs">JTAG</text>
<text x="957.83" y="41.79" fill="#006464" stroke="#006464" font-size="9" text-anchor="middle" textLength="12.9" lengthAdjust="spacingAndGlyphs">VCC</text>
<text x="967.7" y="204.05" fill="#006464" stroke="#006464" font-size="9" text-anchor="middle" textLength="14.1" lengthAdjust="spacingAndGlyphs">GND</text>
<text x="980.02" y="225.12" fill="#A90000" stroke="#A90000" font-size="8.4" text-anchor="middle" textLength="3.7" lengthAdjust="spacingAndGlyphs" stroke-width="0.45">1</text>
<text x="909.1" y="225.22" fill="#000000" stroke="#000000" font-size="9" textLength="19.8" lengthAdjust="spacingAndGlyphs">SHIFT</text>
<text x="980.02" y="234.98" fill="#A90000" stroke="#A90000" font-size="8.4" text-anchor="middle" textLength="3.7" lengthAdjust="spacingAndGlyphs" stroke-width="0.45">2</text>
<text x="909.1" y="235.08" fill="#000000" stroke="#000000" font-size="9" textLength="14.1" lengthAdjust="spacingAndGlyphs">GND</text>
<text x="980.02" y="244.84" fill="#A90000" stroke="#A90000" font-size="8.4" text-anchor="middle" textLength="3.7" lengthAdjust="spacingAndGlyphs" stroke-width="0.45">3</text>
<text x="909.1" y="244.94" fill="#000000" stroke="#000000" font-size="9" textLength="17.9" lengthAdjust="spacingAndGlyphs">HDRV</text>
<text x="980.02" y="254.7" fill="#A90000" stroke="#A90000" font-size="8.4" text-anchor="middle" textLength="3.7" lengthAdjust="spacingAndGlyphs" stroke-width="0.45">4</text>
<text x="909.1" y="254.8" fill="#000000" stroke="#000000" font-size="9" textLength="14.1" lengthAdjust="spacingAndGlyphs">GND</text>
<text x="980.02" y="264.56" fill="#A90000" stroke="#A90000" font-size="8.4" text-anchor="middle" textLength="3.7" lengthAdjust="spacingAndGlyphs" stroke-width="0.45">5</text>
<text x="909.1" y="264.66" fill="#000000" stroke="#000000" font-size="9" textLength="29.4" lengthAdjust="spacingAndGlyphs">GRAPHIC</text>
<text x="980.02" y="274.42" fill="#A90000" stroke="#A90000" font-size="8.4" text-anchor="middle" textLength="3.7" lengthAdjust="spacingAndGlyphs" stroke-width="0.45">6</text>
<text x="909.1" y="274.52" fill="#000000" stroke="#000000" font-size="9" textLength="14.1" lengthAdjust="spacingAndGlyphs">GND</text>
<text x="980.02" y="284.28" fill="#A90000" stroke="#A90000" font-size="8.4" text-anchor="middle" textLength="3.7" lengthAdjust="spacingAndGlyphs" stroke-width="0.45">7</text>
<text x="909.1" y="284.38" fill="#000000" stroke="#000000" font-size="9" textLength="22.5" lengthAdjust="spacingAndGlyphs">BLANK</text>
<text x="980.02" y="294.14" fill="#A90000" stroke="#A90000" font-size="8.4" text-anchor="middle" textLength="3.7" lengthAdjust="spacingAndGlyphs" stroke-width="0.45">8</text>
<text x="909.1" y="294.24" fill="#000000" stroke="#000000" font-size="9" textLength="14.1" lengthAdjust="spacingAndGlyphs">GND</text>
<text x="980.02" y="304.01" fill="#A90000" stroke="#A90000" font-size="8.4" text-anchor="middle" textLength="3.7" lengthAdjust="spacingAndGlyphs" stroke-width="0.45">9</text>
<text x="909.1" y="304.11" fill="#000000" stroke="#000000" font-size="9" textLength="17.9" lengthAdjust="spacingAndGlyphs">VDRV</text>
<text x="980.02" y="313.87" fill="#A90000" stroke="#A90000" font-size="8.4" text-anchor="middle" textLength="8.3" lengthAdjust="spacingAndGlyphs" stroke-width="0.45">10</text>
<text x="909.1" y="313.97" fill="#000000" stroke="#000000" font-size="9" textLength="14.1" lengthAdjust="spacingAndGlyphs">GND</text>
<text x="998.1" y="268.4" fill="#006464" stroke="#006464" font-size="9" textLength="8.3" lengthAdjust="spacingAndGlyphs">J4</text>
<text x="998.1" y="278.4" fill="#006464" stroke="#006464" font-size="9" textLength="28.4" lengthAdjust="spacingAndGlyphs">TRS-80</text>
<text x="971.5" y="397.69" fill="#A90000" stroke="#A90000" font-size="8.4" text-anchor="end" textLength="3.7" lengthAdjust="spacingAndGlyphs" stroke-width="0.45">5</text>
<text x="971.5" y="407.55" fill="#A90000" stroke="#A90000" font-size="8.4" text-anchor="end" textLength="8.3" lengthAdjust="spacingAndGlyphs" stroke-width="0.45">10</text>
<text x="909.1" y="407.65" fill="#000000" stroke="#000000" font-size="9" textLength="14.1" lengthAdjust="spacingAndGlyphs">GND</text>
<text x="971.5" y="417.41" fill="#A90000" stroke="#A90000" font-size="8.4" text-anchor="end" textLength="3.7" lengthAdjust="spacingAndGlyphs" stroke-width="0.45">4</text>
<text x="971.5" y="427.27" fill="#A90000" stroke="#A90000" font-size="8.4" text-anchor="end" textLength="3.7" lengthAdjust="spacingAndGlyphs" stroke-width="0.45">9</text>
<text x="909.1" y="427.37" fill="#000000" stroke="#000000" font-size="9" textLength="14.1" lengthAdjust="spacingAndGlyphs">GND</text>
<text x="971.5" y="437.13" fill="#A90000" stroke="#A90000" font-size="8.4" text-anchor="end" textLength="3.7" lengthAdjust="spacingAndGlyphs" stroke-width="0.45">3</text>
<text x="909.1" y="437.23" fill="#000000" stroke="#000000" font-size="9" textLength="17.9" lengthAdjust="spacingAndGlyphs">BOUT</text>
<text x="971.5" y="446.99" fill="#A90000" stroke="#A90000" font-size="8.4" text-anchor="end" textLength="3.7" lengthAdjust="spacingAndGlyphs" stroke-width="0.45">8</text>
<text x="909.1" y="447.09" fill="#000000" stroke="#000000" font-size="9" textLength="14.1" lengthAdjust="spacingAndGlyphs">GND</text>
<text x="971.5" y="456.85" fill="#A90000" stroke="#A90000" font-size="8.4" text-anchor="end" textLength="3.7" lengthAdjust="spacingAndGlyphs" stroke-width="0.45">2</text>
<text x="909.1" y="456.95" fill="#000000" stroke="#000000" font-size="9" textLength="17.9" lengthAdjust="spacingAndGlyphs">VOUT</text>
<text x="971.5" y="466.71" fill="#A90000" stroke="#A90000" font-size="8.4" text-anchor="end" textLength="3.7" lengthAdjust="spacingAndGlyphs" stroke-width="0.45">7</text>
<text x="909.1" y="466.81" fill="#000000" stroke="#000000" font-size="9" textLength="14.1" lengthAdjust="spacingAndGlyphs">GND</text>
<text x="971.5" y="476.57" fill="#A90000" stroke="#A90000" font-size="8.4" text-anchor="end" textLength="3.7" lengthAdjust="spacingAndGlyphs" stroke-width="0.45">1</text>
<text x="909.1" y="476.67" fill="#000000" stroke="#000000" font-size="9" textLength="17.9" lengthAdjust="spacingAndGlyphs">ROUT</text>
<text x="971.5" y="486.44" fill="#A90000" stroke="#A90000" font-size="8.4" text-anchor="end" textLength="3.7" lengthAdjust="spacingAndGlyphs" stroke-width="0.45">6</text>
<text x="909.1" y="486.54" fill="#000000" stroke="#000000" font-size="9" textLength="14.1" lengthAdjust="spacingAndGlyphs">GND</text>
<text x="1003" y="397.69" fill="#A90000" stroke="#A90000" font-size="8.4" textLength="8.3" lengthAdjust="spacingAndGlyphs" stroke-width="0.45">15</text>
<text x="1003" y="417.41" fill="#A90000" stroke="#A90000" font-size="8.4" textLength="8.3" lengthAdjust="spacingAndGlyphs" stroke-width="0.45">14</text>
<text x="1003" y="437.13" fill="#A90000" stroke="#A90000" font-size="8.4" textLength="8.3" lengthAdjust="spacingAndGlyphs" stroke-width="0.45">13</text>
<text x="1003" y="456.85" fill="#A90000" stroke="#A90000" font-size="8.4" textLength="8.3" lengthAdjust="spacingAndGlyphs" stroke-width="0.45">12</text>
<text x="1003" y="476.57" fill="#A90000" stroke="#A90000" font-size="8.4" textLength="8.3" lengthAdjust="spacingAndGlyphs" stroke-width="0.45">11</text>
<text x="986.68" y="361.5" fill="#006464" stroke="#006464" font-size="9" text-anchor="middle" textLength="8.3" lengthAdjust="spacingAndGlyphs">J1</text>
<text x="986.68" y="371" fill="#006464" stroke="#006464" font-size="9" text-anchor="middle" textLength="13.3" lengthAdjust="spacingAndGlyphs">VGA</text>
<text x="909.1" y="511.19" fill="#000000" stroke="#000000" font-size="9" textLength="14.1" lengthAdjust="spacingAndGlyphs">GND</text>
<text x="909.1" y="521.05" fill="#000000" stroke="#000000" font-size="9" textLength="22.5" lengthAdjust="spacingAndGlyphs">HSYNC</text>
<text x="909.1" y="530.91" fill="#000000" stroke="#000000" font-size="9" textLength="22.5" lengthAdjust="spacingAndGlyphs">VSYNC</text>
<text x="70.34" y="500.03" fill="#006464" stroke="#006464" font-size="9" text-anchor="middle" textLength="12.9" lengthAdjust="spacingAndGlyphs">VCC</text>
<text x="85.04" y="590" fill="#006464" stroke="#006464" font-size="9" transform="rotate(-90 85.04 590)" text-anchor="middle" textLength="14.1" lengthAdjust="spacingAndGlyphs">GND</text>
<text x="111" y="550.63" fill="#000000" stroke="#000000" font-size="9" textLength="12.9" lengthAdjust="spacingAndGlyphs">CLK</text>
<text x="87.34" y="538" fill="#006464" stroke="#006464" font-size="9" textLength="-0.9" lengthAdjust="spacingAndGlyphs"></text>
<text x="119.6" y="530" fill="#006464" stroke="#006464" font-size="9" text-anchor="middle" textLength="8.3" lengthAdjust="spacingAndGlyphs">X1</text>
<text x="119.5" y="540" fill="#006464" stroke="#006464" font-size="9" text-anchor="middle" textLength="47.8" lengthAdjust="spacingAndGlyphs">OSCILLATEUR</text>
<text x="52.4" y="554.43" fill="#006464" stroke="#006464" font-size="9" textLength="8.7" lengthAdjust="spacingAndGlyphs">EN</text>
<text x="88.8" y="554.43" fill="#006464" stroke="#006464" font-size="9" text-anchor="end" textLength="13.3" lengthAdjust="spacingAndGlyphs">OUT</text>
<text x="72.94" y="540" fill="#006464" stroke="#006464" font-size="9" transform="rotate(-90 72.94 540)" text-anchor="middle" textLength="11.9" lengthAdjust="spacingAndGlyphs">Vcc</text>
<text x="72.94" y="563" fill="#006464" stroke="#006464" font-size="9" transform="rotate(-90 72.94 563)" text-anchor="middle" textLength="14.1" lengthAdjust="spacingAndGlyphs">GND</text>
<text x="69.04" y="527" fill="#A90000" stroke="#A90000" font-size="8.4" transform="rotate(-90 69.04 527)" text-anchor="middle" textLength="3.7" lengthAdjust="spacingAndGlyphs">8</text>
<text x="69.04" y="576" fill="#A90000" stroke="#A90000" font-size="8.4" transform="rotate(-90 69.04 576)" text-anchor="middle" textLength="3.7" lengthAdjust="spacingAndGlyphs">4</text>
<text x="45.7" y="550.53" fill="#A90000" stroke="#A90000" font-size="8.4" text-anchor="middle" textLength="3.7" lengthAdjust="spacingAndGlyphs" stroke-width="0.45">1</text>
<text x="95" y="550.53" fill="#A90000" stroke="#A90000" font-size="8.4" text-anchor="middle" textLength="3.7" lengthAdjust="spacingAndGlyphs" stroke-width="0.45">5</text>
<text x="61.29" y="628.52" fill="#006464" stroke="#006464" font-size="9" textLength="8.3" lengthAdjust="spacingAndGlyphs">C1</text>
<text x="61.29" y="638.12" fill="#006464" stroke="#006464" font-size="9" textLength="3.7" lengthAdjust="spacingAndGlyphs">C</text>
<text x="95.8" y="628.52" fill="#006464" stroke="#006464" font-size="9" textLength="8.3" lengthAdjust="spacingAndGlyphs">C2</text>
<text x="95.8" y="638.12" fill="#006464" stroke="#006464" font-size="9" textLength="3.7" lengthAdjust="spacingAndGlyphs">C</text>
<text x="135.25" y="628.52" fill="#006464" stroke="#006464" font-size="9" textLength="8.3" lengthAdjust="spacingAndGlyphs">C3</text>
<text x="135.25" y="638.12" fill="#006464" stroke="#006464" font-size="9" textLength="3.7" lengthAdjust="spacingAndGlyphs">C</text>
<text x="174.69" y="628.52" fill="#006464" stroke="#006464" font-size="9" textLength="8.3" lengthAdjust="spacingAndGlyphs">C4</text>
<text x="174.69" y="638.12" fill="#006464" stroke="#006464" font-size="9" textLength="3.7" lengthAdjust="spacingAndGlyphs">C</text>
<text x="214.13" y="628.52" fill="#006464" stroke="#006464" font-size="9" textLength="8.3" lengthAdjust="spacingAndGlyphs">C5</text>
<text x="214.13" y="638.12" fill="#006464" stroke="#006464" font-size="9" textLength="3.7" lengthAdjust="spacingAndGlyphs">C</text>
<text x="248.65" y="628.52" fill="#006464" stroke="#006464" font-size="9" textLength="8.3" lengthAdjust="spacingAndGlyphs">C6</text>
<text x="248.65" y="638.12" fill="#006464" stroke="#006464" font-size="9" textLength="3.7" lengthAdjust="spacingAndGlyphs">C</text>
<text x="288.09" y="628.52" fill="#006464" stroke="#006464" font-size="9" textLength="8.3" lengthAdjust="spacingAndGlyphs">C7</text>
<text x="288.09" y="638.12" fill="#006464" stroke="#006464" font-size="9" textLength="3.7" lengthAdjust="spacingAndGlyphs">C</text>
<text x="327.54" y="628.52" fill="#006464" stroke="#006464" font-size="9" textLength="8.3" lengthAdjust="spacingAndGlyphs">C8</text>
<text x="327.54" y="638.12" fill="#006464" stroke="#006464" font-size="9" textLength="3.7" lengthAdjust="spacingAndGlyphs">C</text>
<text x="371.91" y="628.52" fill="#006464" stroke="#006464" font-size="9" textLength="12.9" lengthAdjust="spacingAndGlyphs">C17</text>
<text x="371.91" y="638.12" fill="#006464" stroke="#006464" font-size="9" textLength="3.7" lengthAdjust="spacingAndGlyphs">C</text>
<text x="406.42" y="628.52" fill="#006464" stroke="#006464" font-size="9" textLength="12.9" lengthAdjust="spacingAndGlyphs">C18</text>
<text x="406.42" y="638.12" fill="#006464" stroke="#006464" font-size="9" textLength="3.7" lengthAdjust="spacingAndGlyphs">C</text>
<text x="445.87" y="628.52" fill="#006464" stroke="#006464" font-size="9" textLength="12.9" lengthAdjust="spacingAndGlyphs">C19</text>
<text x="445.87" y="638.12" fill="#006464" stroke="#006464" font-size="9" textLength="3.7" lengthAdjust="spacingAndGlyphs">C</text>
<text x="485.31" y="628.52" fill="#006464" stroke="#006464" font-size="9" textLength="12.9" lengthAdjust="spacingAndGlyphs">C20</text>
<text x="485.31" y="638.12" fill="#006464" stroke="#006464" font-size="9" textLength="3.7" lengthAdjust="spacingAndGlyphs">C</text>
<text x="61.29" y="682.76" fill="#006464" stroke="#006464" font-size="9" textLength="8.3" lengthAdjust="spacingAndGlyphs">C9</text>
<text x="61.29" y="692.36" fill="#006464" stroke="#006464" font-size="9" textLength="3.7" lengthAdjust="spacingAndGlyphs">C</text>
<text x="95.8" y="682.76" fill="#006464" stroke="#006464" font-size="9" textLength="12.9" lengthAdjust="spacingAndGlyphs">C10</text>
<text x="95.8" y="692.36" fill="#006464" stroke="#006464" font-size="9" textLength="3.7" lengthAdjust="spacingAndGlyphs">C</text>
<text x="135.25" y="682.76" fill="#006464" stroke="#006464" font-size="9" textLength="12.9" lengthAdjust="spacingAndGlyphs">C11</text>
<text x="135.25" y="692.36" fill="#006464" stroke="#006464" font-size="9" textLength="3.7" lengthAdjust="spacingAndGlyphs">C</text>
<text x="174.69" y="682.76" fill="#006464" stroke="#006464" font-size="9" textLength="12.9" lengthAdjust="spacingAndGlyphs">C12</text>
<text x="174.69" y="692.36" fill="#006464" stroke="#006464" font-size="9" textLength="3.7" lengthAdjust="spacingAndGlyphs">C</text>
<text x="214.13" y="682.76" fill="#006464" stroke="#006464" font-size="9" textLength="12.9" lengthAdjust="spacingAndGlyphs">C13</text>
<text x="214.13" y="692.36" fill="#006464" stroke="#006464" font-size="9" textLength="3.7" lengthAdjust="spacingAndGlyphs">C</text>
<text x="248.65" y="682.76" fill="#006464" stroke="#006464" font-size="9" textLength="12.9" lengthAdjust="spacingAndGlyphs">C14</text>
<text x="248.65" y="692.36" fill="#006464" stroke="#006464" font-size="9" textLength="3.7" lengthAdjust="spacingAndGlyphs">C</text>
<text x="288.09" y="682.76" fill="#006464" stroke="#006464" font-size="9" textLength="12.9" lengthAdjust="spacingAndGlyphs">C15</text>
<text x="288.09" y="692.36" fill="#006464" stroke="#006464" font-size="9" textLength="3.7" lengthAdjust="spacingAndGlyphs">C</text>
<text x="327.54" y="682.76" fill="#006464" stroke="#006464" font-size="9" textLength="12.9" lengthAdjust="spacingAndGlyphs">C16</text>
<text x="327.54" y="692.36" fill="#006464" stroke="#006464" font-size="9" textLength="3.7" lengthAdjust="spacingAndGlyphs">C</text>
<text x="356.31" y="573.78" fill="#006464" stroke="#006464" font-size="9" text-anchor="middle" textLength="12.9" lengthAdjust="spacingAndGlyphs">VCC</text>
<text x="390.82" y="687.25" fill="#006464" stroke="#006464" font-size="9" text-anchor="middle" textLength="14.1" lengthAdjust="spacingAndGlyphs">GND</text>
</g>
</svg>
</body></html>
